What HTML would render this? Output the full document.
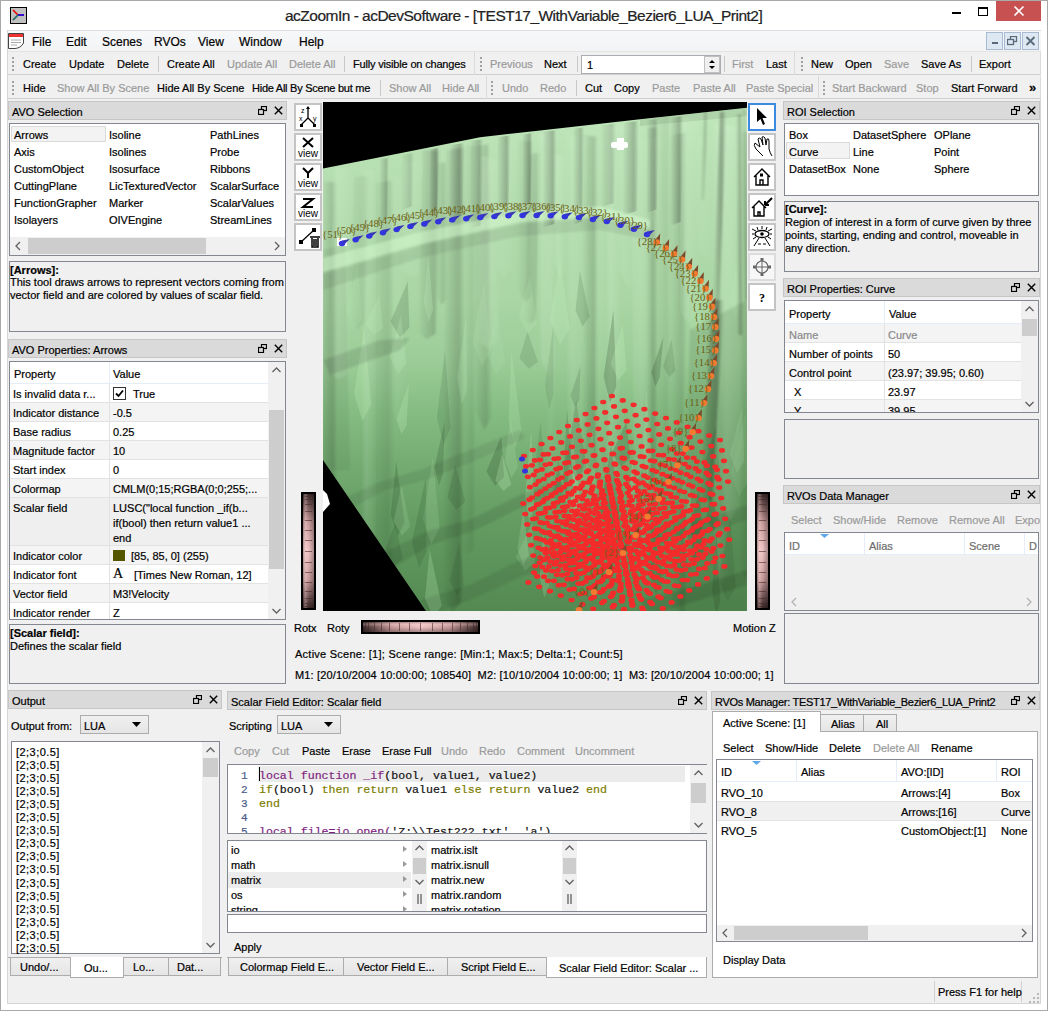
<!DOCTYPE html>
<html><head><meta charset="utf-8"><style>
html,body{margin:0;padding:0;}
body{width:1048px;height:1011px;position:relative;overflow:hidden;background:#fff;font-family:"Liberation Sans",sans-serif;font-size:11px;color:#000;}
.t{position:absolute;white-space:pre;line-height:1;-webkit-text-stroke:0.2px currentColor;}
.b{position:absolute;box-sizing:border-box;}
svg{position:absolute;}
</style></head><body>
<div class="b" style="left:0px;top:0px;width:1048px;height:1011px;background:#fff;border:1px solid #a9a9a9;"></div>
<div class="b" style="left:8px;top:31px;width:1033px;height:973px;background:#f0f0f0;"></div>
<div class="b" style="left:7px;top:30px;width:1px;height:974px;background:#d5d5d5;"></div>
<div class="b" style="left:7px;top:1003px;width:1034px;height:1px;background:#d5d5d5;"></div>
<div class="b" style="left:1040px;top:30px;width:1px;height:974px;background:#d5d5d5;"></div>
<svg style="left:10px;top:7px" width="17" height="17" viewBox="0 0 17 17"><rect x="0.5" y="0.5" width="16" height="16" fill="#c0c0c0" stroke="#000"/><path d="M8 8 L3 3 M8 8 L14 8 M8 8 L3 13" stroke-width="1.5" fill="none" stroke="#e00"/><path d="M8 8 L14 8" stroke="#00f" stroke-width="1.5"/><path d="M8 8 L3 13" stroke="#088" stroke-width="1.5"/></svg>
<div class="t" style="left:285px;top:7.88px;font-size:15.5px;color:#222;letter-spacing:-0.51px;">acZoomIn - acDevSoftware - [TEST17_WithVariable_Bezier6_LUA_Print2]</div>
<div class="b" style="left:952px;top:12px;width:9px;height:2px;background:#000;"></div>
<div class="b" style="left:978px;top:7px;width:10px;height:9px;border:1px solid #000;border-top-width:2px;"></div>
<div class="b" style="left:996px;top:1px;width:45px;height:20px;background:#c75050;"></div>
<svg style="left:1012px;top:5px" width="14" height="12" viewBox="0 0 14 12"><path d="M2.5 1.5 L11.5 10.5 M11.5 1.5 L2.5 10.5" stroke="#fff" stroke-width="1.6"/></svg>
<div class="b" style="left:8px;top:30px;width:1033px;height:22px;background:linear-gradient(#f7f8fa,#f2f3f5);"></div>
<div class="b" style="left:8px;top:30px;width:1033px;height:1px;background:#dcdde0;"></div>
<div class="b" style="left:8px;top:51px;width:1033px;height:1px;background:#e3e3e3;"></div>
<svg style="left:8px;top:33px" width="17" height="17" viewBox="0 0 17 17"><path d="M0.5 0.5 H15.5 V10 Q13 15 7 15.5 H0.5 Z" fill="#fff" stroke="#444"/><rect x="1" y="1" width="14" height="3" fill="#e33"/><path d="M3 7 H13 M3 9.5 H13 M3 12 H9" stroke="#aaa"/></svg>
<div class="t" style="left:32px;top:35.84px;font-size:12px;">File</div>
<div class="t" style="left:66px;top:35.84px;font-size:12px;">Edit</div>
<div class="t" style="left:102px;top:35.84px;font-size:12px;">Scenes</div>
<div class="t" style="left:154px;top:35.84px;font-size:12px;">RVOs</div>
<div class="t" style="left:198px;top:35.84px;font-size:12px;">View</div>
<div class="t" style="left:239px;top:35.84px;font-size:12px;">Window</div>
<div class="t" style="left:299px;top:35.84px;font-size:12px;">Help</div>
<div class="b" style="left:986px;top:32px;width:17px;height:18px;background:#dde8f3;border:1px solid #a8bbd0;"></div>
<div class="b" style="left:1004px;top:32px;width:17px;height:18px;background:#dde8f3;border:1px solid #a8bbd0;"></div>
<div class="b" style="left:1022px;top:32px;width:17px;height:18px;background:#dde8f3;border:1px solid #a8bbd0;"></div>
<div class="b" style="left:992px;top:42px;width:6px;height:2px;background:#5a6a7a;"></div>
<svg style="left:1007px;top:36px" width="11" height="10" viewBox="0 0 11 10"><rect x="3.5" y="0.5" width="6" height="5" fill="none" stroke="#5a6a7a" stroke-width="1.3"/><rect x="0.5" y="3.5" width="6" height="5" fill="#dde8f3" stroke="#5a6a7a" stroke-width="1.3"/></svg>
<svg style="left:1025px;top:36px" width="11" height="10" viewBox="0 0 11 10"><path d="M1.5 1 L9.5 9 M9.5 1 L1.5 9" stroke="#5a6a7a" stroke-width="1.8"/></svg>
<div class="b" style="left:8px;top:52px;width:1033px;height:47px;background:#f0f0f0;"></div>
<div class="b" style="left:8px;top:52px;width:467px;height:23px;background:#f0f0f0;"></div>
<div class="b" style="left:8px;top:74px;width:467px;height:1px;background:#cfcfcf;"></div>
<div class="b" style="left:474px;top:52px;width:1px;height:23px;background:#dadada;"></div>
<div class="b" style="left:475px;top:52px;width:320px;height:23px;background:#f0f0f0;"></div>
<div class="b" style="left:475px;top:74px;width:320px;height:1px;background:#cfcfcf;"></div>
<div class="b" style="left:794px;top:52px;width:1px;height:23px;background:#dadada;"></div>
<div class="b" style="left:795px;top:52px;width:246px;height:23px;background:#f0f0f0;"></div>
<div class="b" style="left:795px;top:74px;width:246px;height:1px;background:#cfcfcf;"></div>
<div class="b" style="left:1040px;top:52px;width:1px;height:23px;background:#dadada;"></div>
<div class="b" style="left:8px;top:76px;width:479px;height:23px;background:#f0f0f0;"></div>
<div class="b" style="left:8px;top:98px;width:479px;height:1px;background:#cfcfcf;"></div>
<div class="b" style="left:486px;top:76px;width:1px;height:23px;background:#dadada;"></div>
<div class="b" style="left:487px;top:76px;width:332px;height:23px;background:#f0f0f0;"></div>
<div class="b" style="left:487px;top:98px;width:332px;height:1px;background:#cfcfcf;"></div>
<div class="b" style="left:818px;top:76px;width:1px;height:23px;background:#dadada;"></div>
<div class="b" style="left:819px;top:76px;width:222px;height:23px;background:#f0f0f0;"></div>
<div class="b" style="left:819px;top:98px;width:222px;height:1px;background:#cfcfcf;"></div>
<div class="b" style="left:1040px;top:76px;width:1px;height:23px;background:#dadada;"></div>
<div class="b" style="left:12px;top:57px;width:2px;height:2px;background:#a0a0a0;"></div>
<div class="b" style="left:12px;top:61px;width:2px;height:2px;background:#a0a0a0;"></div>
<div class="b" style="left:12px;top:65px;width:2px;height:2px;background:#a0a0a0;"></div>
<div class="b" style="left:12px;top:69px;width:2px;height:2px;background:#a0a0a0;"></div>
<div class="b" style="left:480px;top:57px;width:2px;height:2px;background:#a0a0a0;"></div>
<div class="b" style="left:480px;top:61px;width:2px;height:2px;background:#a0a0a0;"></div>
<div class="b" style="left:480px;top:65px;width:2px;height:2px;background:#a0a0a0;"></div>
<div class="b" style="left:480px;top:69px;width:2px;height:2px;background:#a0a0a0;"></div>
<div class="b" style="left:801px;top:57px;width:2px;height:2px;background:#a0a0a0;"></div>
<div class="b" style="left:801px;top:61px;width:2px;height:2px;background:#a0a0a0;"></div>
<div class="b" style="left:801px;top:65px;width:2px;height:2px;background:#a0a0a0;"></div>
<div class="b" style="left:801px;top:69px;width:2px;height:2px;background:#a0a0a0;"></div>
<div class="b" style="left:12px;top:81px;width:2px;height:2px;background:#a0a0a0;"></div>
<div class="b" style="left:12px;top:85px;width:2px;height:2px;background:#a0a0a0;"></div>
<div class="b" style="left:12px;top:89px;width:2px;height:2px;background:#a0a0a0;"></div>
<div class="b" style="left:12px;top:93px;width:2px;height:2px;background:#a0a0a0;"></div>
<div class="b" style="left:491px;top:81px;width:2px;height:2px;background:#a0a0a0;"></div>
<div class="b" style="left:491px;top:85px;width:2px;height:2px;background:#a0a0a0;"></div>
<div class="b" style="left:491px;top:89px;width:2px;height:2px;background:#a0a0a0;"></div>
<div class="b" style="left:491px;top:93px;width:2px;height:2px;background:#a0a0a0;"></div>
<div class="b" style="left:823px;top:81px;width:2px;height:2px;background:#a0a0a0;"></div>
<div class="b" style="left:823px;top:85px;width:2px;height:2px;background:#a0a0a0;"></div>
<div class="b" style="left:823px;top:89px;width:2px;height:2px;background:#a0a0a0;"></div>
<div class="b" style="left:823px;top:93px;width:2px;height:2px;background:#a0a0a0;"></div>
<div class="t" style="left:23px;top:58.69px;">Create</div>
<div class="t" style="left:69px;top:58.69px;">Update</div>
<div class="t" style="left:117px;top:58.69px;">Delete</div>
<div class="t" style="left:167px;top:58.69px;">Create All</div>
<div class="t" style="left:227px;top:58.69px;color:#9a9a9a;">Update All</div>
<div class="t" style="left:289px;top:58.69px;color:#9a9a9a;">Delete All</div>
<div class="t" style="left:353px;top:58.69px;letter-spacing:-0.18px;">Fully visible on changes</div>
<div class="t" style="left:490px;top:58.69px;color:#9a9a9a;">Previous</div>
<div class="t" style="left:544px;top:58.69px;">Next</div>
<div class="t" style="left:732px;top:58.69px;color:#9a9a9a;">First</div>
<div class="t" style="left:766px;top:58.69px;">Last</div>
<div class="t" style="left:811px;top:58.69px;">New</div>
<div class="t" style="left:845px;top:58.69px;">Open</div>
<div class="t" style="left:884px;top:58.69px;color:#9a9a9a;">Save</div>
<div class="t" style="left:921px;top:58.69px;">Save As</div>
<div class="t" style="left:979px;top:58.69px;">Export</div>
<div class="b" style="left:158px;top:56px;width:1px;height:16px;background:#c9c9c9;"></div>
<div class="b" style="left:344px;top:56px;width:1px;height:16px;background:#c9c9c9;"></div>
<div class="b" style="left:577px;top:56px;width:1px;height:16px;background:#c9c9c9;"></div>
<div class="b" style="left:724px;top:56px;width:1px;height:16px;background:#c9c9c9;"></div>
<div class="b" style="left:971px;top:56px;width:1px;height:16px;background:#c9c9c9;"></div>
<div class="b" style="left:581px;top:55px;width:140px;height:19px;background:#fff;border:1px solid #abadb3;"></div>
<div class="t" style="left:587px;top:59.69px;">1</div>
<div class="b" style="left:704px;top:56px;width:16px;height:17px;background:#f0f0f0;border:1px solid #c0c0c0;"></div>
<svg style="left:707px;top:57px" width="10" height="15" viewBox="0 0 10 15"><path d="M2 6 L5 3 L8 6 Z M2 9 L5 12 L8 9 Z" fill="#000"/></svg>
<div class="t" style="left:23px;top:82.69px;">Hide</div>
<div class="t" style="left:57px;top:82.69px;color:#9a9a9a;">Show All By Scene</div>
<div class="t" style="left:157px;top:82.69px;">Hide All By Scene</div>
<div class="t" style="left:252px;top:82.69px;letter-spacing:-0.25px;">Hide All By Scene but me</div>
<div class="t" style="left:389px;top:82.69px;color:#9a9a9a;">Show All</div>
<div class="t" style="left:442px;top:82.69px;color:#9a9a9a;">Hide All</div>
<div class="t" style="left:502px;top:82.69px;color:#9a9a9a;">Undo</div>
<div class="t" style="left:540px;top:82.69px;color:#9a9a9a;">Redo</div>
<div class="t" style="left:585px;top:82.69px;">Cut</div>
<div class="t" style="left:614px;top:82.69px;">Copy</div>
<div class="t" style="left:652px;top:82.69px;color:#9a9a9a;">Paste</div>
<div class="t" style="left:693px;top:82.69px;color:#9a9a9a;">Paste All</div>
<div class="t" style="left:746px;top:82.69px;color:#9a9a9a;">Paste Special</div>
<div class="t" style="left:832px;top:82.69px;color:#9a9a9a;">Start Backward</div>
<div class="t" style="left:916px;top:82.69px;color:#9a9a9a;">Stop</div>
<div class="t" style="left:951px;top:82.69px;">Start Forward</div>
<div class="b" style="left:380px;top:80px;width:1px;height:16px;background:#c9c9c9;"></div>
<div class="b" style="left:576px;top:80px;width:1px;height:16px;background:#c9c9c9;"></div>
<div class="t" style="left:1029px;top:81.00px;font-size:13px;font-weight:bold;">»</div>
<div class="b" style="left:8px;top:101px;width:279px;height:19px;background:#dadada;border:1px solid #c6c6c6;"></div>
<div class="t" style="left:12px;top:106.69px;">AVO Selection</div>
<svg style="left:258px;top:106px" width="9" height="9" viewBox="0 0 9 9"><rect x="3.5" y="0.5" width="5" height="4" fill="none" stroke="#000" stroke-width="1.2"/><rect x="0.5" y="3.5" width="5" height="5" fill="#dadada" stroke="#000" stroke-width="1.2"/></svg>
<svg style="left:274px;top:106px" width="9" height="9" viewBox="0 0 9 9"><path d="M0.8 0.8 L8.2 8.2 M8.2 0.8 L0.8 8.2" stroke="#000" stroke-width="1.4"/></svg>
<div class="b" style="left:9px;top:123px;width:277px;height:133px;background:#fff;border:1px solid #828790;"></div>
<div class="b" style="left:11px;top:126px;width:95px;height:16px;background:#f3f3f3;border:1px solid #dadada;"></div>
<div class="t" style="left:14px;top:129.69px;">Arrows</div>
<div class="t" style="left:14px;top:146.69px;">Axis</div>
<div class="t" style="left:14px;top:163.69px;">CustomObject</div>
<div class="t" style="left:14px;top:180.69px;">CuttingPlane</div>
<div class="t" style="left:14px;top:197.69px;">FunctionGrapher</div>
<div class="t" style="left:14px;top:214.69px;">Isolayers</div>
<div class="t" style="left:109px;top:129.69px;">Isoline</div>
<div class="t" style="left:109px;top:146.69px;">Isolines</div>
<div class="t" style="left:109px;top:163.69px;">Isosurface</div>
<div class="t" style="left:109px;top:180.69px;">LicTexturedVector</div>
<div class="t" style="left:109px;top:197.69px;">Marker</div>
<div class="t" style="left:109px;top:214.69px;">OIVEngine</div>
<div class="t" style="left:210px;top:129.69px;">PathLines</div>
<div class="t" style="left:210px;top:146.69px;">Probe</div>
<div class="t" style="left:210px;top:163.69px;">Ribbons</div>
<div class="t" style="left:210px;top:180.69px;">ScalarSurface</div>
<div class="t" style="left:210px;top:197.69px;">ScalarValues</div>
<div class="t" style="left:210px;top:214.69px;">StreamLines</div>
<div class="b" style="left:10px;top:237px;width:275px;height:18px;background:#f0f0f0;"></div>
<div class="b" style="left:28px;top:238px;width:178px;height:16px;background:#cdcdcd;"></div>
<svg style="left:12px;top:239px" width="12" height="14" viewBox="0 0 12 14"><path d="M8 3 L4 7 L8 11" fill="none" stroke="#606060" stroke-width="1.3"/></svg>
<svg style="left:271px;top:239px" width="12" height="14" viewBox="0 0 12 14"><path d="M4 3 L8 7 L4 11" fill="none" stroke="#606060" stroke-width="1.3"/></svg>
<div class="b" style="left:9px;top:261px;width:277px;height:71px;background:#f0f0f0;border:1px solid #828790;"></div>
<div class="t" style="left:10px;top:264.69px;font-weight:bold;">[Arrows]:</div>
<div class="t" style="left:10px;top:276.69px;">This tool draws arrows to represent vectors coming from</div>
<div class="t" style="left:10px;top:289.69px;">vector field and are colored by values of scalar field.</div>
<div class="b" style="left:8px;top:339px;width:279px;height:19px;background:#dadada;border:1px solid #c6c6c6;"></div>
<div class="t" style="left:12px;top:344.69px;">AVO Properties: Arrows</div>
<svg style="left:258px;top:344px" width="9" height="9" viewBox="0 0 9 9"><rect x="3.5" y="0.5" width="5" height="4" fill="none" stroke="#000" stroke-width="1.2"/><rect x="0.5" y="3.5" width="5" height="5" fill="#dadada" stroke="#000" stroke-width="1.2"/></svg>
<svg style="left:274px;top:344px" width="9" height="9" viewBox="0 0 9 9"><path d="M0.8 0.8 L8.2 8.2 M8.2 0.8 L0.8 8.2" stroke="#000" stroke-width="1.4"/></svg>
<div class="b" style="left:9px;top:361px;width:277px;height:259px;background:#fff;border:1px solid #828790;"></div>
<div class="b" style="left:10px;top:362px;width:258px;height:22px;background:#fff;"></div>
<div class="b" style="left:10px;top:383px;width:258px;height:1px;background:#e5eef8;"></div>
<div class="b" style="left:109px;top:362px;width:1px;height:22px;background:#e5eef8;"></div>
<div class="t" style="left:14px;top:368.69px;">Property</div>
<div class="t" style="left:113px;top:368.69px;">Value</div>
<div class="b" style="left:10px;top:384px;width:258px;height:19px;background:#fff;"></div>
<div class="b" style="left:10px;top:402px;width:258px;height:1px;background:#e2e2e2;"></div>
<div class="b" style="left:109px;top:384px;width:1px;height:19px;background:#e2e2e2;"></div>
<div class="t" style="left:13px;top:388.69px;">Is invalid data r...</div>
<div class="b" style="left:113px;top:387px;width:13px;height:13px;background:#fff;border:1px solid #333;"></div>
<svg style="left:114px;top:388px" width="11" height="11" viewBox="0 0 11 11"><path d="M2 5.5 L4.5 8 L9 2.5" fill="none" stroke="#000" stroke-width="1.8"/></svg>
<div class="t" style="left:133px;top:388.69px;">True</div>
<div class="b" style="left:10px;top:403px;width:258px;height:19px;background:#f4f4f4;"></div>
<div class="b" style="left:10px;top:421px;width:258px;height:1px;background:#e2e2e2;"></div>
<div class="b" style="left:109px;top:403px;width:1px;height:19px;background:#e2e2e2;"></div>
<div class="t" style="left:13px;top:407.69px;">Indicator distance</div>
<div class="t" style="left:113px;top:407.69px;">-0.5</div>
<div class="b" style="left:10px;top:422px;width:258px;height:19px;background:#fff;"></div>
<div class="b" style="left:10px;top:440px;width:258px;height:1px;background:#e2e2e2;"></div>
<div class="b" style="left:109px;top:422px;width:1px;height:19px;background:#e2e2e2;"></div>
<div class="t" style="left:13px;top:426.69px;">Base radius</div>
<div class="t" style="left:113px;top:426.69px;">0.25</div>
<div class="b" style="left:10px;top:441px;width:258px;height:19px;background:#f4f4f4;"></div>
<div class="b" style="left:10px;top:459px;width:258px;height:1px;background:#e2e2e2;"></div>
<div class="b" style="left:109px;top:441px;width:1px;height:19px;background:#e2e2e2;"></div>
<div class="t" style="left:13px;top:445.69px;">Magnitude factor</div>
<div class="t" style="left:113px;top:445.69px;">10</div>
<div class="b" style="left:10px;top:460px;width:258px;height:19px;background:#fff;"></div>
<div class="b" style="left:10px;top:478px;width:258px;height:1px;background:#e2e2e2;"></div>
<div class="b" style="left:109px;top:460px;width:1px;height:19px;background:#e2e2e2;"></div>
<div class="t" style="left:13px;top:464.69px;">Start index</div>
<div class="t" style="left:113px;top:464.69px;">0</div>
<div class="b" style="left:10px;top:479px;width:258px;height:19px;background:#f4f4f4;"></div>
<div class="b" style="left:10px;top:497px;width:258px;height:1px;background:#e2e2e2;"></div>
<div class="b" style="left:109px;top:479px;width:1px;height:19px;background:#e2e2e2;"></div>
<div class="t" style="left:13px;top:483.69px;">Colormap</div>
<div class="t" style="left:113px;top:483.69px;">CMLM(0;15;RGBA(0;0;255;...</div>
<div class="b" style="left:10px;top:498px;width:258px;height:48px;background:#efefef;"></div>
<div class="b" style="left:10px;top:545px;width:258px;height:1px;background:#e2e2e2;"></div>
<div class="b" style="left:109px;top:498px;width:1px;height:48px;background:#e2e2e2;"></div>
<div class="t" style="left:13px;top:502.69px;">Scalar field</div>
<div class="t" style="left:113px;top:502.69px;">LUSC("local function _if(b...</div>
<div class="t" style="left:113px;top:517.69px;">if(bool) then return value1 ...</div>
<div class="t" style="left:113px;top:532.69px;">end</div>
<div class="b" style="left:10px;top:546px;width:258px;height:19px;background:#f4f4f4;"></div>
<div class="b" style="left:10px;top:564px;width:258px;height:1px;background:#e2e2e2;"></div>
<div class="b" style="left:109px;top:546px;width:1px;height:19px;background:#e2e2e2;"></div>
<div class="t" style="left:13px;top:550.69px;">Indicator color</div>
<div class="b" style="left:113px;top:550px;width:12px;height:11px;background:#555500;"></div>
<div class="t" style="left:131px;top:550.69px;">[85, 85, 0] (255)</div>
<div class="b" style="left:10px;top:565px;width:258px;height:19px;background:#fff;"></div>
<div class="b" style="left:10px;top:583px;width:258px;height:1px;background:#e2e2e2;"></div>
<div class="b" style="left:109px;top:565px;width:1px;height:19px;background:#e2e2e2;"></div>
<div class="t" style="left:13px;top:569.69px;">Indicator font</div>
<div class="t" style="left:113px;top:567.15px;font-size:14px;font-family:'Liberation Serif',serif;">A</div>
<div class="t" style="left:134px;top:569.69px;">[Times New Roman, 12]</div>
<div class="b" style="left:10px;top:584px;width:258px;height:19px;background:#f4f4f4;"></div>
<div class="b" style="left:10px;top:602px;width:258px;height:1px;background:#e2e2e2;"></div>
<div class="b" style="left:109px;top:584px;width:1px;height:19px;background:#e2e2e2;"></div>
<div class="t" style="left:13px;top:588.69px;">Vector field</div>
<div class="t" style="left:113px;top:588.69px;">M3!Velocity</div>
<div class="b" style="left:10px;top:603px;width:258px;height:16px;background:#fff;"></div>
<div class="b" style="left:109px;top:603px;width:1px;height:16px;background:#e2e2e2;"></div>
<div class="t" style="left:13px;top:607.69px;">Indicator render</div>
<div class="t" style="left:113px;top:607.69px;">Z</div>
<div class="b" style="left:268px;top:362px;width:17px;height:257px;background:#f0f0f0;"></div>
<div class="b" style="left:269px;top:410px;width:15px;height:159px;background:#cdcdcd;"></div>
<svg style="left:268px;top:362px" width="17" height="17" viewBox="0 0 17 17"><path d="M4.5 10 L8.5 6 L12.5 10" fill="none" stroke="#606060" stroke-width="1.3"/></svg>
<svg style="left:268px;top:602px" width="17" height="17" viewBox="0 0 17 17"><path d="M4.5 7 L8.5 11 L12.5 7" fill="none" stroke="#606060" stroke-width="1.3"/></svg>
<div class="b" style="left:9px;top:624px;width:277px;height:60px;background:#f0f0f0;border:1px solid #828790;"></div>
<div class="t" style="left:10px;top:627.69px;font-weight:bold;">[Scalar field]:</div>
<div class="t" style="left:10px;top:640.69px;">Defines the scalar field</div>
<div class="b" style="left:294px;top:103px;width:28px;height:28px;background:#fff;border:1px solid #c4c4c4;border-width:2px;"></div>
<svg style="left:294px;top:103px" width="28" height="28" viewBox="0 0 28 28"><path d="M14 4 V15 L7 22 M14 15 L21 22" stroke="#000" fill="none" stroke-width="1.3"/><path d="M12 6 L14 3 L16 6 Z" fill="#000"/><rect x="6" y="21" width="3" height="3"/><rect x="19" y="21" width="3" height="3"/><text x="7" y="10" font-size="7" font-family="Liberation Sans">z</text><text x="5" y="18" font-size="7" font-family="Liberation Sans">x</text><text x="19" y="18" font-size="7" font-family="Liberation Sans">y</text></svg>
<div class="b" style="left:294px;top:133px;width:28px;height:28px;background:#fff;border:1px solid #c4c4c4;border-width:2px;"></div>
<svg style="left:294px;top:133px" width="28" height="28" viewBox="0 0 28 28"><path d="M9 5 L19 14 M19 5 L9 14" stroke="#000" stroke-width="2"/><text x="14" y="24" font-size="10" text-anchor="middle" font-family="Liberation Sans">view</text></svg>
<div class="b" style="left:294px;top:163px;width:28px;height:28px;background:#fff;border:1px solid #c4c4c4;border-width:2px;"></div>
<svg style="left:294px;top:163px" width="28" height="28" viewBox="0 0 28 28"><path d="M9 5 L14 10 L19 5 M14 10 V15" stroke="#000" stroke-width="2" fill="none"/><text x="14" y="24" font-size="10" text-anchor="middle" font-family="Liberation Sans">view</text></svg>
<div class="b" style="left:294px;top:193px;width:28px;height:28px;background:#fff;border:1px solid #c4c4c4;border-width:2px;"></div>
<svg style="left:294px;top:193px" width="28" height="28" viewBox="0 0 28 28"><path d="M9 6 H19 L9 14 H19" stroke="#000" stroke-width="2" fill="none"/><text x="14" y="24" font-size="10" text-anchor="middle" font-family="Liberation Sans">view</text></svg>
<div class="b" style="left:294px;top:223px;width:28px;height:28px;background:#fff;border:1px solid #c4c4c4;border-width:2px;"></div>
<svg style="left:294px;top:223px" width="28" height="28" viewBox="0 0 28 28"><path d="M7 19 L20 7" stroke="#000" stroke-width="1.2"/><rect x="5" y="17" width="4" height="4"/><rect x="18" y="5" width="4" height="4"/><path d="M16 14 H26 M18 15 V24 H24 V15 M20 16 V23 M22 16 V23" stroke="#000" stroke-width="1.5" fill="none"/></svg>
<div class="b" style="left:748px;top:103px;width:28px;height:28px;background:#fff;border:1px solid #3c8be0;border-width:2px;"></div>
<svg style="left:748px;top:103px" width="28" height="28" viewBox="0 0 28 28"><path d="M9 5 V19 L12.5 16 L15 22 L17 21 L14.5 15 L19 15 Z" fill="#000"/></svg>
<div class="b" style="left:748px;top:133px;width:28px;height:28px;background:#fff;border:1px solid #c4c4c4;border-width:2px;"></div>
<svg style="left:748px;top:133px" width="28" height="28" viewBox="0 0 28 28"><path d="M8 16 Q5 12 7 10 L12 14 L10 6 Q11 4 13 6 L15 12 L14 4 Q16 3 17 5 L18 12 L19 6 Q21 5 21 8 L21 16 Q22 20 24 23 M8 16 L15 23" fill="none" stroke="#000" stroke-width="1"/></svg>
<div class="b" style="left:748px;top:163px;width:28px;height:28px;background:#fff;border:1px solid #c4c4c4;border-width:2px;"></div>
<svg style="left:748px;top:163px" width="28" height="28" viewBox="0 0 28 28"><path d="M6 14 L14 6 L22 14 M8 12 V22 H20 V12 M12 22 V17 H15 V22" fill="none" stroke="#000" stroke-width="1.4"/><rect x="12.5" y="11" width="2" height="2" fill="none" stroke="#000"/></svg>
<div class="b" style="left:748px;top:193px;width:28px;height:28px;background:#fff;border:1px solid #c4c4c4;border-width:2px;"></div>
<svg style="left:748px;top:193px" width="28" height="28" viewBox="0 0 28 28"><path d="M4 15 L11 8 L18 15 M6 13 V23 H16 V13 M10 23 V19 H12 V23" fill="none" stroke="#000" stroke-width="1.4"/><path d="M24 5 L17 12 M17 12 V8 M17 12 H21" stroke="#000" stroke-width="2" fill="none"/></svg>
<div class="b" style="left:748px;top:223px;width:28px;height:28px;background:#fff;border:1px solid #c4c4c4;border-width:2px;"></div>
<svg style="left:748px;top:223px" width="28" height="28" viewBox="0 0 28 28"><ellipse cx="14" cy="11" rx="7" ry="3.5" fill="none" stroke="#000" stroke-width="1.3"/><circle cx="14" cy="11" r="1.8"/><path d="M4 6 L8 8 M24 6 L20 8 M14 3 V6 M9 4 L10 7 M19 4 L18 7 M4 11 H6 M22 11 H24 M5 16 L8 14 M23 16 L20 14 M11 15 L6 23 M17 15 L22 23 M10 21 L13 21 M18 21 L15 21" stroke="#000" stroke-width="1" fill="none"/></svg>
<div class="b" style="left:748px;top:253px;width:28px;height:28px;background:#f7f7f7;border:1px solid #dcdcdc;border-width:2px;"></div>
<svg style="left:748px;top:253px" width="28" height="28" viewBox="0 0 28 28"><circle cx="14" cy="14" r="6" fill="none" stroke="#666" stroke-width="1.2"/><path d="M14 5 V23 M5 14 H23" stroke="#666" stroke-width="1"/><rect x="12.5" y="5" width="3" height="3" fill="#666"/><rect x="12.5" y="20" width="3" height="3" fill="#666"/><rect x="5" y="12.5" width="3" height="3" fill="#666"/><rect x="20" y="12.5" width="3" height="3" fill="#666"/></svg>
<div class="b" style="left:748px;top:283px;width:28px;height:28px;background:#fff;border:1px solid #c4c4c4;border-width:2px;"></div>
<svg style="left:748px;top:283px" width="28" height="28" viewBox="0 0 28 28"><rect x="6" y="6" width="16" height="16" fill="#fff"/><text x="14" y="19" font-size="12" font-weight="bold" text-anchor="middle" font-family="Liberation Serif">?</text></svg>
<div class="b" style="left:301px;top:492px;width:15px;height:118px;background:#000;"></div>
<div class="b" style="left:303px;top:494px;width:11px;height:114px;background:linear-gradient(#3a2828,#c89a9a 25%,#f0c4c4 50%,#c89a9a 75%,#3a2828);"></div>
<div class="b" style="left:303px;top:494px;width:11px;height:114px;background:linear-gradient(90deg,rgba(0,0,0,0.25),rgba(255,220,220,0.35) 20%,rgba(0,0,0,0) 50%,rgba(0,0,0,0.3));"></div>
<div class="b" style="left:305px;top:496px;width:7px;height:1px;background:rgba(70,40,40,0.6);"></div>
<div class="b" style="left:305px;top:499px;width:7px;height:1px;background:rgba(70,40,40,0.6);"></div>
<div class="b" style="left:305px;top:504px;width:7px;height:1px;background:rgba(70,40,40,0.6);"></div>
<div class="b" style="left:305px;top:511px;width:7px;height:1px;background:rgba(70,40,40,0.6);"></div>
<div class="b" style="left:305px;top:520px;width:7px;height:1px;background:rgba(70,40,40,0.6);"></div>
<div class="b" style="left:305px;top:530px;width:7px;height:1px;background:rgba(70,40,40,0.6);"></div>
<div class="b" style="left:305px;top:540px;width:7px;height:1px;background:rgba(70,40,40,0.6);"></div>
<div class="b" style="left:305px;top:551px;width:7px;height:1px;background:rgba(70,40,40,0.6);"></div>
<div class="b" style="left:305px;top:562px;width:7px;height:1px;background:rgba(70,40,40,0.6);"></div>
<div class="b" style="left:305px;top:572px;width:7px;height:1px;background:rgba(70,40,40,0.6);"></div>
<div class="b" style="left:305px;top:582px;width:7px;height:1px;background:rgba(70,40,40,0.6);"></div>
<div class="b" style="left:305px;top:591px;width:7px;height:1px;background:rgba(70,40,40,0.6);"></div>
<div class="b" style="left:305px;top:598px;width:7px;height:1px;background:rgba(70,40,40,0.6);"></div>
<div class="b" style="left:305px;top:603px;width:7px;height:1px;background:rgba(70,40,40,0.6);"></div>
<div class="b" style="left:305px;top:606px;width:7px;height:1px;background:rgba(70,40,40,0.6);"></div>
<div class="b" style="left:755px;top:492px;width:15px;height:118px;background:#000;"></div>
<div class="b" style="left:757px;top:494px;width:11px;height:114px;background:linear-gradient(#3a2828,#c89a9a 25%,#f0c4c4 50%,#c89a9a 75%,#3a2828);"></div>
<div class="b" style="left:757px;top:494px;width:11px;height:114px;background:linear-gradient(90deg,rgba(0,0,0,0.25),rgba(255,220,220,0.35) 20%,rgba(0,0,0,0) 50%,rgba(0,0,0,0.3));"></div>
<div class="b" style="left:759px;top:496px;width:7px;height:1px;background:rgba(70,40,40,0.6);"></div>
<div class="b" style="left:759px;top:499px;width:7px;height:1px;background:rgba(70,40,40,0.6);"></div>
<div class="b" style="left:759px;top:504px;width:7px;height:1px;background:rgba(70,40,40,0.6);"></div>
<div class="b" style="left:759px;top:511px;width:7px;height:1px;background:rgba(70,40,40,0.6);"></div>
<div class="b" style="left:759px;top:520px;width:7px;height:1px;background:rgba(70,40,40,0.6);"></div>
<div class="b" style="left:759px;top:530px;width:7px;height:1px;background:rgba(70,40,40,0.6);"></div>
<div class="b" style="left:759px;top:540px;width:7px;height:1px;background:rgba(70,40,40,0.6);"></div>
<div class="b" style="left:759px;top:551px;width:7px;height:1px;background:rgba(70,40,40,0.6);"></div>
<div class="b" style="left:759px;top:562px;width:7px;height:1px;background:rgba(70,40,40,0.6);"></div>
<div class="b" style="left:759px;top:572px;width:7px;height:1px;background:rgba(70,40,40,0.6);"></div>
<div class="b" style="left:759px;top:582px;width:7px;height:1px;background:rgba(70,40,40,0.6);"></div>
<div class="b" style="left:759px;top:591px;width:7px;height:1px;background:rgba(70,40,40,0.6);"></div>
<div class="b" style="left:759px;top:598px;width:7px;height:1px;background:rgba(70,40,40,0.6);"></div>
<div class="b" style="left:759px;top:603px;width:7px;height:1px;background:rgba(70,40,40,0.6);"></div>
<div class="b" style="left:759px;top:606px;width:7px;height:1px;background:rgba(70,40,40,0.6);"></div>
<div class="b" style="left:361px;top:620px;width:119px;height:14px;background:#000;"></div>
<div class="b" style="left:363px;top:622px;width:115px;height:10px;background:linear-gradient(90deg,#3a2828,#c89a9a 25%,#f0c4c4 50%,#c89a9a 75%,#3a2828);"></div>
<div class="b" style="left:363px;top:622px;width:115px;height:10px;background:linear-gradient(rgba(0,0,0,0.25),rgba(255,220,220,0.35) 20%,rgba(0,0,0,0) 50%,rgba(0,0,0,0.3));"></div>
<div class="b" style="left:365px;top:623px;width:1px;height:8px;background:rgba(70,40,40,0.6);"></div>
<div class="b" style="left:368px;top:623px;width:1px;height:8px;background:rgba(70,40,40,0.6);"></div>
<div class="b" style="left:374px;top:623px;width:1px;height:8px;background:rgba(70,40,40,0.6);"></div>
<div class="b" style="left:381px;top:623px;width:1px;height:8px;background:rgba(70,40,40,0.6);"></div>
<div class="b" style="left:389px;top:623px;width:1px;height:8px;background:rgba(70,40,40,0.6);"></div>
<div class="b" style="left:399px;top:623px;width:1px;height:8px;background:rgba(70,40,40,0.6);"></div>
<div class="b" style="left:409px;top:623px;width:1px;height:8px;background:rgba(70,40,40,0.6);"></div>
<div class="b" style="left:420px;top:623px;width:1px;height:8px;background:rgba(70,40,40,0.6);"></div>
<div class="b" style="left:432px;top:623px;width:1px;height:8px;background:rgba(70,40,40,0.6);"></div>
<div class="b" style="left:442px;top:623px;width:1px;height:8px;background:rgba(70,40,40,0.6);"></div>
<div class="b" style="left:452px;top:623px;width:1px;height:8px;background:rgba(70,40,40,0.6);"></div>
<div class="b" style="left:460px;top:623px;width:1px;height:8px;background:rgba(70,40,40,0.6);"></div>
<div class="b" style="left:467px;top:623px;width:1px;height:8px;background:rgba(70,40,40,0.6);"></div>
<div class="b" style="left:473px;top:623px;width:1px;height:8px;background:rgba(70,40,40,0.6);"></div>
<div class="b" style="left:476px;top:623px;width:1px;height:8px;background:rgba(70,40,40,0.6);"></div>
<div class="t" style="left:294px;top:622.69px;">Rotx</div>
<div class="t" style="left:327px;top:622.69px;">Roty</div>
<div class="t" style="left:733px;top:622.69px;">Motion Z</div>
<div class="t" style="left:295px;top:648.69px;letter-spacing:0.25px;">Active Scene: [1]; Scene range: [Min:1; Max:5; Delta:1; Count:5]</div>
<div class="t" style="left:295px;top:669.69px;letter-spacing:0.15px;">M1: [20/10/2004 10:00:00; 108540]  M2: [10/10/2004 10:00:00; 1]  M3: [20/10/2004 10:00:00; 1]</div>
<div class="b" style="left:783px;top:101px;width:257px;height:19px;background:#dadada;border:1px solid #c6c6c6;"></div>
<div class="t" style="left:787px;top:106.69px;">ROI Selection</div>
<svg style="left:1011px;top:106px" width="9" height="9" viewBox="0 0 9 9"><rect x="3.5" y="0.5" width="5" height="4" fill="none" stroke="#000" stroke-width="1.2"/><rect x="0.5" y="3.5" width="5" height="5" fill="#dadada" stroke="#000" stroke-width="1.2"/></svg>
<svg style="left:1027px;top:106px" width="9" height="9" viewBox="0 0 9 9"><path d="M0.8 0.8 L8.2 8.2 M8.2 0.8 L0.8 8.2" stroke="#000" stroke-width="1.4"/></svg>
<div class="b" style="left:784px;top:123px;width:255px;height:73px;background:#fff;border:1px solid #828790;"></div>
<div class="b" style="left:786px;top:142px;width:64px;height:17px;background:#f3f3f3;border:1px solid #dadada;"></div>
<div class="t" style="left:789px;top:129.69px;">Box</div>
<div class="t" style="left:789px;top:146.69px;">Curve</div>
<div class="t" style="left:789px;top:163.69px;">DatasetBox</div>
<div class="t" style="left:853px;top:129.69px;">DatasetSphere</div>
<div class="t" style="left:853px;top:146.69px;">Line</div>
<div class="t" style="left:853px;top:163.69px;">None</div>
<div class="t" style="left:934px;top:129.69px;">OPlane</div>
<div class="t" style="left:934px;top:146.69px;">Point</div>
<div class="t" style="left:934px;top:163.69px;">Sphere</div>
<div class="b" style="left:784px;top:201px;width:255px;height:71px;background:#f0f0f0;border:1px solid #828790;"></div>
<div class="t" style="left:785px;top:203.69px;font-weight:bold;">[Curve]:</div>
<div class="t" style="left:785px;top:216.69px;">Region of interest in a form of curve given by three</div>
<div class="t" style="left:785px;top:229.69px;">points, starting, ending and control, moveable in</div>
<div class="t" style="left:785px;top:242.69px;">any direction.</div>
<div class="b" style="left:783px;top:278px;width:257px;height:19px;background:#dadada;border:1px solid #c6c6c6;"></div>
<div class="t" style="left:787px;top:283.69px;">ROI Properties: Curve</div>
<svg style="left:1011px;top:283px" width="9" height="9" viewBox="0 0 9 9"><rect x="3.5" y="0.5" width="5" height="4" fill="none" stroke="#000" stroke-width="1.2"/><rect x="0.5" y="3.5" width="5" height="5" fill="#dadada" stroke="#000" stroke-width="1.2"/></svg>
<svg style="left:1027px;top:283px" width="9" height="9" viewBox="0 0 9 9"><path d="M0.8 0.8 L8.2 8.2 M8.2 0.8 L0.8 8.2" stroke="#000" stroke-width="1.4"/></svg>
<div class="b" style="left:784px;top:300px;width:255px;height:113px;background:#fff;border:1px solid #828790;"></div>
<div class="b" style="left:785px;top:301px;width:236px;height:23px;background:#fff;"></div>
<div class="b" style="left:785px;top:323px;width:236px;height:1px;background:#e5eef8;"></div>
<div class="b" style="left:884px;top:301px;width:1px;height:23px;background:#e5eef8;"></div>
<div class="t" style="left:789px;top:308.69px;">Property</div>
<div class="t" style="left:889px;top:308.69px;">Value</div>
<div class="b" style="left:785px;top:324px;width:236px;height:19px;background:#f4f4f4;"></div>
<div class="b" style="left:785px;top:342px;width:236px;height:1px;background:#e2e2e2;"></div>
<div class="b" style="left:884px;top:324px;width:1px;height:19px;background:#e2e2e2;"></div>
<div class="t" style="left:789px;top:329.69px;color:#8a8a8a;">Name</div>
<div class="t" style="left:888px;top:329.69px;color:#8a8a8a;">Curve</div>
<div class="b" style="left:785px;top:343px;width:236px;height:19px;background:#fff;"></div>
<div class="b" style="left:785px;top:361px;width:236px;height:1px;background:#e2e2e2;"></div>
<div class="b" style="left:884px;top:343px;width:1px;height:19px;background:#e2e2e2;"></div>
<div class="t" style="left:789px;top:348.69px;">Number of points</div>
<div class="t" style="left:888px;top:348.69px;">50</div>
<div class="b" style="left:785px;top:362px;width:236px;height:19px;background:#f4f4f4;"></div>
<div class="b" style="left:785px;top:380px;width:236px;height:1px;background:#e2e2e2;"></div>
<div class="b" style="left:884px;top:362px;width:1px;height:19px;background:#e2e2e2;"></div>
<div class="t" style="left:789px;top:367.69px;">Control point</div>
<div class="t" style="left:888px;top:367.69px;">(23.97; 39.95; 0.60)</div>
<div class="b" style="left:785px;top:381px;width:236px;height:19px;background:#fff;"></div>
<div class="b" style="left:785px;top:399px;width:236px;height:1px;background:#e2e2e2;"></div>
<div class="b" style="left:884px;top:381px;width:1px;height:19px;background:#e2e2e2;"></div>
<div class="t" style="left:794px;top:386.69px;">X</div>
<div class="t" style="left:888px;top:386.69px;">23.97</div>
<div class="b" style="left:785px;top:400px;width:236px;height:12px;background:#f4f4f4;"></div>
<div class="b" style="left:884px;top:400px;width:1px;height:12px;background:#e2e2e2;"></div>
<div class="t" style="left:794px;top:405.69px;">Y</div>
<div class="t" style="left:888px;top:405.69px;">39.95</div>
<div class="b" style="left:1021px;top:301px;width:17px;height:111px;background:#f0f0f0;"></div>
<div class="b" style="left:1022px;top:319px;width:15px;height:17px;background:#cdcdcd;"></div>
<svg style="left:1021px;top:301px" width="17" height="17" viewBox="0 0 17 17"><path d="M4.5 10 L8.5 6 L12.5 10" fill="none" stroke="#606060" stroke-width="1.3"/></svg>
<svg style="left:1021px;top:395px" width="17" height="17" viewBox="0 0 17 17"><path d="M4.5 7 L8.5 11 L12.5 7" fill="none" stroke="#606060" stroke-width="1.3"/></svg>
<div class="b" style="left:784px;top:412px;width:255px;height:6px;background:#f0f0f0;"></div>
<div class="b" style="left:784px;top:412px;width:255px;height:1px;background:#828790;"></div>
<div class="b" style="left:784px;top:419px;width:255px;height:60px;background:#f0f0f0;border:1px solid #828790;"></div>
<div class="b" style="left:783px;top:485px;width:257px;height:19px;background:#dadada;border:1px solid #c6c6c6;"></div>
<div class="t" style="left:787px;top:490.69px;">RVOs Data Manager</div>
<svg style="left:1011px;top:490px" width="9" height="9" viewBox="0 0 9 9"><rect x="3.5" y="0.5" width="5" height="4" fill="none" stroke="#000" stroke-width="1.2"/><rect x="0.5" y="3.5" width="5" height="5" fill="#dadada" stroke="#000" stroke-width="1.2"/></svg>
<svg style="left:1027px;top:490px" width="9" height="9" viewBox="0 0 9 9"><path d="M0.8 0.8 L8.2 8.2 M8.2 0.8 L0.8 8.2" stroke="#000" stroke-width="1.4"/></svg>
<div class="t" style="left:791px;top:514.69px;color:#9a9a9a;">Select</div>
<div class="t" style="left:833px;top:514.69px;color:#9a9a9a;">Show/Hide</div>
<div class="t" style="left:897px;top:514.69px;color:#9a9a9a;">Remove</div>
<div class="t" style="left:949px;top:514.69px;color:#9a9a9a;">Remove All</div>
<div class="t" style="left:1015px;top:514.69px;color:#9a9a9a;">Expo</div>
<div class="b" style="left:784px;top:532px;width:255px;height:79px;background:#f0f0f0;border:1px solid #828790;"></div>
<div class="b" style="left:785px;top:533px;width:253px;height:22px;background:#fff;"></div>
<div class="b" style="left:785px;top:554px;width:253px;height:1px;background:#e5eef8;"></div>
<div class="b" style="left:864px;top:533px;width:1px;height:22px;background:#e5eef8;"></div>
<div class="b" style="left:964px;top:533px;width:1px;height:22px;background:#e5eef8;"></div>
<div class="b" style="left:1024px;top:533px;width:1px;height:22px;background:#e5eef8;"></div>
<div class="t" style="left:789px;top:540.69px;color:#6d6d6d;">ID</div>
<div class="t" style="left:869px;top:540.69px;color:#6d6d6d;">Alias</div>
<div class="t" style="left:969px;top:540.69px;color:#6d6d6d;">Scene</div>
<div class="t" style="left:1029px;top:540.69px;color:#6d6d6d;">D</div>
<svg style="left:820px;top:534px" width="9" height="5" viewBox="0 0 9 5"><path d="M0 0 H9 L4.5 4 Z" fill="#5ea8e8"/></svg>
<div class="b" style="left:785px;top:593px;width:253px;height:17px;background:#f0f0f0;"></div>
<svg style="left:788px;top:595px" width="12" height="14" viewBox="0 0 12 14"><path d="M8 3 L4 7 L8 11" fill="none" stroke="#b0b0b0" stroke-width="1.2"/></svg>
<svg style="left:1023px;top:595px" width="12" height="14" viewBox="0 0 12 14"><path d="M4 3 L8 7 L4 11" fill="none" stroke="#b0b0b0" stroke-width="1.2"/></svg>
<div class="b" style="left:784px;top:613px;width:255px;height:71px;background:#f0f0f0;border:1px solid #828790;"></div>
<div class="b" style="left:8px;top:690px;width:214px;height:19px;background:#dadada;border:1px solid #c6c6c6;"></div>
<div class="t" style="left:12px;top:695.69px;">Output</div>
<svg style="left:193px;top:695px" width="9" height="9" viewBox="0 0 9 9"><rect x="3.5" y="0.5" width="5" height="4" fill="none" stroke="#000" stroke-width="1.2"/><rect x="0.5" y="3.5" width="5" height="5" fill="#dadada" stroke="#000" stroke-width="1.2"/></svg>
<svg style="left:209px;top:695px" width="9" height="9" viewBox="0 0 9 9"><path d="M0.8 0.8 L8.2 8.2 M8.2 0.8 L0.8 8.2" stroke="#000" stroke-width="1.4"/></svg>
<div class="t" style="left:11px;top:720.69px;">Output from:</div>
<div class="b" style="left:80px;top:715px;width:69px;height:19px;background:#e5e5e5;border:1px solid #acacac;background:linear-gradient(#f0f0f0,#e5e5e5);"></div>
<div class="t" style="left:84px;top:720.69px;">LUA</div>
<svg style="left:132px;top:722px" width="9" height="5" viewBox="0 0 9 5"><path d="M0 0 H9 L4.5 5 Z" fill="#000"/></svg>
<div class="b" style="left:11px;top:741px;width:209px;height:213px;background:#fff;border:1px solid #828790;"></div>
<div class="t" style="left:16px;top:746.69px;letter-spacing:0.45px;">[2;3;0.5]</div>
<div class="t" style="left:16px;top:759.69px;letter-spacing:0.45px;">[2;3;0.5]</div>
<div class="t" style="left:16px;top:772.69px;letter-spacing:0.45px;">[2;3;0.5]</div>
<div class="t" style="left:16px;top:785.69px;letter-spacing:0.45px;">[2;3;0.5]</div>
<div class="t" style="left:16px;top:798.69px;letter-spacing:0.45px;">[2;3;0.5]</div>
<div class="t" style="left:16px;top:811.69px;letter-spacing:0.45px;">[2;3;0.5]</div>
<div class="t" style="left:16px;top:824.69px;letter-spacing:0.45px;">[2;3;0.5]</div>
<div class="t" style="left:16px;top:837.69px;letter-spacing:0.45px;">[2;3;0.5]</div>
<div class="t" style="left:16px;top:850.69px;letter-spacing:0.45px;">[2;3;0.5]</div>
<div class="t" style="left:16px;top:863.69px;letter-spacing:0.45px;">[2;3;0.5]</div>
<div class="t" style="left:16px;top:877.69px;letter-spacing:0.45px;">[2;3;0.5]</div>
<div class="t" style="left:16px;top:890.69px;letter-spacing:0.45px;">[2;3;0.5]</div>
<div class="t" style="left:16px;top:903.69px;letter-spacing:0.45px;">[2;3;0.5]</div>
<div class="t" style="left:16px;top:916.69px;letter-spacing:0.45px;">[2;3;0.5]</div>
<div class="t" style="left:16px;top:929.69px;letter-spacing:0.45px;">[2;3;0.5]</div>
<div class="t" style="left:16px;top:942.69px;letter-spacing:0.45px;">[2;3;0.5]</div>
<div class="b" style="left:202px;top:742px;width:17px;height:211px;background:#f0f0f0;"></div>
<div class="b" style="left:203px;top:758px;width:15px;height:19px;background:#cdcdcd;"></div>
<svg style="left:202px;top:742px" width="17" height="17" viewBox="0 0 17 17"><path d="M4.5 10 L8.5 6 L12.5 10" fill="none" stroke="#606060" stroke-width="1.3"/></svg>
<svg style="left:202px;top:936px" width="17" height="17" viewBox="0 0 17 17"><path d="M4.5 7 L8.5 11 L12.5 7" fill="none" stroke="#606060" stroke-width="1.3"/></svg>
<div class="b" style="left:8px;top:957px;width:214px;height:1px;background:#acacac;"></div>
<div class="b" style="left:10px;top:957px;width:61px;height:19px;background:linear-gradient(#f0f0f0,#e5e5e5);border:1px solid #acacac;"></div>
<div class="t" style="left:20px;top:961.69px;">Undo/...</div>
<div class="b" style="left:70px;top:957px;width:54px;height:21px;background:#fff;border:1px solid #acacac;border-top:none;"></div>
<div class="t" style="left:84px;top:962.69px;">Ou...</div>
<div class="b" style="left:123px;top:957px;width:46px;height:19px;background:linear-gradient(#f0f0f0,#e5e5e5);border:1px solid #acacac;"></div>
<div class="t" style="left:133px;top:961.69px;">Lo...</div>
<div class="b" style="left:168px;top:957px;width:53px;height:19px;background:linear-gradient(#f0f0f0,#e5e5e5);border:1px solid #acacac;"></div>
<div class="t" style="left:177px;top:961.69px;">Dat...</div>
<div class="b" style="left:227px;top:691px;width:480px;height:19px;background:#dadada;border:1px solid #c6c6c6;"></div>
<div class="t" style="left:231px;top:696.69px;">Scalar Field Editor: Scalar field</div>
<svg style="left:678px;top:696px" width="9" height="9" viewBox="0 0 9 9"><rect x="3.5" y="0.5" width="5" height="4" fill="none" stroke="#000" stroke-width="1.2"/><rect x="0.5" y="3.5" width="5" height="5" fill="#dadada" stroke="#000" stroke-width="1.2"/></svg>
<svg style="left:694px;top:696px" width="9" height="9" viewBox="0 0 9 9"><path d="M0.8 0.8 L8.2 8.2 M8.2 0.8 L0.8 8.2" stroke="#000" stroke-width="1.4"/></svg>
<div class="t" style="left:229px;top:720.69px;">Scripting</div>
<div class="b" style="left:277px;top:715px;width:64px;height:19px;background:#e5e5e5;border:1px solid #acacac;background:linear-gradient(#f0f0f0,#e5e5e5);"></div>
<div class="t" style="left:281px;top:720.69px;">LUA</div>
<svg style="left:324px;top:722px" width="9" height="5" viewBox="0 0 9 5"><path d="M0 0 H9 L4.5 5 Z" fill="#000"/></svg>
<div class="t" style="left:234px;top:745.69px;color:#9a9a9a;">Copy</div>
<div class="t" style="left:272px;top:745.69px;color:#9a9a9a;">Cut</div>
<div class="t" style="left:302px;top:745.69px;">Paste</div>
<div class="t" style="left:342px;top:745.69px;">Erase</div>
<div class="t" style="left:382px;top:745.69px;">Erase Full</div>
<div class="t" style="left:441px;top:745.69px;color:#9a9a9a;">Undo</div>
<div class="t" style="left:479px;top:745.69px;color:#9a9a9a;">Redo</div>
<div class="t" style="left:517px;top:745.69px;color:#9a9a9a;">Comment</div>
<div class="t" style="left:575px;top:745.69px;color:#9a9a9a;">Uncomment</div>
<div class="b" style="left:227px;top:764px;width:480px;height:70px;background:#fff;border:1px solid #828790;"></div>
<div class="b" style="left:228px;top:765px;width:478px;height:68px;background:#fff;overflow:hidden;"></div>
<div class="b" style="left:258px;top:766px;width:427px;height:16px;background:#ebebeb;"></div>
<div class="b" style="left:259px;top:767px;width:1px;height:14px;background:#000;"></div>
<div class="t" style="left:241px;top:770.69px;color:#4a5a8a;font-family:'Liberation Mono',monospace;">1</div>
<div class="t" style="left:241px;top:784.69px;color:#4a5a8a;font-family:'Liberation Mono',monospace;">2</div>
<div class="t" style="left:241px;top:798.69px;color:#4a5a8a;font-family:'Liberation Mono',monospace;">3</div>
<div class="t" style="left:241px;top:812.69px;color:#4a5a8a;font-family:'Liberation Mono',monospace;">4</div>
<div class="t" style="left:259px;top:770.18px;font-size:11.6px;color:#7f1f7f;font-family:'Liberation Mono',monospace;">local function _if</div>
<div class="t" style="left:384.28px;top:770.18px;font-size:11.6px;color:#111;font-family:'Liberation Mono',monospace;">(bool, value1, value2)</div>
<div class="t" style="left:259px;top:784.18px;font-size:11.6px;color:#7d7d00;font-family:'Liberation Mono',monospace;">if</div>
<div class="t" style="left:272.92px;top:784.18px;font-size:11.6px;color:#111;font-family:'Liberation Mono',monospace;">(bool) </div>
<div class="t" style="left:321.64px;top:784.18px;font-size:11.6px;color:#7d7d00;font-family:'Liberation Mono',monospace;">then return </div>
<div class="t" style="left:405.15999999999997px;top:784.18px;font-size:11.6px;color:#111;font-family:'Liberation Mono',monospace;">value1 </div>
<div class="t" style="left:453.88px;top:784.18px;font-size:11.6px;color:#7d7d00;font-family:'Liberation Mono',monospace;">else return </div>
<div class="t" style="left:537.4px;top:784.18px;font-size:11.6px;color:#111;font-family:'Liberation Mono',monospace;">value2 </div>
<div class="t" style="left:586.12px;top:784.18px;font-size:11.6px;color:#7d7d00;font-family:'Liberation Mono',monospace;">end</div>
<div class="t" style="left:259px;top:798.18px;font-size:11.6px;color:#7d7d00;font-family:'Liberation Mono',monospace;">end</div>
<div class="b" style="left:228px;top:765px;width:462px;height:68px;overflow:hidden;">
<div class="t" style="left:31.00px;top:61.18px;font-size:11.6px;color:#7f1f7f;font-family:'Liberation Mono',monospace;">local file=io.open(</div>
<div class="t" style="left:163.24px;top:61.18px;font-size:11.6px;color:#111;font-family:'Liberation Mono',monospace;">'Z:\\Test222.txt'</div>
<div class="t" style="left:281.56px;top:61.18px;font-size:11.6px;color:#111;font-family:'Liberation Mono',monospace;">, </div>
<div class="t" style="left:295.48px;top:61.18px;font-size:11.6px;color:#111;font-family:'Liberation Mono',monospace;">'a'</div>
<div class="t" style="left:316.36px;top:61.18px;font-size:11.6px;color:#111;font-family:'Liberation Mono',monospace;">)</div>
<div class="t" style="left:13px;top:61.69px;font-size:11px;color:#4a5a8a;font-family:'Liberation Mono',monospace;">5</div>
</div>
<div class="b" style="left:690px;top:765px;width:17px;height:68px;background:#f0f0f0;"></div>
<div class="b" style="left:691px;top:783px;width:15px;height:20px;background:#cdcdcd;"></div>
<svg style="left:690px;top:765px" width="17" height="17" viewBox="0 0 17 17"><path d="M4.5 10 L8.5 6 L12.5 10" fill="none" stroke="#606060" stroke-width="1.3"/></svg>
<svg style="left:690px;top:816px" width="17" height="17" viewBox="0 0 17 17"><path d="M4.5 7 L8.5 11 L12.5 7" fill="none" stroke="#606060" stroke-width="1.3"/></svg>
<div class="b" style="left:227px;top:840px;width:480px;height:72px;background:#fff;border:1px solid #828790;"></div>
<div class="b" style="left:228px;top:872px;width:183px;height:16px;background:#ececec;"></div>
<div class="t" style="left:231px;top:844.69px;">io</div>
<svg style="left:402px;top:845px" width="6" height="8" viewBox="0 0 6 8"><path d="M1 1 L5 4 L1 7 Z" fill="#9a9a9a"/></svg>
<div class="t" style="left:231px;top:859.69px;">math</div>
<svg style="left:402px;top:860px" width="6" height="8" viewBox="0 0 6 8"><path d="M1 1 L5 4 L1 7 Z" fill="#9a9a9a"/></svg>
<div class="t" style="left:231px;top:874.69px;">matrix</div>
<svg style="left:402px;top:875px" width="6" height="8" viewBox="0 0 6 8"><path d="M1 1 L5 4 L1 7 Z" fill="#9a9a9a"/></svg>
<div class="t" style="left:231px;top:889.69px;">os</div>
<svg style="left:402px;top:890px" width="6" height="8" viewBox="0 0 6 8"><path d="M1 1 L5 4 L1 7 Z" fill="#9a9a9a"/></svg>
<div class="t" style="left:231px;top:904.69px;">string</div>
<svg style="left:402px;top:905px" width="6" height="8" viewBox="0 0 6 8"><path d="M1 1 L5 4 L1 7 Z" fill="#9a9a9a"/></svg>
<div class="b" style="left:412px;top:841px;width:15px;height:70px;background:#f0f0f0;"></div>
<div class="b" style="left:413px;top:858px;width:13px;height:16px;background:#cdcdcd;"></div>
<div class="t" style="left:431px;top:844.69px;">matrix.islt</div>
<div class="t" style="left:431px;top:859.69px;">matrix.isnull</div>
<div class="t" style="left:431px;top:874.69px;">matrix.new</div>
<div class="t" style="left:431px;top:889.69px;">matrix.random</div>
<div class="t" style="left:431px;top:904.69px;">matrix.rotation</div>
<div class="b" style="left:562px;top:841px;width:15px;height:70px;background:#f0f0f0;"></div>
<div class="b" style="left:563px;top:858px;width:13px;height:16px;background:#cdcdcd;"></div>
<svg style="left:412px;top:841px" width="15" height="70" viewBox="0 0 15 70"><path d="M3.5 9 L7.5 5 L11.5 9 M3.5 39 L7.5 43 L11.5 39 M6 53 V63 M9 53 V63" fill="none" stroke="#606060" stroke-width="1.3"/></svg>
<svg style="left:562px;top:841px" width="15" height="70" viewBox="0 0 15 70"><path d="M3.5 9 L7.5 5 L11.5 9 M3.5 39 L7.5 43 L11.5 39 M6 53 V63 M9 53 V63" fill="none" stroke="#606060" stroke-width="1.3"/></svg>
<div class="b" style="left:227px;top:911px;width:480px;height:3px;background:#f0f0f0;"></div>
<div class="b" style="left:227px;top:911px;width:480px;height:1px;background:#828790;"></div>
<div class="b" style="left:227px;top:914px;width:480px;height:19px;background:#fff;border:1px solid #828790;"></div>
<div class="t" style="left:234px;top:941.69px;">Apply</div>
<div class="b" style="left:227px;top:957px;width:480px;height:1px;background:#acacac;"></div>
<div class="b" style="left:228px;top:957px;width:116px;height:19px;background:linear-gradient(#f0f0f0,#e5e5e5);border:1px solid #acacac;"></div>
<div class="t" style="left:240px;top:961.69px;">Colormap Field E...</div>
<div class="b" style="left:343px;top:957px;width:105px;height:19px;background:linear-gradient(#f0f0f0,#e5e5e5);border:1px solid #acacac;"></div>
<div class="t" style="left:357px;top:961.69px;">Vector Field E...</div>
<div class="b" style="left:447px;top:957px;width:100px;height:19px;background:linear-gradient(#f0f0f0,#e5e5e5);border:1px solid #acacac;"></div>
<div class="t" style="left:461px;top:961.69px;">Script Field E...</div>
<div class="b" style="left:546px;top:957px;width:161px;height:21px;background:#fff;border:1px solid #acacac;border-top:none;"></div>
<div class="t" style="left:559px;top:962.69px;">Scalar Field Editor: Scalar ...</div>
<div class="b" style="left:711px;top:691px;width:329px;height:19px;background:#dadada;border:1px solid #c6c6c6;"></div>
<div class="t" style="left:715px;top:696.69px;letter-spacing:-0.29px;">RVOs Manager: TEST17_WithVariable_Bezier6_LUA_Print2</div>
<svg style="left:1011px;top:696px" width="9" height="9" viewBox="0 0 9 9"><rect x="3.5" y="0.5" width="5" height="4" fill="none" stroke="#000" stroke-width="1.2"/><rect x="0.5" y="3.5" width="5" height="5" fill="#dadada" stroke="#000" stroke-width="1.2"/></svg>
<svg style="left:1027px;top:696px" width="9" height="9" viewBox="0 0 9 9"><path d="M0.8 0.8 L8.2 8.2 M8.2 0.8 L0.8 8.2" stroke="#000" stroke-width="1.4"/></svg>
<div class="b" style="left:712px;top:731px;width:326px;height:247px;background:#fff;border:1px solid #acacac;"></div>
<div class="b" style="left:820px;top:714px;width:44px;height:18px;background:linear-gradient(#f0f0f0,#e5e5e5);border:1px solid #acacac;"></div>
<div class="t" style="left:831px;top:718.69px;">Alias</div>
<div class="b" style="left:863px;top:714px;width:34px;height:18px;background:linear-gradient(#f0f0f0,#e5e5e5);border:1px solid #acacac;"></div>
<div class="t" style="left:876px;top:718.69px;">All</div>
<div class="b" style="left:712px;top:711px;width:109px;height:21px;background:#fff;border:1px solid #acacac;border-bottom:none;"></div>
<div class="t" style="left:723px;top:717.69px;">Active Scene: [1]</div>
<div class="t" style="left:723px;top:742.69px;">Select</div>
<div class="t" style="left:765px;top:742.69px;">Show/Hide</div>
<div class="t" style="left:829px;top:742.69px;">Delete</div>
<div class="t" style="left:873px;top:742.69px;color:#9a9a9a;">Delete All</div>
<div class="t" style="left:931px;top:742.69px;">Rename</div>
<div class="b" style="left:716px;top:759px;width:317px;height:183px;background:#fff;border:1px solid #828790;"></div>
<div class="b" style="left:717px;top:781px;width:315px;height:1px;background:#e5eef8;"></div>
<div class="b" style="left:796px;top:760px;width:1px;height:22px;background:#e5eef8;"></div>
<div class="b" style="left:896px;top:760px;width:1px;height:22px;background:#e5eef8;"></div>
<div class="b" style="left:996px;top:760px;width:1px;height:22px;background:#e5eef8;"></div>
<div class="t" style="left:721px;top:766.69px;">ID</div>
<div class="t" style="left:801px;top:766.69px;">Alias</div>
<div class="t" style="left:901px;top:766.69px;">AVO:[ID]</div>
<div class="t" style="left:1001px;top:766.69px;">ROI</div>
<svg style="left:752px;top:761px" width="9" height="5" viewBox="0 0 9 5"><path d="M0 0 H9 L4.5 4 Z" fill="#5ea8e8"/></svg>
<div class="b" style="left:717px;top:802px;width:315px;height:19px;background:#f0f0f0;"></div>
<div class="b" style="left:717px;top:801px;width:315px;height:1px;background:#e2e2e2;"></div>
<div class="b" style="left:717px;top:820px;width:315px;height:1px;background:#e2e2e2;"></div>
<div class="t" style="left:721px;top:787.69px;">RVO_10</div>
<div class="t" style="left:901px;top:787.69px;">Arrows:[4]</div>
<div class="t" style="left:1001px;top:787.69px;">Box</div>
<div class="t" style="left:721px;top:806.69px;">RVO_8</div>
<div class="t" style="left:901px;top:806.69px;">Arrows:[16]</div>
<div class="t" style="left:1001px;top:806.69px;">Curve</div>
<div class="t" style="left:721px;top:825.69px;">RVO_5</div>
<div class="t" style="left:901px;top:825.69px;">CustomObject:[1]</div>
<div class="t" style="left:1001px;top:825.69px;">None</div>
<div class="b" style="left:717px;top:925px;width:315px;height:16px;background:#f0f0f0;"></div>
<div class="b" style="left:734px;top:926px;width:134px;height:14px;background:#cdcdcd;"></div>
<svg style="left:719px;top:926px" width="12" height="14" viewBox="0 0 12 14"><path d="M8 3 L4 7 L8 11" fill="none" stroke="#606060" stroke-width="1.3"/></svg>
<svg style="left:1018px;top:926px" width="12" height="14" viewBox="0 0 12 14"><path d="M4 3 L8 7 L4 11" fill="none" stroke="#606060" stroke-width="1.3"/></svg>
<div class="t" style="left:723px;top:954.69px;">Display Data</div>
<div class="b" style="left:934px;top:981px;width:1px;height:21px;background:#d0d0d0;"></div>
<div class="b" style="left:1021px;top:981px;width:1px;height:21px;background:#d0d0d0;"></div>
<div class="t" style="left:938px;top:986.69px;">Press F1 for help</div>
<div class="b" style="left:1037px;top:993px;width:2px;height:2px;background:#b8b8b8;"></div>
<div class="b" style="left:1033px;top:997px;width:2px;height:2px;background:#b8b8b8;"></div>
<div class="b" style="left:1037px;top:997px;width:2px;height:2px;background:#b8b8b8;"></div>
<div class="b" style="left:1029px;top:1001px;width:2px;height:2px;background:#b8b8b8;"></div>
<div class="b" style="left:1033px;top:1001px;width:2px;height:2px;background:#b8b8b8;"></div>
<div class="b" style="left:1037px;top:1001px;width:2px;height:2px;background:#b8b8b8;"></div>
<svg style="left:323px;top:102px" width="424" height="509" viewBox="0 0 424 509"><rect x="0" y="0" width="424" height="509" fill="#000"/><defs><linearGradient id="tg" gradientUnits="userSpaceOnUse" x1="0" y1="0" x2="0" y2="509"><stop offset="0.010" stop-color="#c2e8bd"/><stop offset="0.094" stop-color="#b9e1b4"/><stop offset="0.212" stop-color="#b2dbad"/><stop offset="0.389" stop-color="#a9d6a4"/><stop offset="0.507" stop-color="#9ccd98"/><stop offset="0.605" stop-color="#86bd83"/><stop offset="0.703" stop-color="#76ad73"/><stop offset="0.821" stop-color="#649c62"/><stop offset="1.000" stop-color="#548a52"/></linearGradient><linearGradient id="sd" x1="0" y1="0" x2="1" y2="0"><stop offset="0" stop-color="#000" stop-opacity="0"/><stop offset="0.7" stop-color="#000" stop-opacity="0.4"/><stop offset="1" stop-color="#000" stop-opacity="0"/></linearGradient><linearGradient id="sl" x1="0" y1="0" x2="1" y2="0"><stop offset="0" stop-color="#fff" stop-opacity="0"/><stop offset="0.3" stop-color="#eaffea" stop-opacity="0.45"/><stop offset="1" stop-color="#fff" stop-opacity="0"/></linearGradient><filter id="bl" x="-10%" y="-10%" width="120%" height="120%"><feGaussianBlur stdDeviation="1.2"/></filter><clipPath id="tc"><polygon points="0.0,66.6 97.0,47.2 157.0,35.2 217.0,28.5 317.0,17.3 424.0,5.7 424.0,509.0 103.0,509.0 0.0,358.0"/></clipPath></defs><polygon points="0.0,66.6 97.0,47.2 157.0,35.2 217.0,28.5 317.0,17.3 424.0,5.7 424.0,509.0 103.0,509.0 0.0,358.0" fill="url(#tg)"/><g clip-path="url(#tc)"><polygon points="317.0,17.3 424.0,5.7 424.0,14.0 317.0,24.0" fill="#7a9a76" opacity="0.25"/><polygon points="0.0,148.0 22.0,143.0 27.0,368.0 0.0,368.0" fill="#000" opacity="0.05" filter="url(#bl)"/><g filter="url(#bl)"><polygon points="0.0,79.7 14.3,79.8 13.0,547.9 5.8,553.7 -1.3,545.0" fill="url(#sd)" opacity="0.33"/><polygon points="11.7,64.8 30.8,68.7 25.7,272.2 16.1,276.7 6.6,270.0" fill="url(#sl)" opacity="0.32"/><polygon points="30.4,75.1 47.6,73.1 41.8,221.3 33.2,227.2 24.6,218.3" fill="url(#sd)" opacity="0.17"/><polygon points="39.3,68.6 53.8,68.3 53.0,502.5 45.7,513.1 38.5,497.1" fill="url(#sl)" opacity="0.27"/><polygon points="48.5,81.8 70.5,78.3 71.6,514.7 60.6,521.6 49.6,511.2" fill="url(#sd)" opacity="0.22"/><polygon points="67.9,73.9 81.6,77.2 85.1,316.2 78.3,322.3 71.5,313.2" fill="url(#sl)" opacity="0.14"/><polygon points="77.9,59.7 99.7,58.4 100.0,170.4 89.1,175.3 78.2,168.0" fill="url(#sl)" opacity="0.21"/><polygon points="99.3,47.9 117.9,48.4 112.9,231.4 103.6,237.2 94.3,228.5" fill="url(#sd)" opacity="0.39"/><polygon points="112.8,61.8 123.4,60.0 123.9,196.8 118.5,202.9 113.2,193.8" fill="url(#sd)" opacity="0.28"/><polygon points="123.3,48.2 142.5,45.0 138.6,499.8 129.0,510.2 119.4,494.6" fill="url(#sd)" opacity="0.41"/><polygon points="142.4,43.1 153.4,43.8 150.7,447.6 145.2,452.5 139.7,445.2" fill="url(#sd)" opacity="0.17"/><polygon points="149.2,44.8 165.7,42.3 169.2,315.1 161.0,327.8 152.8,308.8" fill="url(#sd)" opacity="0.32"/><polygon points="158.7,55.1 179.4,58.7 175.3,239.9 165.0,245.8 154.6,236.9" fill="url(#sl)" opacity="0.39"/><polygon points="178.2,42.2 194.7,40.3 189.0,165.8 180.8,176.9 172.6,160.3" fill="url(#sl)" opacity="0.20"/><polygon points="193.2,37.1 209.6,39.9 210.8,190.8 202.6,200.4 194.4,186.0" fill="url(#sd)" opacity="0.22"/><polygon points="206.4,52.5 218.3,49.9 212.5,218.1 206.5,222.7 200.6,215.8" fill="url(#sd)" opacity="0.28"/><polygon points="214.6,30.3 230.6,31.0 233.5,262.4 225.5,273.3 217.5,257.0" fill="url(#sl)" opacity="0.31"/><polygon points="223.7,26.2 232.2,26.1 233.2,488.5 228.9,498.9 224.7,483.3" fill="url(#sl)" opacity="0.14"/><polygon points="231.0,51.9 243.5,53.5 243.0,163.5 236.7,174.9 230.5,157.8" fill="url(#sl)" opacity="0.38"/><polygon points="242.2,33.2 263.0,36.1 266.0,400.9 255.6,412.8 245.2,395.0" fill="url(#sl)" opacity="0.25"/><polygon points="258.6,32.2 275.3,35.2 275.4,356.9 267.0,370.8 258.7,349.9" fill="url(#sd)" opacity="0.34"/><polygon points="273.1,40.1 286.5,36.3 284.9,364.1 278.2,375.6 271.5,358.3" fill="url(#sl)" opacity="0.16"/><polygon points="283.8,25.2 298.5,21.3 297.5,398.5 290.2,405.1 282.8,395.3" fill="url(#sl)" opacity="0.38"/><polygon points="293.4,23.4 310.9,22.0 314.0,174.6 305.2,187.6 296.5,168.2" fill="url(#sl)" opacity="0.25"/><polygon points="308.0,27.9 318.8,26.5 321.9,446.5 316.5,456.3 311.1,441.5" fill="url(#sl)" opacity="0.24"/><polygon points="314.1,38.2 329.0,37.8 330.2,474.7 322.7,480.4 315.2,471.8" fill="url(#sl)" opacity="0.21"/><polygon points="323.6,25.8 334.6,25.4 333.6,368.6 328.1,382.4 322.6,361.7" fill="url(#sd)" opacity="0.40"/><polygon points="329.5,37.5 338.0,33.7 339.1,134.9 334.8,146.8 330.6,129.0" fill="url(#sl)" opacity="0.22"/><polygon points="334.3,14.1 348.7,13.7 345.1,442.5 337.9,452.8 330.7,437.4" fill="url(#sd)" opacity="0.16"/><polygon points="346.0,34.0 363.2,30.0 364.1,516.5 355.5,522.3 346.9,513.6" fill="url(#sd)" opacity="0.29"/><polygon points="358.7,15.6 376.7,17.7 374.1,210.0 365.1,220.2 356.1,204.9" fill="url(#sl)" opacity="0.28"/><polygon points="371.2,33.9 390.3,34.9 393.6,150.5 384.1,159.1 374.5,146.3" fill="url(#sl)" opacity="0.17"/><polygon points="389.4,22.8 402.7,20.4 404.7,472.1 398.1,482.6 391.4,466.9" fill="url(#sl)" opacity="0.26"/><polygon points="400.9,23.5 420.3,23.8 416.5,404.9 406.7,418.7 397.0,398.1" fill="url(#sl)" opacity="0.40"/><polygon points="418.3,28.9 430.8,31.0 428.3,468.3 422.0,477.8 415.8,463.6" fill="url(#sd)" opacity="0.28"/></g><polygon points="57.0,57.2 66.1,55.8 64.1,116.6 56.0,120.6" fill="url(#sd)" opacity="0.41"/><polygon points="78.6,52.9 91.2,51.0 89.2,104.2 77.6,108.2" fill="url(#sd)" opacity="0.30"/><polygon points="107.0,47.2 116.3,45.8 114.3,107.9 106.0,111.9" fill="url(#sd)" opacity="0.60"/><polygon points="126.9,43.2 141.4,41.0 139.4,113.5 125.9,117.5" fill="url(#sd)" opacity="0.49"/><polygon points="147.5,39.1 160.2,37.2 158.2,122.9 146.5,126.9" fill="url(#sd)" opacity="0.46"/><polygon points="174.6,35.2 187.6,33.3 185.6,102.2 173.6,106.2" fill="url(#sd)" opacity="0.53"/><polygon points="199.9,32.4 209.6,31.0 207.6,100.9 198.9,104.9" fill="url(#sd)" opacity="0.56"/><polygon points="220.2,30.1 233.7,28.1 231.7,121.7 219.2,125.7" fill="url(#sd)" opacity="0.51"/><polygon points="250.6,26.7 261.2,25.2 259.2,119.2 249.6,123.2" fill="url(#sd)" opacity="0.43"/><polygon points="278.3,23.6 293.2,21.4 291.2,101.0 277.3,105.0" fill="url(#sd)" opacity="0.34"/><polygon points="300.2,21.2 315.9,18.8 313.9,109.0 299.2,113.0" fill="url(#sd)" opacity="0.49"/><polygon points="324.1,18.5 335.7,16.8 333.7,107.3 323.1,111.3" fill="url(#sd)" opacity="0.41"/><polygon points="347.9,16.0 360.1,14.1 358.1,119.8 346.9,123.8" fill="url(#sd)" opacity="0.50"/><polygon points="67.8,412.5 73.2,358.9 81.5,420.6 74.6,433.9" fill="#1e3a1c" opacity="0.20"/><polygon points="213.1,355.1 217.6,319.5 221.1,360.4 217.1,369.3" fill="#1e3a1c" opacity="0.11"/><polygon points="328.2,270.2 340.4,234.8 336.7,275.6 332.4,284.4" fill="#1e3a1c" opacity="0.21"/><polygon points="252.5,208.6 256.9,168.8 266.5,214.6 259.5,224.5" fill="#1e3a1c" opacity="0.14"/><polygon points="60.9,452.2 71.9,421.6 80.0,456.8 70.5,464.5" fill="#1e3a1c" opacity="0.14"/><polygon points="196.5,256.1 204.5,229.5 214.9,260.1 205.7,266.8" fill="#1e3a1c" opacity="0.13"/><polygon points="395.6,476.0 407.2,417.1 412.8,484.9 404.2,499.6" fill="#1e3a1c" opacity="0.11"/><polygon points="192.8,455.2 208.9,421.2 211.8,460.3 202.3,468.8" fill="#c8f5c2" opacity="0.15"/><polygon points="185.7,318.0 188.4,248.2 198.4,328.4 192.0,345.9" fill="#c8f5c2" opacity="0.21"/><polygon points="406.8,352.3 419.0,305.1 421.4,359.3 414.1,371.1" fill="#c8f5c2" opacity="0.19"/><polygon points="230.1,391.6 235.3,358.5 240.2,396.6 235.2,404.9" fill="#1e3a1c" opacity="0.14"/><polygon points="247.5,293.4 257.6,263.7 256.3,297.8 251.9,305.2" fill="#1e3a1c" opacity="0.14"/><polygon points="277.4,408.2 288.1,342.8 296.9,418.0 287.2,434.4" fill="#1e3a1c" opacity="0.22"/><polygon points="242.9,472.7 248.1,425.6 255.4,479.7 249.1,491.5" fill="#1e3a1c" opacity="0.12"/><polygon points="320.0,348.3 323.4,285.6 328.6,357.7 324.3,373.3" fill="#c8f5c2" opacity="0.16"/><polygon points="67.6,219.6 84.8,179.4 86.4,225.6 77.0,235.7" fill="#1e3a1c" opacity="0.16"/><polygon points="102.0,496.2 106.7,447.6 118.8,503.5 110.4,515.7" fill="#c8f5c2" opacity="0.23"/><polygon points="326.5,472.1 336.0,420.1 339.6,479.9 333.0,493.0" fill="#1e3a1c" opacity="0.14"/><polygon points="222.0,283.8 230.3,224.3 230.1,292.8 226.1,307.7" fill="#1e3a1c" opacity="0.10"/><polygon points="242.9,398.2 249.5,334.9 257.9,407.7 250.4,423.6" fill="#c8f5c2" opacity="0.24"/><polygon points="373.7,239.5 374.6,210.3 382.9,243.9 378.3,251.2" fill="#c8f5c2" opacity="0.12"/><polygon points="355.4,401.8 362.5,371.1 369.8,406.4 362.6,414.1" fill="#c8f5c2" opacity="0.13"/><polygon points="66.8,255.2 77.7,213.2 83.4,261.5 75.1,272.0" fill="#c8f5c2" opacity="0.21"/><polygon points="361.2,438.8 366.9,378.2 369.3,447.9 365.3,463.0" fill="#c8f5c2" opacity="0.21"/><polygon points="70.7,419.3 78.6,382.9 87.1,424.7 78.9,433.8" fill="#c8f5c2" opacity="0.16"/><polygon points="126.8,478.1 136.5,439.9 140.9,483.9 133.9,493.4" fill="#1e3a1c" opacity="0.11"/><polygon points="243.7,356.1 253.2,298.0 263.3,364.8 253.5,379.3" fill="#1e3a1c" opacity="0.16"/><polygon points="227.0,217.8 237.1,156.2 246.7,227.1 236.9,242.5" fill="#c8f5c2" opacity="0.25"/><polygon points="42.2,221.7 56.2,193.4 60.0,225.9 51.1,233.0" fill="#c8f5c2" opacity="0.19"/><polygon points="182.1,358.9 187.2,316.4 194.9,365.3 188.5,375.9" fill="#c8f5c2" opacity="0.17"/><polygon points="100.0,417.0 109.8,355.2 116.6,426.3 108.3,441.7" fill="#c8f5c2" opacity="0.16"/><polygon points="202.1,394.5 208.3,326.2 211.1,404.7 206.6,421.8" fill="#c8f5c2" opacity="0.21"/><polygon points="363.5,440.4 376.1,387.2 380.7,448.4 372.1,461.7" fill="#1e3a1c" opacity="0.18"/><polygon points="280.7,274.3 290.4,208.0 293.3,284.2 287.0,300.8" fill="#1e3a1c" opacity="0.22"/><polygon points="406.7,200.0 413.3,160.9 418.4,205.8 412.6,215.6" fill="#c8f5c2" opacity="0.18"/><polygon points="31.1,292.1 41.2,224.7 48.1,302.2 39.6,319.1" fill="#c8f5c2" opacity="0.24"/><polygon points="287.8,262.0 299.8,221.9 303.5,268.0 295.6,278.0" fill="#c8f5c2" opacity="0.24"/><polygon points="134.1,277.1 143.2,214.0 144.0,286.5 139.1,302.3" fill="#c8f5c2" opacity="0.19"/><polygon points="113.9,315.9 122.0,248.5 127.5,326.0 120.7,342.8" fill="#1e3a1c" opacity="0.13"/><polygon points="73.4,317.6 86.0,280.4 83.6,323.2 78.5,332.5" fill="#c8f5c2" opacity="0.22"/><polygon points="383.2,417.1 386.7,391.3 397.3,421.0 390.2,427.5" fill="#1e3a1c" opacity="0.18"/><polygon points="100.9,200.4 105.2,150.9 110.1,207.8 105.5,220.2" fill="#c8f5c2" opacity="0.23"/><polygon points="149.8,240.0 161.1,179.3 167.7,249.1 158.7,264.2" fill="#c8f5c2" opacity="0.13"/><polygon points="163.4,369.6 178.3,334.5 181.0,374.9 172.2,383.7" fill="#1e3a1c" opacity="0.21"/><polygon points="308.9,434.1 319.0,400.7 317.6,439.2 313.2,447.5" fill="#1e3a1c" opacity="0.17"/><polygon points="194.5,446.8 200.4,406.6 205.8,452.9 200.2,462.9" fill="#c8f5c2" opacity="0.19"/><polygon points="364.9,220.1 376.1,192.0 379.0,224.3 372.0,231.3" fill="#c8f5c2" opacity="0.14"/><polygon points="23.0,209.6 34.9,162.3 39.2,216.6 31.1,228.5" fill="#c8f5c2" opacity="0.12"/><polygon points="380.5,365.5 393.4,322.1 396.8,372.0 388.7,382.8" fill="#1e3a1c" opacity="0.11"/><polygon points="340.1,264.5 348.6,237.6 352.3,268.5 346.2,275.2" fill="#1e3a1c" opacity="0.12"/><polygon points="288.8,351.6 303.6,319.3 307.1,356.4 297.9,364.5" fill="#1e3a1c" opacity="0.18"/><polygon points="88.9,439.9 103.0,374.2 103.3,449.7 96.1,466.1" fill="#1e3a1c" opacity="0.15"/><polygon points="389.1,489.3 393.4,428.6 397.2,498.4 393.2,513.6" fill="#1e3a1c" opacity="0.17"/><polygon points="307.2,399.2 319.3,366.9 326.4,404.0 316.8,412.1" fill="#1e3a1c" opacity="0.12"/><polygon points="407.8,370.6 422.8,310.7 424.6,379.5 416.2,394.5" fill="#c8f5c2" opacity="0.11"/><polygon points="164.4,253.4 173.6,204.1 182.2,260.8 173.3,273.2" fill="#c8f5c2" opacity="0.10"/><polygon points="172.4,378.5 178.9,352.3 188.4,382.4 180.4,389.0" fill="#c8f5c2" opacity="0.24"/><polygon points="216.7,476.4 220.3,428.2 226.2,483.6 221.4,495.6" fill="#c8f5c2" opacity="0.20"/><polygon points="317.5,431.7 324.2,377.4 328.6,439.8 323.1,453.4" fill="#c8f5c2" opacity="0.17"/><polygon points="111.6,365.3 121.7,319.6 120.1,372.1 115.8,383.5" fill="#1e3a1c" opacity="0.20"/><polygon points="302.7,425.3 309.7,355.6 315.2,435.7 309.0,453.2" fill="#c8f5c2" opacity="0.20"/><polygon points="240.2,377.3 244.1,307.4 250.6,387.8 245.4,405.2" fill="#1e3a1c" opacity="0.20"/><polygon points="196.0,215.1 207.0,173.4 213.9,221.3 205.0,231.8" fill="#c8f5c2" opacity="0.16"/><polygon points="255.5,384.1 269.7,327.9 273.9,392.6 264.7,406.6" fill="#c8f5c2" opacity="0.14"/><polygon points="322.4,444.6 333.7,377.8 332.8,454.6 327.6,471.3" fill="#1e3a1c" opacity="0.11"/><polygon points="124.3,395.1 132.4,363.5 142.3,399.8 133.3,407.7" fill="#1e3a1c" opacity="0.14"/><polygon points="397.0,10.0 403.0,10.0 395.0,238.0 389.0,238.0" fill="url(#sd)" opacity="0.7" filter="url(#bl)"/><polygon points="413.0,12.0 418.0,12.0 420.0,233.0 415.0,233.0" fill="url(#sd)" opacity="0.6" filter="url(#bl)"/><polygon points="381.0,8.0 385.0,8.0 381.0,98.0 377.0,98.0" fill="url(#sd)" opacity="0.4" filter="url(#bl)"/><polygon points="389.0,198.0 401.0,198.0 389.0,398.0 377.0,398.0" fill="url(#sd)" opacity="0.8" filter="url(#bl)"/><polygon points="419.0,8.0 422.0,8.0 425.0,198.0 422.0,198.0" fill="url(#sd)" opacity="0.5" filter="url(#bl)"/><polygon points="367.0,228.0 424.0,198.0 424.0,509.0 357.0,509.0" fill="#1a3a18" opacity="0.12" filter="url(#bl)"/><polygon points="0.0,156.0 97.0,130.0 197.0,110.0 277.0,104.0 327.0,118.0 327.0,126.0 277.0,114.0 197.0,120.0 97.0,142.0 0.0,170.0" fill="#dcffd6" opacity="0.45" filter="url(#bl)"/><polygon points="0.0,172.0 97.0,144.0 197.0,122.0 277.0,116.0 327.0,128.0 327.0,138.0 277.0,128.0 197.0,134.0 97.0,156.0 0.0,188.0" fill="#000" opacity="0.07" filter="url(#bl)"/><polygon points="0.0,258.0 57.0,238.0 87.0,236.0 77.0,248.0 7.0,273.0" fill="#000" opacity="0.10" filter="url(#bl)"/><polygon points="17.0,398.0 57.0,380.0 97.0,368.0 147.0,348.0 197.0,328.0 202.0,336.0 149.0,360.0 102.0,378.0 62.0,388.0 22.0,410.0" fill="#000" opacity="0.07" filter="url(#bl)"/><polygon points="57.0,453.0 107.0,428.0 147.0,418.0 197.0,393.0 237.0,378.0 242.0,388.0 197.0,406.0 152.0,428.0 107.0,443.0 67.0,468.0" fill="#000" opacity="0.09" filter="url(#bl)"/><polygon points="97.0,498.0 147.0,483.0 197.0,458.0 257.0,446.0 317.0,428.0 377.0,418.0 424.0,403.0 424.0,418.0 377.0,433.0 317.0,446.0 257.0,460.0 202.0,473.0 147.0,498.0 107.0,513.0" fill="#000" opacity="0.08" filter="url(#bl)"/><polygon points="317.0,498.0 377.0,483.0 424.0,468.0 424.0,483.0 377.0,498.0 327.0,513.0" fill="#000" opacity="0.1" filter="url(#bl)"/></g><polygon points="0.0,388.0 4.0,392.0 7.0,402.0 0.0,410.0" fill="#fff"/><rect x="288" y="40" width="17" height="6" rx="2" fill="#fff"/><rect x="294" y="36" width="7" height="12" fill="#fff"/><rect x="14" y="136" width="10" height="8" fill="#fff"/><ellipse cx="296.2" cy="433.0" rx="3.1" ry="2.35" fill="#f32b2b"/><ellipse cx="294.5" cy="456.2" rx="3.1" ry="2.35" fill="#f32b2b"/><ellipse cx="293.2" cy="449.8" rx="3.1" ry="2.35" fill="#f32b2b"/><ellipse cx="292.0" cy="443.2" rx="3.1" ry="2.35" fill="#f32b2b"/><ellipse cx="290.8" cy="436.8" rx="3.1" ry="2.35" fill="#f32b2b"/><ellipse cx="289.5" cy="430.2" rx="3.1" ry="2.35" fill="#f32b2b"/><ellipse cx="288.2" cy="423.8" rx="3.1" ry="2.35" fill="#f32b2b"/><ellipse cx="287.8" cy="453.5" rx="3.1" ry="2.35" fill="#f32b2b"/><ellipse cx="286.5" cy="447.0" rx="3.1" ry="2.35" fill="#f32b2b"/><ellipse cx="285.2" cy="440.5" rx="3.1" ry="2.35" fill="#f32b2b"/><ellipse cx="284.0" cy="434.0" rx="3.1" ry="2.35" fill="#f32b2b"/><ellipse cx="282.8" cy="427.5" rx="3.1" ry="2.35" fill="#f32b2b"/><ellipse cx="281.0" cy="450.8" rx="3.1" ry="2.35" fill="#f32b2b"/><ellipse cx="279.8" cy="444.2" rx="3.1" ry="2.35" fill="#f32b2b"/><ellipse cx="278.5" cy="437.8" rx="3.1" ry="2.35" fill="#f32b2b"/><ellipse cx="277.2" cy="431.2" rx="3.1" ry="2.35" fill="#f32b2b"/><ellipse cx="274.2" cy="448.0" rx="3.1" ry="2.35" fill="#f32b2b"/><ellipse cx="273.0" cy="441.5" rx="3.1" ry="2.35" fill="#f32b2b"/><ellipse cx="326.9" cy="448.0" rx="3.1" ry="2.35" fill="#f32b2b"/><ellipse cx="325.5" cy="440.7" rx="3.1" ry="2.35" fill="#f32b2b"/><ellipse cx="322.2" cy="459.5" rx="3.1" ry="2.35" fill="#f32b2b"/><ellipse cx="320.8" cy="452.2" rx="3.1" ry="2.35" fill="#f32b2b"/><ellipse cx="319.4" cy="444.9" rx="3.1" ry="2.35" fill="#f32b2b"/><ellipse cx="318.0" cy="437.6" rx="3.1" ry="2.35" fill="#f32b2b"/><ellipse cx="316.6" cy="430.4" rx="3.1" ry="2.35" fill="#f32b2b"/><ellipse cx="316.0" cy="463.7" rx="3.1" ry="2.35" fill="#f32b2b"/><ellipse cx="314.6" cy="456.4" rx="3.1" ry="2.35" fill="#f32b2b"/><ellipse cx="313.2" cy="449.1" rx="3.1" ry="2.35" fill="#f32b2b"/><ellipse cx="311.8" cy="441.8" rx="3.1" ry="2.35" fill="#f32b2b"/><ellipse cx="310.4" cy="434.6" rx="3.1" ry="2.35" fill="#f32b2b"/><ellipse cx="309.8" cy="467.9" rx="3.1" ry="2.35" fill="#f32b2b"/><ellipse cx="309.0" cy="427.3" rx="3.1" ry="2.35" fill="#f32b2b"/><ellipse cx="308.4" cy="460.6" rx="3.1" ry="2.35" fill="#f32b2b"/><ellipse cx="307.0" cy="453.3" rx="3.1" ry="2.35" fill="#f32b2b"/><ellipse cx="305.6" cy="446.0" rx="3.1" ry="2.35" fill="#f32b2b"/><ellipse cx="304.2" cy="438.8" rx="3.1" ry="2.35" fill="#f32b2b"/><ellipse cx="303.7" cy="472.1" rx="3.1" ry="2.35" fill="#f32b2b"/><ellipse cx="302.8" cy="431.5" rx="3.1" ry="2.35" fill="#f32b2b"/><ellipse cx="302.3" cy="464.8" rx="3.1" ry="2.35" fill="#f32b2b"/><ellipse cx="301.4" cy="424.2" rx="3.1" ry="2.35" fill="#f32b2b"/><ellipse cx="300.9" cy="457.5" rx="3.1" ry="2.35" fill="#f32b2b"/><ellipse cx="300.0" cy="416.9" rx="3.1" ry="2.35" fill="#f32b2b"/><ellipse cx="299.5" cy="450.2" rx="3.1" ry="2.35" fill="#f32b2b"/><ellipse cx="298.1" cy="443.0" rx="3.1" ry="2.35" fill="#f32b2b"/><ellipse cx="296.7" cy="435.7" rx="3.1" ry="2.35" fill="#f32b2b"/><ellipse cx="296.1" cy="469.0" rx="3.1" ry="2.35" fill="#f32b2b"/><ellipse cx="295.3" cy="428.4" rx="3.1" ry="2.35" fill="#f32b2b"/><ellipse cx="294.7" cy="461.7" rx="3.1" ry="2.35" fill="#f32b2b"/><ellipse cx="293.9" cy="421.1" rx="3.1" ry="2.35" fill="#f32b2b"/><ellipse cx="293.3" cy="454.4" rx="3.1" ry="2.35" fill="#f32b2b"/><ellipse cx="292.5" cy="413.8" rx="3.1" ry="2.35" fill="#f32b2b"/><ellipse cx="291.9" cy="447.2" rx="3.1" ry="2.35" fill="#f32b2b"/><ellipse cx="290.5" cy="439.9" rx="3.1" ry="2.35" fill="#f32b2b"/><ellipse cx="289.1" cy="432.6" rx="3.1" ry="2.35" fill="#f32b2b"/><ellipse cx="288.6" cy="465.9" rx="3.1" ry="2.35" fill="#f32b2b"/><ellipse cx="287.7" cy="425.3" rx="3.1" ry="2.35" fill="#f32b2b"/><ellipse cx="287.2" cy="458.6" rx="3.1" ry="2.35" fill="#f32b2b"/><ellipse cx="286.3" cy="418.0" rx="3.1" ry="2.35" fill="#f32b2b"/><ellipse cx="285.8" cy="451.4" rx="3.1" ry="2.35" fill="#f32b2b"/><ellipse cx="284.9" cy="410.8" rx="3.1" ry="2.35" fill="#f32b2b"/><ellipse cx="284.4" cy="444.1" rx="3.1" ry="2.35" fill="#f32b2b"/><ellipse cx="283.0" cy="436.8" rx="3.1" ry="2.35" fill="#f32b2b"/><ellipse cx="281.6" cy="429.5" rx="3.1" ry="2.35" fill="#f32b2b"/><ellipse cx="281.0" cy="462.8" rx="3.1" ry="2.35" fill="#f32b2b"/><ellipse cx="280.2" cy="422.2" rx="3.1" ry="2.35" fill="#f32b2b"/><ellipse cx="279.6" cy="455.6" rx="3.1" ry="2.35" fill="#f32b2b"/><ellipse cx="278.8" cy="415.0" rx="3.1" ry="2.35" fill="#f32b2b"/><ellipse cx="278.2" cy="448.3" rx="3.1" ry="2.35" fill="#f32b2b"/><ellipse cx="276.8" cy="441.0" rx="3.1" ry="2.35" fill="#f32b2b"/><ellipse cx="275.4" cy="433.7" rx="3.1" ry="2.35" fill="#f32b2b"/><ellipse cx="274.0" cy="426.4" rx="3.1" ry="2.35" fill="#f32b2b"/><ellipse cx="273.4" cy="459.8" rx="3.1" ry="2.35" fill="#f32b2b"/><ellipse cx="272.6" cy="419.2" rx="3.1" ry="2.35" fill="#f32b2b"/><ellipse cx="272.0" cy="452.5" rx="3.1" ry="2.35" fill="#f32b2b"/><ellipse cx="270.6" cy="445.2" rx="3.1" ry="2.35" fill="#f32b2b"/><ellipse cx="269.2" cy="437.9" rx="3.1" ry="2.35" fill="#f32b2b"/><ellipse cx="267.8" cy="430.6" rx="3.1" ry="2.35" fill="#f32b2b"/><ellipse cx="266.4" cy="423.4" rx="3.1" ry="2.35" fill="#f32b2b"/><ellipse cx="265.9" cy="456.7" rx="3.1" ry="2.35" fill="#f32b2b"/><ellipse cx="264.5" cy="449.4" rx="3.1" ry="2.35" fill="#f32b2b"/><ellipse cx="263.1" cy="442.1" rx="3.1" ry="2.35" fill="#f32b2b"/><ellipse cx="261.7" cy="434.8" rx="3.1" ry="2.35" fill="#f32b2b"/><ellipse cx="260.3" cy="427.6" rx="3.1" ry="2.35" fill="#f32b2b"/><ellipse cx="258.3" cy="453.6" rx="3.1" ry="2.35" fill="#f32b2b"/><ellipse cx="256.9" cy="446.3" rx="3.1" ry="2.35" fill="#f32b2b"/><ellipse cx="255.5" cy="439.0" rx="3.1" ry="2.35" fill="#f32b2b"/><ellipse cx="254.1" cy="431.8" rx="3.1" ry="2.35" fill="#f32b2b"/><ellipse cx="250.8" cy="450.5" rx="3.1" ry="2.35" fill="#f32b2b"/><ellipse cx="249.4" cy="443.2" rx="3.1" ry="2.35" fill="#f32b2b"/><ellipse cx="248.0" cy="436.0" rx="3.1" ry="2.35" fill="#f32b2b"/><ellipse cx="243.2" cy="447.4" rx="3.1" ry="2.35" fill="#f32b2b"/><ellipse cx="360.7" cy="448.0" rx="3.1" ry="2.35" fill="#f32b2b"/><ellipse cx="353.9" cy="452.6" rx="3.1" ry="2.35" fill="#f32b2b"/><ellipse cx="352.3" cy="444.5" rx="3.1" ry="2.35" fill="#f32b2b"/><ellipse cx="350.8" cy="436.5" rx="3.1" ry="2.35" fill="#f32b2b"/><ellipse cx="347.0" cy="457.3" rx="3.1" ry="2.35" fill="#f32b2b"/><ellipse cx="345.5" cy="449.2" rx="3.1" ry="2.35" fill="#f32b2b"/><ellipse cx="343.9" cy="441.1" rx="3.1" ry="2.35" fill="#f32b2b"/><ellipse cx="342.4" cy="433.1" rx="3.1" ry="2.35" fill="#f32b2b"/><ellipse cx="340.8" cy="425.0" rx="3.1" ry="2.35" fill="#f32b2b"/><ellipse cx="340.2" cy="461.9" rx="3.1" ry="2.35" fill="#f32b2b"/><ellipse cx="338.7" cy="453.9" rx="3.1" ry="2.35" fill="#f32b2b"/><ellipse cx="337.1" cy="445.8" rx="3.1" ry="2.35" fill="#f32b2b"/><ellipse cx="335.6" cy="437.7" rx="3.1" ry="2.35" fill="#f32b2b"/><ellipse cx="334.0" cy="429.7" rx="3.1" ry="2.35" fill="#f32b2b"/><ellipse cx="333.4" cy="466.6" rx="3.1" ry="2.35" fill="#f32b2b"/><ellipse cx="332.5" cy="421.6" rx="3.1" ry="2.35" fill="#f32b2b"/><ellipse cx="331.8" cy="458.5" rx="3.1" ry="2.35" fill="#f32b2b"/><ellipse cx="330.3" cy="450.4" rx="3.1" ry="2.35" fill="#f32b2b"/><ellipse cx="328.7" cy="442.4" rx="3.1" ry="2.35" fill="#f32b2b"/><ellipse cx="327.2" cy="434.3" rx="3.1" ry="2.35" fill="#f32b2b"/><ellipse cx="326.6" cy="471.2" rx="3.1" ry="2.35" fill="#f32b2b"/><ellipse cx="325.6" cy="426.3" rx="3.1" ry="2.35" fill="#f32b2b"/><ellipse cx="325.0" cy="463.1" rx="3.1" ry="2.35" fill="#f32b2b"/><ellipse cx="324.1" cy="418.2" rx="3.1" ry="2.35" fill="#f32b2b"/><ellipse cx="323.5" cy="455.1" rx="3.1" ry="2.35" fill="#f32b2b"/><ellipse cx="322.5" cy="410.1" rx="3.1" ry="2.35" fill="#f32b2b"/><ellipse cx="321.9" cy="447.0" rx="3.1" ry="2.35" fill="#f32b2b"/><ellipse cx="320.4" cy="439.0" rx="3.1" ry="2.35" fill="#f32b2b"/><ellipse cx="319.8" cy="475.9" rx="3.1" ry="2.35" fill="#f32b2b"/><ellipse cx="318.8" cy="430.9" rx="3.1" ry="2.35" fill="#f32b2b"/><ellipse cx="318.2" cy="467.8" rx="3.1" ry="2.35" fill="#f32b2b"/><ellipse cx="317.3" cy="422.9" rx="3.1" ry="2.35" fill="#f32b2b"/><ellipse cx="316.6" cy="459.7" rx="3.1" ry="2.35" fill="#f32b2b"/><ellipse cx="315.7" cy="414.8" rx="3.1" ry="2.35" fill="#f32b2b"/><ellipse cx="315.1" cy="451.7" rx="3.1" ry="2.35" fill="#f32b2b"/><ellipse cx="314.2" cy="406.7" rx="3.1" ry="2.35" fill="#f32b2b"/><ellipse cx="313.5" cy="443.6" rx="3.1" ry="2.35" fill="#f32b2b"/><ellipse cx="312.9" cy="480.5" rx="3.1" ry="2.35" fill="#f32b2b"/><ellipse cx="312.0" cy="435.6" rx="3.1" ry="2.35" fill="#f32b2b"/><ellipse cx="311.4" cy="472.5" rx="3.1" ry="2.35" fill="#f32b2b"/><ellipse cx="310.5" cy="427.5" rx="3.1" ry="2.35" fill="#f32b2b"/><ellipse cx="309.8" cy="464.4" rx="3.1" ry="2.35" fill="#f32b2b"/><ellipse cx="308.9" cy="419.4" rx="3.1" ry="2.35" fill="#f32b2b"/><ellipse cx="308.3" cy="456.3" rx="3.1" ry="2.35" fill="#f32b2b"/><ellipse cx="307.4" cy="411.4" rx="3.1" ry="2.35" fill="#f32b2b"/><ellipse cx="306.7" cy="448.3" rx="3.1" ry="2.35" fill="#f32b2b"/><ellipse cx="306.1" cy="485.2" rx="3.1" ry="2.35" fill="#f32b2b"/><ellipse cx="305.8" cy="403.3" rx="3.1" ry="2.35" fill="#f32b2b"/><ellipse cx="305.2" cy="440.2" rx="3.1" ry="2.35" fill="#f32b2b"/><ellipse cx="304.6" cy="477.1" rx="3.1" ry="2.35" fill="#f32b2b"/><ellipse cx="303.6" cy="432.1" rx="3.1" ry="2.35" fill="#f32b2b"/><ellipse cx="303.0" cy="469.0" rx="3.1" ry="2.35" fill="#f32b2b"/><ellipse cx="302.1" cy="424.1" rx="3.1" ry="2.35" fill="#f32b2b"/><ellipse cx="301.5" cy="461.0" rx="3.1" ry="2.35" fill="#f32b2b"/><ellipse cx="300.5" cy="416.0" rx="3.1" ry="2.35" fill="#f32b2b"/><ellipse cx="299.9" cy="452.9" rx="3.1" ry="2.35" fill="#f32b2b"/><ellipse cx="299.0" cy="408.0" rx="3.1" ry="2.35" fill="#f32b2b"/><ellipse cx="298.4" cy="444.9" rx="3.1" ry="2.35" fill="#f32b2b"/><ellipse cx="297.7" cy="481.8" rx="3.1" ry="2.35" fill="#f32b2b"/><ellipse cx="297.4" cy="399.9" rx="3.1" ry="2.35" fill="#f32b2b"/><ellipse cx="296.8" cy="436.8" rx="3.1" ry="2.35" fill="#f32b2b"/><ellipse cx="296.2" cy="473.7" rx="3.1" ry="2.35" fill="#f32b2b"/><ellipse cx="295.3" cy="428.7" rx="3.1" ry="2.35" fill="#f32b2b"/><ellipse cx="294.6" cy="465.6" rx="3.1" ry="2.35" fill="#f32b2b"/><ellipse cx="293.7" cy="420.7" rx="3.1" ry="2.35" fill="#f32b2b"/><ellipse cx="293.1" cy="457.6" rx="3.1" ry="2.35" fill="#f32b2b"/><ellipse cx="292.2" cy="412.6" rx="3.1" ry="2.35" fill="#f32b2b"/><ellipse cx="291.5" cy="449.5" rx="3.1" ry="2.35" fill="#f32b2b"/><ellipse cx="290.6" cy="404.6" rx="3.1" ry="2.35" fill="#f32b2b"/><ellipse cx="290.0" cy="441.5" rx="3.1" ry="2.35" fill="#f32b2b"/><ellipse cx="289.4" cy="478.3" rx="3.1" ry="2.35" fill="#f32b2b"/><ellipse cx="289.1" cy="396.5" rx="3.1" ry="2.35" fill="#f32b2b"/><ellipse cx="288.4" cy="433.4" rx="3.1" ry="2.35" fill="#f32b2b"/><ellipse cx="287.8" cy="470.3" rx="3.1" ry="2.35" fill="#f32b2b"/><ellipse cx="286.9" cy="425.3" rx="3.1" ry="2.35" fill="#f32b2b"/><ellipse cx="286.3" cy="462.2" rx="3.1" ry="2.35" fill="#f32b2b"/><ellipse cx="285.3" cy="417.3" rx="3.1" ry="2.35" fill="#f32b2b"/><ellipse cx="284.7" cy="454.2" rx="3.1" ry="2.35" fill="#f32b2b"/><ellipse cx="283.8" cy="409.2" rx="3.1" ry="2.35" fill="#f32b2b"/><ellipse cx="283.2" cy="446.1" rx="3.1" ry="2.35" fill="#f32b2b"/><ellipse cx="282.2" cy="401.1" rx="3.1" ry="2.35" fill="#f32b2b"/><ellipse cx="281.6" cy="438.0" rx="3.1" ry="2.35" fill="#f32b2b"/><ellipse cx="281.0" cy="474.9" rx="3.1" ry="2.35" fill="#f32b2b"/><ellipse cx="280.7" cy="393.1" rx="3.1" ry="2.35" fill="#f32b2b"/><ellipse cx="280.1" cy="430.0" rx="3.1" ry="2.35" fill="#f32b2b"/><ellipse cx="279.5" cy="466.9" rx="3.1" ry="2.35" fill="#f32b2b"/><ellipse cx="278.5" cy="421.9" rx="3.1" ry="2.35" fill="#f32b2b"/><ellipse cx="277.9" cy="458.8" rx="3.1" ry="2.35" fill="#f32b2b"/><ellipse cx="277.0" cy="413.9" rx="3.1" ry="2.35" fill="#f32b2b"/><ellipse cx="276.4" cy="450.8" rx="3.1" ry="2.35" fill="#f32b2b"/><ellipse cx="275.4" cy="405.8" rx="3.1" ry="2.35" fill="#f32b2b"/><ellipse cx="274.8" cy="442.7" rx="3.1" ry="2.35" fill="#f32b2b"/><ellipse cx="273.9" cy="397.7" rx="3.1" ry="2.35" fill="#f32b2b"/><ellipse cx="273.2" cy="434.6" rx="3.1" ry="2.35" fill="#f32b2b"/><ellipse cx="272.6" cy="471.5" rx="3.1" ry="2.35" fill="#f32b2b"/><ellipse cx="271.7" cy="426.6" rx="3.1" ry="2.35" fill="#f32b2b"/><ellipse cx="271.1" cy="463.5" rx="3.1" ry="2.35" fill="#f32b2b"/><ellipse cx="270.1" cy="418.5" rx="3.1" ry="2.35" fill="#f32b2b"/><ellipse cx="269.5" cy="455.4" rx="3.1" ry="2.35" fill="#f32b2b"/><ellipse cx="268.6" cy="410.5" rx="3.1" ry="2.35" fill="#f32b2b"/><ellipse cx="268.0" cy="447.3" rx="3.1" ry="2.35" fill="#f32b2b"/><ellipse cx="267.0" cy="402.4" rx="3.1" ry="2.35" fill="#f32b2b"/><ellipse cx="266.4" cy="439.3" rx="3.1" ry="2.35" fill="#f32b2b"/><ellipse cx="264.9" cy="431.2" rx="3.1" ry="2.35" fill="#f32b2b"/><ellipse cx="264.3" cy="468.1" rx="3.1" ry="2.35" fill="#f32b2b"/><ellipse cx="263.3" cy="423.2" rx="3.1" ry="2.35" fill="#f32b2b"/><ellipse cx="262.7" cy="460.0" rx="3.1" ry="2.35" fill="#f32b2b"/><ellipse cx="261.8" cy="415.1" rx="3.1" ry="2.35" fill="#f32b2b"/><ellipse cx="261.2" cy="452.0" rx="3.1" ry="2.35" fill="#f32b2b"/><ellipse cx="260.2" cy="407.0" rx="3.1" ry="2.35" fill="#f32b2b"/><ellipse cx="259.6" cy="443.9" rx="3.1" ry="2.35" fill="#f32b2b"/><ellipse cx="258.1" cy="435.9" rx="3.1" ry="2.35" fill="#f32b2b"/><ellipse cx="256.5" cy="427.8" rx="3.1" ry="2.35" fill="#f32b2b"/><ellipse cx="255.9" cy="464.7" rx="3.1" ry="2.35" fill="#f32b2b"/><ellipse cx="255.0" cy="419.8" rx="3.1" ry="2.35" fill="#f32b2b"/><ellipse cx="254.3" cy="456.6" rx="3.1" ry="2.35" fill="#f32b2b"/><ellipse cx="253.4" cy="411.7" rx="3.1" ry="2.35" fill="#f32b2b"/><ellipse cx="252.8" cy="448.6" rx="3.1" ry="2.35" fill="#f32b2b"/><ellipse cx="251.2" cy="440.5" rx="3.1" ry="2.35" fill="#f32b2b"/><ellipse cx="249.7" cy="432.5" rx="3.1" ry="2.35" fill="#f32b2b"/><ellipse cx="248.1" cy="424.4" rx="3.1" ry="2.35" fill="#f32b2b"/><ellipse cx="247.5" cy="461.3" rx="3.1" ry="2.35" fill="#f32b2b"/><ellipse cx="246.6" cy="416.3" rx="3.1" ry="2.35" fill="#f32b2b"/><ellipse cx="246.0" cy="453.2" rx="3.1" ry="2.35" fill="#f32b2b"/><ellipse cx="244.4" cy="445.2" rx="3.1" ry="2.35" fill="#f32b2b"/><ellipse cx="242.9" cy="437.1" rx="3.1" ry="2.35" fill="#f32b2b"/><ellipse cx="241.3" cy="429.0" rx="3.1" ry="2.35" fill="#f32b2b"/><ellipse cx="239.8" cy="421.0" rx="3.1" ry="2.35" fill="#f32b2b"/><ellipse cx="239.1" cy="457.9" rx="3.1" ry="2.35" fill="#f32b2b"/><ellipse cx="237.6" cy="449.8" rx="3.1" ry="2.35" fill="#f32b2b"/><ellipse cx="236.0" cy="441.8" rx="3.1" ry="2.35" fill="#f32b2b"/><ellipse cx="234.5" cy="433.7" rx="3.1" ry="2.35" fill="#f32b2b"/><ellipse cx="233.0" cy="425.6" rx="3.1" ry="2.35" fill="#f32b2b"/><ellipse cx="230.8" cy="454.5" rx="3.1" ry="2.35" fill="#f32b2b"/><ellipse cx="229.2" cy="446.4" rx="3.1" ry="2.35" fill="#f32b2b"/><ellipse cx="227.7" cy="438.4" rx="3.1" ry="2.35" fill="#f32b2b"/><ellipse cx="226.1" cy="430.3" rx="3.1" ry="2.35" fill="#f32b2b"/><ellipse cx="222.4" cy="451.1" rx="3.1" ry="2.35" fill="#f32b2b"/><ellipse cx="383.3" cy="447.2" rx="3.1" ry="2.35" fill="#f32b2b"/><ellipse cx="381.6" cy="438.4" rx="3.1" ry="2.35" fill="#f32b2b"/><ellipse cx="379.9" cy="429.6" rx="3.1" ry="2.35" fill="#f32b2b"/><ellipse cx="378.2" cy="420.7" rx="3.1" ry="2.35" fill="#f32b2b"/><ellipse cx="375.9" cy="452.3" rx="3.1" ry="2.35" fill="#f32b2b"/><ellipse cx="374.2" cy="443.5" rx="3.1" ry="2.35" fill="#f32b2b"/><ellipse cx="372.5" cy="434.7" rx="3.1" ry="2.35" fill="#f32b2b"/><ellipse cx="370.8" cy="425.8" rx="3.1" ry="2.35" fill="#f32b2b"/><ellipse cx="369.1" cy="417.0" rx="3.1" ry="2.35" fill="#f32b2b"/><ellipse cx="368.4" cy="457.4" rx="3.1" ry="2.35" fill="#f32b2b"/><ellipse cx="367.4" cy="408.1" rx="3.1" ry="2.35" fill="#f32b2b"/><ellipse cx="366.7" cy="448.6" rx="3.1" ry="2.35" fill="#f32b2b"/><ellipse cx="365.0" cy="439.8" rx="3.1" ry="2.35" fill="#f32b2b"/><ellipse cx="363.3" cy="430.9" rx="3.1" ry="2.35" fill="#f32b2b"/><ellipse cx="361.6" cy="422.1" rx="3.1" ry="2.35" fill="#f32b2b"/><ellipse cx="360.9" cy="462.5" rx="3.1" ry="2.35" fill="#f32b2b"/><ellipse cx="359.9" cy="413.2" rx="3.1" ry="2.35" fill="#f32b2b"/><ellipse cx="359.2" cy="453.7" rx="3.1" ry="2.35" fill="#f32b2b"/><ellipse cx="358.2" cy="404.4" rx="3.1" ry="2.35" fill="#f32b2b"/><ellipse cx="357.5" cy="444.9" rx="3.1" ry="2.35" fill="#f32b2b"/><ellipse cx="355.8" cy="436.0" rx="3.1" ry="2.35" fill="#f32b2b"/><ellipse cx="354.1" cy="427.2" rx="3.1" ry="2.35" fill="#f32b2b"/><ellipse cx="353.4" cy="467.6" rx="3.1" ry="2.35" fill="#f32b2b"/><ellipse cx="352.4" cy="418.3" rx="3.1" ry="2.35" fill="#f32b2b"/><ellipse cx="351.7" cy="458.8" rx="3.1" ry="2.35" fill="#f32b2b"/><ellipse cx="350.7" cy="409.5" rx="3.1" ry="2.35" fill="#f32b2b"/><ellipse cx="350.0" cy="450.0" rx="3.1" ry="2.35" fill="#f32b2b"/><ellipse cx="349.0" cy="400.7" rx="3.1" ry="2.35" fill="#f32b2b"/><ellipse cx="348.3" cy="441.1" rx="3.1" ry="2.35" fill="#f32b2b"/><ellipse cx="347.3" cy="391.8" rx="3.1" ry="2.35" fill="#f32b2b"/><ellipse cx="346.6" cy="432.3" rx="3.1" ry="2.35" fill="#f32b2b"/><ellipse cx="345.9" cy="472.7" rx="3.1" ry="2.35" fill="#f32b2b"/><ellipse cx="344.9" cy="423.4" rx="3.1" ry="2.35" fill="#f32b2b"/><ellipse cx="344.2" cy="463.9" rx="3.1" ry="2.35" fill="#f32b2b"/><ellipse cx="343.2" cy="414.6" rx="3.1" ry="2.35" fill="#f32b2b"/><ellipse cx="342.5" cy="455.1" rx="3.1" ry="2.35" fill="#f32b2b"/><ellipse cx="341.5" cy="405.8" rx="3.1" ry="2.35" fill="#f32b2b"/><ellipse cx="340.8" cy="446.2" rx="3.1" ry="2.35" fill="#f32b2b"/><ellipse cx="339.8" cy="396.9" rx="3.1" ry="2.35" fill="#f32b2b"/><ellipse cx="339.1" cy="437.4" rx="3.1" ry="2.35" fill="#f32b2b"/><ellipse cx="338.5" cy="477.8" rx="3.1" ry="2.35" fill="#f32b2b"/><ellipse cx="338.1" cy="388.1" rx="3.1" ry="2.35" fill="#f32b2b"/><ellipse cx="337.4" cy="428.5" rx="3.1" ry="2.35" fill="#f32b2b"/><ellipse cx="336.8" cy="469.0" rx="3.1" ry="2.35" fill="#f32b2b"/><ellipse cx="335.7" cy="419.7" rx="3.1" ry="2.35" fill="#f32b2b"/><ellipse cx="335.1" cy="460.2" rx="3.1" ry="2.35" fill="#f32b2b"/><ellipse cx="334.0" cy="410.9" rx="3.1" ry="2.35" fill="#f32b2b"/><ellipse cx="333.4" cy="451.3" rx="3.1" ry="2.35" fill="#f32b2b"/><ellipse cx="332.3" cy="402.0" rx="3.1" ry="2.35" fill="#f32b2b"/><ellipse cx="331.7" cy="442.5" rx="3.1" ry="2.35" fill="#f32b2b"/><ellipse cx="331.0" cy="482.9" rx="3.1" ry="2.35" fill="#f32b2b"/><ellipse cx="330.6" cy="393.2" rx="3.1" ry="2.35" fill="#f32b2b"/><ellipse cx="330.0" cy="433.6" rx="3.1" ry="2.35" fill="#f32b2b"/><ellipse cx="329.3" cy="474.1" rx="3.1" ry="2.35" fill="#f32b2b"/><ellipse cx="328.9" cy="384.3" rx="3.1" ry="2.35" fill="#f32b2b"/><ellipse cx="328.3" cy="424.8" rx="3.1" ry="2.35" fill="#f32b2b"/><ellipse cx="327.6" cy="465.3" rx="3.1" ry="2.35" fill="#f32b2b"/><ellipse cx="326.6" cy="416.0" rx="3.1" ry="2.35" fill="#f32b2b"/><ellipse cx="325.9" cy="456.4" rx="3.1" ry="2.35" fill="#f32b2b"/><ellipse cx="324.9" cy="407.1" rx="3.1" ry="2.35" fill="#f32b2b"/><ellipse cx="324.2" cy="447.6" rx="3.1" ry="2.35" fill="#f32b2b"/><ellipse cx="323.5" cy="488.0" rx="3.1" ry="2.35" fill="#f32b2b"/><ellipse cx="323.2" cy="398.3" rx="3.1" ry="2.35" fill="#f32b2b"/><ellipse cx="322.5" cy="438.7" rx="3.1" ry="2.35" fill="#f32b2b"/><ellipse cx="321.8" cy="479.2" rx="3.1" ry="2.35" fill="#f32b2b"/><ellipse cx="321.5" cy="389.4" rx="3.1" ry="2.35" fill="#f32b2b"/><ellipse cx="320.8" cy="429.9" rx="3.1" ry="2.35" fill="#f32b2b"/><ellipse cx="320.1" cy="470.4" rx="3.1" ry="2.35" fill="#f32b2b"/><ellipse cx="319.8" cy="380.6" rx="3.1" ry="2.35" fill="#f32b2b"/><ellipse cx="319.1" cy="421.1" rx="3.1" ry="2.35" fill="#f32b2b"/><ellipse cx="318.4" cy="461.5" rx="3.1" ry="2.35" fill="#f32b2b"/><ellipse cx="317.4" cy="412.2" rx="3.1" ry="2.35" fill="#f32b2b"/><ellipse cx="316.7" cy="452.7" rx="3.1" ry="2.35" fill="#f32b2b"/><ellipse cx="316.0" cy="493.1" rx="3.1" ry="2.35" fill="#f32b2b"/><ellipse cx="315.7" cy="403.4" rx="3.1" ry="2.35" fill="#f32b2b"/><ellipse cx="315.0" cy="443.8" rx="3.1" ry="2.35" fill="#f32b2b"/><ellipse cx="314.3" cy="484.3" rx="3.1" ry="2.35" fill="#f32b2b"/><ellipse cx="314.0" cy="394.5" rx="3.1" ry="2.35" fill="#f32b2b"/><ellipse cx="313.3" cy="435.0" rx="3.1" ry="2.35" fill="#f32b2b"/><ellipse cx="312.6" cy="475.5" rx="3.1" ry="2.35" fill="#f32b2b"/><ellipse cx="312.3" cy="385.7" rx="3.1" ry="2.35" fill="#f32b2b"/><ellipse cx="311.6" cy="426.2" rx="3.1" ry="2.35" fill="#f32b2b"/><ellipse cx="310.9" cy="466.6" rx="3.1" ry="2.35" fill="#f32b2b"/><ellipse cx="310.6" cy="376.9" rx="3.1" ry="2.35" fill="#f32b2b"/><ellipse cx="309.9" cy="417.3" rx="3.1" ry="2.35" fill="#f32b2b"/><ellipse cx="309.2" cy="457.8" rx="3.1" ry="2.35" fill="#f32b2b"/><ellipse cx="308.5" cy="498.2" rx="3.1" ry="2.35" fill="#f32b2b"/><ellipse cx="308.2" cy="408.5" rx="3.1" ry="2.35" fill="#f32b2b"/><ellipse cx="307.5" cy="448.9" rx="3.1" ry="2.35" fill="#f32b2b"/><ellipse cx="306.8" cy="489.4" rx="3.1" ry="2.35" fill="#f32b2b"/><ellipse cx="306.5" cy="399.6" rx="3.1" ry="2.35" fill="#f32b2b"/><ellipse cx="305.8" cy="440.1" rx="3.1" ry="2.35" fill="#f32b2b"/><ellipse cx="305.1" cy="480.6" rx="3.1" ry="2.35" fill="#f32b2b"/><ellipse cx="304.8" cy="390.8" rx="3.1" ry="2.35" fill="#f32b2b"/><ellipse cx="304.1" cy="431.3" rx="3.1" ry="2.35" fill="#f32b2b"/><ellipse cx="303.4" cy="471.7" rx="3.1" ry="2.35" fill="#f32b2b"/><ellipse cx="303.1" cy="382.0" rx="3.1" ry="2.35" fill="#f32b2b"/><ellipse cx="302.4" cy="422.4" rx="3.1" ry="2.35" fill="#f32b2b"/><ellipse cx="301.7" cy="462.9" rx="3.1" ry="2.35" fill="#f32b2b"/><ellipse cx="300.7" cy="413.6" rx="3.1" ry="2.35" fill="#f32b2b"/><ellipse cx="300.0" cy="454.0" rx="3.1" ry="2.35" fill="#f32b2b"/><ellipse cx="299.4" cy="494.5" rx="3.1" ry="2.35" fill="#f32b2b"/><ellipse cx="299.0" cy="404.7" rx="3.1" ry="2.35" fill="#f32b2b"/><ellipse cx="298.3" cy="445.2" rx="3.1" ry="2.35" fill="#f32b2b"/><ellipse cx="297.7" cy="485.7" rx="3.1" ry="2.35" fill="#f32b2b"/><ellipse cx="297.3" cy="395.9" rx="3.1" ry="2.35" fill="#f32b2b"/><ellipse cx="296.6" cy="436.4" rx="3.1" ry="2.35" fill="#f32b2b"/><ellipse cx="296.0" cy="476.8" rx="3.1" ry="2.35" fill="#f32b2b"/><ellipse cx="295.6" cy="387.1" rx="3.1" ry="2.35" fill="#f32b2b"/><ellipse cx="294.9" cy="427.5" rx="3.1" ry="2.35" fill="#f32b2b"/><ellipse cx="294.3" cy="468.0" rx="3.1" ry="2.35" fill="#f32b2b"/><ellipse cx="293.9" cy="378.2" rx="3.1" ry="2.35" fill="#f32b2b"/><ellipse cx="293.2" cy="418.7" rx="3.1" ry="2.35" fill="#f32b2b"/><ellipse cx="292.6" cy="459.1" rx="3.1" ry="2.35" fill="#f32b2b"/><ellipse cx="291.5" cy="409.8" rx="3.1" ry="2.35" fill="#f32b2b"/><ellipse cx="290.9" cy="450.3" rx="3.1" ry="2.35" fill="#f32b2b"/><ellipse cx="290.2" cy="490.8" rx="3.1" ry="2.35" fill="#f32b2b"/><ellipse cx="289.8" cy="401.0" rx="3.1" ry="2.35" fill="#f32b2b"/><ellipse cx="289.2" cy="441.5" rx="3.1" ry="2.35" fill="#f32b2b"/><ellipse cx="288.5" cy="481.9" rx="3.1" ry="2.35" fill="#f32b2b"/><ellipse cx="288.1" cy="392.2" rx="3.1" ry="2.35" fill="#f32b2b"/><ellipse cx="287.5" cy="432.6" rx="3.1" ry="2.35" fill="#f32b2b"/><ellipse cx="286.8" cy="473.1" rx="3.1" ry="2.35" fill="#f32b2b"/><ellipse cx="286.4" cy="383.3" rx="3.1" ry="2.35" fill="#f32b2b"/><ellipse cx="285.8" cy="423.8" rx="3.1" ry="2.35" fill="#f32b2b"/><ellipse cx="285.1" cy="464.2" rx="3.1" ry="2.35" fill="#f32b2b"/><ellipse cx="284.7" cy="374.5" rx="3.1" ry="2.35" fill="#f32b2b"/><ellipse cx="284.1" cy="414.9" rx="3.1" ry="2.35" fill="#f32b2b"/><ellipse cx="283.4" cy="455.4" rx="3.1" ry="2.35" fill="#f32b2b"/><ellipse cx="282.4" cy="406.1" rx="3.1" ry="2.35" fill="#f32b2b"/><ellipse cx="281.7" cy="446.6" rx="3.1" ry="2.35" fill="#f32b2b"/><ellipse cx="281.0" cy="487.0" rx="3.1" ry="2.35" fill="#f32b2b"/><ellipse cx="280.7" cy="397.3" rx="3.1" ry="2.35" fill="#f32b2b"/><ellipse cx="280.0" cy="437.7" rx="3.1" ry="2.35" fill="#f32b2b"/><ellipse cx="279.3" cy="478.2" rx="3.1" ry="2.35" fill="#f32b2b"/><ellipse cx="279.0" cy="388.4" rx="3.1" ry="2.35" fill="#f32b2b"/><ellipse cx="278.3" cy="428.9" rx="3.1" ry="2.35" fill="#f32b2b"/><ellipse cx="277.6" cy="469.3" rx="3.1" ry="2.35" fill="#f32b2b"/><ellipse cx="277.3" cy="379.6" rx="3.1" ry="2.35" fill="#f32b2b"/><ellipse cx="276.6" cy="420.0" rx="3.1" ry="2.35" fill="#f32b2b"/><ellipse cx="275.9" cy="460.5" rx="3.1" ry="2.35" fill="#f32b2b"/><ellipse cx="274.9" cy="411.2" rx="3.1" ry="2.35" fill="#f32b2b"/><ellipse cx="274.2" cy="451.7" rx="3.1" ry="2.35" fill="#f32b2b"/><ellipse cx="273.2" cy="402.4" rx="3.1" ry="2.35" fill="#f32b2b"/><ellipse cx="272.5" cy="442.8" rx="3.1" ry="2.35" fill="#f32b2b"/><ellipse cx="271.8" cy="483.3" rx="3.1" ry="2.35" fill="#f32b2b"/><ellipse cx="271.5" cy="393.5" rx="3.1" ry="2.35" fill="#f32b2b"/><ellipse cx="270.8" cy="434.0" rx="3.1" ry="2.35" fill="#f32b2b"/><ellipse cx="270.1" cy="474.4" rx="3.1" ry="2.35" fill="#f32b2b"/><ellipse cx="269.8" cy="384.7" rx="3.1" ry="2.35" fill="#f32b2b"/><ellipse cx="269.1" cy="425.1" rx="3.1" ry="2.35" fill="#f32b2b"/><ellipse cx="268.4" cy="465.6" rx="3.1" ry="2.35" fill="#f32b2b"/><ellipse cx="268.1" cy="375.8" rx="3.1" ry="2.35" fill="#f32b2b"/><ellipse cx="267.4" cy="416.3" rx="3.1" ry="2.35" fill="#f32b2b"/><ellipse cx="266.7" cy="456.8" rx="3.1" ry="2.35" fill="#f32b2b"/><ellipse cx="265.7" cy="407.5" rx="3.1" ry="2.35" fill="#f32b2b"/><ellipse cx="265.0" cy="447.9" rx="3.1" ry="2.35" fill="#f32b2b"/><ellipse cx="264.0" cy="398.6" rx="3.1" ry="2.35" fill="#f32b2b"/><ellipse cx="263.3" cy="439.1" rx="3.1" ry="2.35" fill="#f32b2b"/><ellipse cx="262.6" cy="479.5" rx="3.1" ry="2.35" fill="#f32b2b"/><ellipse cx="262.3" cy="389.8" rx="3.1" ry="2.35" fill="#f32b2b"/><ellipse cx="261.6" cy="430.2" rx="3.1" ry="2.35" fill="#f32b2b"/><ellipse cx="260.9" cy="470.7" rx="3.1" ry="2.35" fill="#f32b2b"/><ellipse cx="260.6" cy="380.9" rx="3.1" ry="2.35" fill="#f32b2b"/><ellipse cx="259.9" cy="421.4" rx="3.1" ry="2.35" fill="#f32b2b"/><ellipse cx="259.2" cy="461.9" rx="3.1" ry="2.35" fill="#f32b2b"/><ellipse cx="258.2" cy="412.6" rx="3.1" ry="2.35" fill="#f32b2b"/><ellipse cx="257.5" cy="453.0" rx="3.1" ry="2.35" fill="#f32b2b"/><ellipse cx="256.5" cy="403.7" rx="3.1" ry="2.35" fill="#f32b2b"/><ellipse cx="255.8" cy="444.2" rx="3.1" ry="2.35" fill="#f32b2b"/><ellipse cx="254.8" cy="394.9" rx="3.1" ry="2.35" fill="#f32b2b"/><ellipse cx="254.1" cy="435.3" rx="3.1" ry="2.35" fill="#f32b2b"/><ellipse cx="253.5" cy="475.8" rx="3.1" ry="2.35" fill="#f32b2b"/><ellipse cx="253.1" cy="386.0" rx="3.1" ry="2.35" fill="#f32b2b"/><ellipse cx="252.4" cy="426.5" rx="3.1" ry="2.35" fill="#f32b2b"/><ellipse cx="251.8" cy="467.0" rx="3.1" ry="2.35" fill="#f32b2b"/><ellipse cx="250.7" cy="417.7" rx="3.1" ry="2.35" fill="#f32b2b"/><ellipse cx="250.1" cy="458.1" rx="3.1" ry="2.35" fill="#f32b2b"/><ellipse cx="249.0" cy="408.8" rx="3.1" ry="2.35" fill="#f32b2b"/><ellipse cx="248.4" cy="449.3" rx="3.1" ry="2.35" fill="#f32b2b"/><ellipse cx="247.3" cy="400.0" rx="3.1" ry="2.35" fill="#f32b2b"/><ellipse cx="246.7" cy="440.4" rx="3.1" ry="2.35" fill="#f32b2b"/><ellipse cx="245.6" cy="391.1" rx="3.1" ry="2.35" fill="#f32b2b"/><ellipse cx="245.0" cy="431.6" rx="3.1" ry="2.35" fill="#f32b2b"/><ellipse cx="244.3" cy="472.1" rx="3.1" ry="2.35" fill="#f32b2b"/><ellipse cx="243.9" cy="382.3" rx="3.1" ry="2.35" fill="#f32b2b"/><ellipse cx="243.3" cy="422.8" rx="3.1" ry="2.35" fill="#f32b2b"/><ellipse cx="242.6" cy="463.2" rx="3.1" ry="2.35" fill="#f32b2b"/><ellipse cx="241.6" cy="413.9" rx="3.1" ry="2.35" fill="#f32b2b"/><ellipse cx="240.9" cy="454.4" rx="3.1" ry="2.35" fill="#f32b2b"/><ellipse cx="239.9" cy="405.1" rx="3.1" ry="2.35" fill="#f32b2b"/><ellipse cx="239.2" cy="445.5" rx="3.1" ry="2.35" fill="#f32b2b"/><ellipse cx="238.2" cy="396.2" rx="3.1" ry="2.35" fill="#f32b2b"/><ellipse cx="237.5" cy="436.7" rx="3.1" ry="2.35" fill="#f32b2b"/><ellipse cx="236.5" cy="387.4" rx="3.1" ry="2.35" fill="#f32b2b"/><ellipse cx="235.8" cy="427.9" rx="3.1" ry="2.35" fill="#f32b2b"/><ellipse cx="235.1" cy="468.3" rx="3.1" ry="2.35" fill="#f32b2b"/><ellipse cx="234.1" cy="419.0" rx="3.1" ry="2.35" fill="#f32b2b"/><ellipse cx="233.4" cy="459.5" rx="3.1" ry="2.35" fill="#f32b2b"/><ellipse cx="232.4" cy="410.2" rx="3.1" ry="2.35" fill="#f32b2b"/><ellipse cx="231.7" cy="450.6" rx="3.1" ry="2.35" fill="#f32b2b"/><ellipse cx="230.7" cy="401.3" rx="3.1" ry="2.35" fill="#f32b2b"/><ellipse cx="230.0" cy="441.8" rx="3.1" ry="2.35" fill="#f32b2b"/><ellipse cx="229.0" cy="392.5" rx="3.1" ry="2.35" fill="#f32b2b"/><ellipse cx="228.3" cy="433.0" rx="3.1" ry="2.35" fill="#f32b2b"/><ellipse cx="226.6" cy="424.1" rx="3.1" ry="2.35" fill="#f32b2b"/><ellipse cx="225.9" cy="464.6" rx="3.1" ry="2.35" fill="#f32b2b"/><ellipse cx="224.9" cy="415.3" rx="3.1" ry="2.35" fill="#f32b2b"/><ellipse cx="224.2" cy="455.7" rx="3.1" ry="2.35" fill="#f32b2b"/><ellipse cx="223.2" cy="406.4" rx="3.1" ry="2.35" fill="#f32b2b"/><ellipse cx="222.5" cy="446.9" rx="3.1" ry="2.35" fill="#f32b2b"/><ellipse cx="221.5" cy="397.6" rx="3.1" ry="2.35" fill="#f32b2b"/><ellipse cx="220.8" cy="438.1" rx="3.1" ry="2.35" fill="#f32b2b"/><ellipse cx="219.1" cy="429.2" rx="3.1" ry="2.35" fill="#f32b2b"/><ellipse cx="217.4" cy="420.4" rx="3.1" ry="2.35" fill="#f32b2b"/><ellipse cx="216.7" cy="460.8" rx="3.1" ry="2.35" fill="#f32b2b"/><ellipse cx="215.7" cy="411.5" rx="3.1" ry="2.35" fill="#f32b2b"/><ellipse cx="214.0" cy="402.7" rx="3.1" ry="2.35" fill="#f32b2b"/><ellipse cx="396.8" cy="431.0" rx="3.1" ry="2.35" fill="#f32b2b"/><ellipse cx="395.7" cy="377.4" rx="3.1" ry="2.35" fill="#f32b2b"/><ellipse cx="395.0" cy="421.4" rx="3.1" ry="2.35" fill="#f32b2b"/><ellipse cx="393.9" cy="367.8" rx="3.1" ry="2.35" fill="#f32b2b"/><ellipse cx="393.1" cy="411.8" rx="3.1" ry="2.35" fill="#f32b2b"/><ellipse cx="392.4" cy="455.8" rx="3.1" ry="2.35" fill="#f32b2b"/><ellipse cx="391.3" cy="402.2" rx="3.1" ry="2.35" fill="#f32b2b"/><ellipse cx="390.5" cy="446.2" rx="3.1" ry="2.35" fill="#f32b2b"/><ellipse cx="389.4" cy="392.6" rx="3.1" ry="2.35" fill="#f32b2b"/><ellipse cx="388.7" cy="436.6" rx="3.1" ry="2.35" fill="#f32b2b"/><ellipse cx="387.6" cy="382.9" rx="3.1" ry="2.35" fill="#f32b2b"/><ellipse cx="386.8" cy="427.0" rx="3.1" ry="2.35" fill="#f32b2b"/><ellipse cx="385.7" cy="373.3" rx="3.1" ry="2.35" fill="#f32b2b"/><ellipse cx="385.0" cy="417.3" rx="3.1" ry="2.35" fill="#f32b2b"/><ellipse cx="384.2" cy="461.4" rx="3.1" ry="2.35" fill="#f32b2b"/><ellipse cx="383.9" cy="363.7" rx="3.1" ry="2.35" fill="#f32b2b"/><ellipse cx="383.1" cy="407.7" rx="3.1" ry="2.35" fill="#f32b2b"/><ellipse cx="382.4" cy="451.8" rx="3.1" ry="2.35" fill="#f32b2b"/><ellipse cx="381.3" cy="398.1" rx="3.1" ry="2.35" fill="#f32b2b"/><ellipse cx="380.5" cy="442.1" rx="3.1" ry="2.35" fill="#f32b2b"/><ellipse cx="379.4" cy="388.5" rx="3.1" ry="2.35" fill="#f32b2b"/><ellipse cx="378.7" cy="432.5" rx="3.1" ry="2.35" fill="#f32b2b"/><ellipse cx="377.6" cy="378.9" rx="3.1" ry="2.35" fill="#f32b2b"/><ellipse cx="376.8" cy="422.9" rx="3.1" ry="2.35" fill="#f32b2b"/><ellipse cx="376.1" cy="466.9" rx="3.1" ry="2.35" fill="#f32b2b"/><ellipse cx="375.7" cy="369.2" rx="3.1" ry="2.35" fill="#f32b2b"/><ellipse cx="375.0" cy="413.3" rx="3.1" ry="2.35" fill="#f32b2b"/><ellipse cx="374.2" cy="457.3" rx="3.1" ry="2.35" fill="#f32b2b"/><ellipse cx="373.9" cy="359.6" rx="3.1" ry="2.35" fill="#f32b2b"/><ellipse cx="373.1" cy="403.6" rx="3.1" ry="2.35" fill="#f32b2b"/><ellipse cx="372.4" cy="447.7" rx="3.1" ry="2.35" fill="#f32b2b"/><ellipse cx="371.3" cy="394.0" rx="3.1" ry="2.35" fill="#f32b2b"/><ellipse cx="370.5" cy="438.1" rx="3.1" ry="2.35" fill="#f32b2b"/><ellipse cx="369.4" cy="384.4" rx="3.1" ry="2.35" fill="#f32b2b"/><ellipse cx="368.7" cy="428.4" rx="3.1" ry="2.35" fill="#f32b2b"/><ellipse cx="368.0" cy="472.5" rx="3.1" ry="2.35" fill="#f32b2b"/><ellipse cx="367.6" cy="374.8" rx="3.1" ry="2.35" fill="#f32b2b"/><ellipse cx="366.8" cy="418.8" rx="3.1" ry="2.35" fill="#f32b2b"/><ellipse cx="366.1" cy="462.9" rx="3.1" ry="2.35" fill="#f32b2b"/><ellipse cx="365.7" cy="365.2" rx="3.1" ry="2.35" fill="#f32b2b"/><ellipse cx="365.0" cy="409.2" rx="3.1" ry="2.35" fill="#f32b2b"/><ellipse cx="364.2" cy="453.2" rx="3.1" ry="2.35" fill="#f32b2b"/><ellipse cx="363.9" cy="355.6" rx="3.1" ry="2.35" fill="#f32b2b"/><ellipse cx="363.1" cy="399.6" rx="3.1" ry="2.35" fill="#f32b2b"/><ellipse cx="362.4" cy="443.6" rx="3.1" ry="2.35" fill="#f32b2b"/><ellipse cx="361.3" cy="390.0" rx="3.1" ry="2.35" fill="#f32b2b"/><ellipse cx="360.5" cy="434.0" rx="3.1" ry="2.35" fill="#f32b2b"/><ellipse cx="359.8" cy="478.0" rx="3.1" ry="2.35" fill="#f32b2b"/><ellipse cx="359.4" cy="380.3" rx="3.1" ry="2.35" fill="#f32b2b"/><ellipse cx="358.7" cy="424.4" rx="3.1" ry="2.35" fill="#f32b2b"/><ellipse cx="358.0" cy="468.4" rx="3.1" ry="2.35" fill="#f32b2b"/><ellipse cx="357.6" cy="370.7" rx="3.1" ry="2.35" fill="#f32b2b"/><ellipse cx="356.9" cy="414.8" rx="3.1" ry="2.35" fill="#f32b2b"/><ellipse cx="356.1" cy="458.8" rx="3.1" ry="2.35" fill="#f32b2b"/><ellipse cx="355.7" cy="361.1" rx="3.1" ry="2.35" fill="#f32b2b"/><ellipse cx="355.0" cy="405.1" rx="3.1" ry="2.35" fill="#f32b2b"/><ellipse cx="354.3" cy="449.2" rx="3.1" ry="2.35" fill="#f32b2b"/><ellipse cx="353.9" cy="351.5" rx="3.1" ry="2.35" fill="#f32b2b"/><ellipse cx="353.1" cy="395.5" rx="3.1" ry="2.35" fill="#f32b2b"/><ellipse cx="352.4" cy="439.5" rx="3.1" ry="2.35" fill="#f32b2b"/><ellipse cx="351.7" cy="483.6" rx="3.1" ry="2.35" fill="#f32b2b"/><ellipse cx="351.3" cy="385.9" rx="3.1" ry="2.35" fill="#f32b2b"/><ellipse cx="350.6" cy="429.9" rx="3.1" ry="2.35" fill="#f32b2b"/><ellipse cx="349.8" cy="474.0" rx="3.1" ry="2.35" fill="#f32b2b"/><ellipse cx="349.5" cy="376.3" rx="3.1" ry="2.35" fill="#f32b2b"/><ellipse cx="348.7" cy="420.3" rx="3.1" ry="2.35" fill="#f32b2b"/><ellipse cx="348.0" cy="464.3" rx="3.1" ry="2.35" fill="#f32b2b"/><ellipse cx="347.6" cy="366.6" rx="3.1" ry="2.35" fill="#f32b2b"/><ellipse cx="346.9" cy="410.7" rx="3.1" ry="2.35" fill="#f32b2b"/><ellipse cx="346.1" cy="454.7" rx="3.1" ry="2.35" fill="#f32b2b"/><ellipse cx="345.8" cy="357.0" rx="3.1" ry="2.35" fill="#f32b2b"/><ellipse cx="345.0" cy="401.1" rx="3.1" ry="2.35" fill="#f32b2b"/><ellipse cx="344.3" cy="445.1" rx="3.1" ry="2.35" fill="#f32b2b"/><ellipse cx="343.5" cy="489.1" rx="3.1" ry="2.35" fill="#f32b2b"/><ellipse cx="343.2" cy="391.4" rx="3.1" ry="2.35" fill="#f32b2b"/><ellipse cx="342.4" cy="435.5" rx="3.1" ry="2.35" fill="#f32b2b"/><ellipse cx="341.7" cy="479.5" rx="3.1" ry="2.35" fill="#f32b2b"/><ellipse cx="341.3" cy="381.8" rx="3.1" ry="2.35" fill="#f32b2b"/><ellipse cx="340.6" cy="425.9" rx="3.1" ry="2.35" fill="#f32b2b"/><ellipse cx="339.8" cy="469.9" rx="3.1" ry="2.35" fill="#f32b2b"/><ellipse cx="339.5" cy="372.2" rx="3.1" ry="2.35" fill="#f32b2b"/><ellipse cx="338.7" cy="416.2" rx="3.1" ry="2.35" fill="#f32b2b"/><ellipse cx="338.0" cy="460.3" rx="3.1" ry="2.35" fill="#f32b2b"/><ellipse cx="337.6" cy="362.6" rx="3.1" ry="2.35" fill="#f32b2b"/><ellipse cx="336.9" cy="406.6" rx="3.1" ry="2.35" fill="#f32b2b"/><ellipse cx="336.1" cy="450.6" rx="3.1" ry="2.35" fill="#f32b2b"/><ellipse cx="335.8" cy="353.0" rx="3.1" ry="2.35" fill="#f32b2b"/><ellipse cx="335.4" cy="494.7" rx="3.1" ry="2.35" fill="#f32b2b"/><ellipse cx="335.0" cy="397.0" rx="3.1" ry="2.35" fill="#f32b2b"/><ellipse cx="334.3" cy="441.0" rx="3.1" ry="2.35" fill="#f32b2b"/><ellipse cx="333.5" cy="485.0" rx="3.1" ry="2.35" fill="#f32b2b"/><ellipse cx="333.2" cy="387.4" rx="3.1" ry="2.35" fill="#f32b2b"/><ellipse cx="332.4" cy="431.4" rx="3.1" ry="2.35" fill="#f32b2b"/><ellipse cx="331.7" cy="475.4" rx="3.1" ry="2.35" fill="#f32b2b"/><ellipse cx="331.3" cy="377.8" rx="3.1" ry="2.35" fill="#f32b2b"/><ellipse cx="330.6" cy="421.8" rx="3.1" ry="2.35" fill="#f32b2b"/><ellipse cx="329.8" cy="465.8" rx="3.1" ry="2.35" fill="#f32b2b"/><ellipse cx="329.5" cy="368.1" rx="3.1" ry="2.35" fill="#f32b2b"/><ellipse cx="328.7" cy="412.2" rx="3.1" ry="2.35" fill="#f32b2b"/><ellipse cx="328.0" cy="456.2" rx="3.1" ry="2.35" fill="#f32b2b"/><ellipse cx="327.6" cy="358.5" rx="3.1" ry="2.35" fill="#f32b2b"/><ellipse cx="327.2" cy="500.2" rx="3.1" ry="2.35" fill="#f32b2b"/><ellipse cx="326.9" cy="402.5" rx="3.1" ry="2.35" fill="#f32b2b"/><ellipse cx="326.1" cy="446.6" rx="3.1" ry="2.35" fill="#f32b2b"/><ellipse cx="325.8" cy="348.9" rx="3.1" ry="2.35" fill="#f32b2b"/><ellipse cx="325.4" cy="490.6" rx="3.1" ry="2.35" fill="#f32b2b"/><ellipse cx="325.0" cy="392.9" rx="3.1" ry="2.35" fill="#f32b2b"/><ellipse cx="324.3" cy="437.0" rx="3.1" ry="2.35" fill="#f32b2b"/><ellipse cx="323.5" cy="481.0" rx="3.1" ry="2.35" fill="#f32b2b"/><ellipse cx="323.2" cy="383.3" rx="3.1" ry="2.35" fill="#f32b2b"/><ellipse cx="322.4" cy="427.3" rx="3.1" ry="2.35" fill="#f32b2b"/><ellipse cx="321.7" cy="471.4" rx="3.1" ry="2.35" fill="#f32b2b"/><ellipse cx="321.3" cy="373.7" rx="3.1" ry="2.35" fill="#f32b2b"/><ellipse cx="320.6" cy="417.7" rx="3.1" ry="2.35" fill="#f32b2b"/><ellipse cx="319.9" cy="461.7" rx="3.1" ry="2.35" fill="#f32b2b"/><ellipse cx="319.5" cy="364.1" rx="3.1" ry="2.35" fill="#f32b2b"/><ellipse cx="319.1" cy="505.8" rx="3.1" ry="2.35" fill="#f32b2b"/><ellipse cx="318.7" cy="408.1" rx="3.1" ry="2.35" fill="#f32b2b"/><ellipse cx="318.0" cy="452.1" rx="3.1" ry="2.35" fill="#f32b2b"/><ellipse cx="317.6" cy="354.4" rx="3.1" ry="2.35" fill="#f32b2b"/><ellipse cx="317.3" cy="496.1" rx="3.1" ry="2.35" fill="#f32b2b"/><ellipse cx="316.9" cy="398.5" rx="3.1" ry="2.35" fill="#f32b2b"/><ellipse cx="316.1" cy="442.5" rx="3.1" ry="2.35" fill="#f32b2b"/><ellipse cx="315.4" cy="486.5" rx="3.1" ry="2.35" fill="#f32b2b"/><ellipse cx="315.0" cy="388.9" rx="3.1" ry="2.35" fill="#f32b2b"/><ellipse cx="314.3" cy="432.9" rx="3.1" ry="2.35" fill="#f32b2b"/><ellipse cx="313.6" cy="476.9" rx="3.1" ry="2.35" fill="#f32b2b"/><ellipse cx="313.2" cy="379.2" rx="3.1" ry="2.35" fill="#f32b2b"/><ellipse cx="312.5" cy="423.3" rx="3.1" ry="2.35" fill="#f32b2b"/><ellipse cx="311.7" cy="467.3" rx="3.1" ry="2.35" fill="#f32b2b"/><ellipse cx="311.3" cy="369.6" rx="3.1" ry="2.35" fill="#f32b2b"/><ellipse cx="311.0" cy="511.3" rx="3.1" ry="2.35" fill="#f32b2b"/><ellipse cx="310.6" cy="413.6" rx="3.1" ry="2.35" fill="#f32b2b"/><ellipse cx="309.9" cy="457.7" rx="3.1" ry="2.35" fill="#f32b2b"/><ellipse cx="309.5" cy="360.0" rx="3.1" ry="2.35" fill="#f32b2b"/><ellipse cx="309.1" cy="501.7" rx="3.1" ry="2.35" fill="#f32b2b"/><ellipse cx="308.8" cy="404.0" rx="3.1" ry="2.35" fill="#f32b2b"/><ellipse cx="308.0" cy="448.0" rx="3.1" ry="2.35" fill="#f32b2b"/><ellipse cx="307.6" cy="350.4" rx="3.1" ry="2.35" fill="#f32b2b"/><ellipse cx="307.3" cy="492.1" rx="3.1" ry="2.35" fill="#f32b2b"/><ellipse cx="306.9" cy="394.4" rx="3.1" ry="2.35" fill="#f32b2b"/><ellipse cx="306.2" cy="438.4" rx="3.1" ry="2.35" fill="#f32b2b"/><ellipse cx="305.4" cy="482.5" rx="3.1" ry="2.35" fill="#f32b2b"/><ellipse cx="305.0" cy="384.8" rx="3.1" ry="2.35" fill="#f32b2b"/><ellipse cx="304.3" cy="428.8" rx="3.1" ry="2.35" fill="#f32b2b"/><ellipse cx="303.6" cy="472.8" rx="3.1" ry="2.35" fill="#f32b2b"/><ellipse cx="303.2" cy="375.2" rx="3.1" ry="2.35" fill="#f32b2b"/><ellipse cx="302.5" cy="419.2" rx="3.1" ry="2.35" fill="#f32b2b"/><ellipse cx="301.7" cy="463.2" rx="3.1" ry="2.35" fill="#f32b2b"/><ellipse cx="301.4" cy="365.5" rx="3.1" ry="2.35" fill="#f32b2b"/><ellipse cx="301.0" cy="507.2" rx="3.1" ry="2.35" fill="#f32b2b"/><ellipse cx="300.6" cy="409.6" rx="3.1" ry="2.35" fill="#f32b2b"/><ellipse cx="299.9" cy="453.6" rx="3.1" ry="2.35" fill="#f32b2b"/><ellipse cx="299.5" cy="355.9" rx="3.1" ry="2.35" fill="#f32b2b"/><ellipse cx="299.1" cy="497.6" rx="3.1" ry="2.35" fill="#f32b2b"/><ellipse cx="298.8" cy="399.9" rx="3.1" ry="2.35" fill="#f32b2b"/><ellipse cx="298.0" cy="444.0" rx="3.1" ry="2.35" fill="#f32b2b"/><ellipse cx="297.6" cy="346.3" rx="3.1" ry="2.35" fill="#f32b2b"/><ellipse cx="297.3" cy="488.0" rx="3.1" ry="2.35" fill="#f32b2b"/><ellipse cx="296.9" cy="390.3" rx="3.1" ry="2.35" fill="#f32b2b"/><ellipse cx="296.2" cy="434.4" rx="3.1" ry="2.35" fill="#f32b2b"/><ellipse cx="295.4" cy="478.4" rx="3.1" ry="2.35" fill="#f32b2b"/><ellipse cx="295.1" cy="380.7" rx="3.1" ry="2.35" fill="#f32b2b"/><ellipse cx="294.3" cy="424.7" rx="3.1" ry="2.35" fill="#f32b2b"/><ellipse cx="293.6" cy="468.8" rx="3.1" ry="2.35" fill="#f32b2b"/><ellipse cx="293.2" cy="371.1" rx="3.1" ry="2.35" fill="#f32b2b"/><ellipse cx="292.5" cy="415.1" rx="3.1" ry="2.35" fill="#f32b2b"/><ellipse cx="291.7" cy="459.1" rx="3.1" ry="2.35" fill="#f32b2b"/><ellipse cx="291.4" cy="361.5" rx="3.1" ry="2.35" fill="#f32b2b"/><ellipse cx="291.0" cy="503.2" rx="3.1" ry="2.35" fill="#f32b2b"/><ellipse cx="290.6" cy="405.5" rx="3.1" ry="2.35" fill="#f32b2b"/><ellipse cx="289.9" cy="449.5" rx="3.1" ry="2.35" fill="#f32b2b"/><ellipse cx="289.5" cy="351.9" rx="3.1" ry="2.35" fill="#f32b2b"/><ellipse cx="289.1" cy="493.6" rx="3.1" ry="2.35" fill="#f32b2b"/><ellipse cx="288.8" cy="395.9" rx="3.1" ry="2.35" fill="#f32b2b"/><ellipse cx="288.0" cy="439.9" rx="3.1" ry="2.35" fill="#f32b2b"/><ellipse cx="287.3" cy="483.9" rx="3.1" ry="2.35" fill="#f32b2b"/><ellipse cx="286.9" cy="386.3" rx="3.1" ry="2.35" fill="#f32b2b"/><ellipse cx="286.2" cy="430.3" rx="3.1" ry="2.35" fill="#f32b2b"/><ellipse cx="285.4" cy="474.3" rx="3.1" ry="2.35" fill="#f32b2b"/><ellipse cx="285.1" cy="376.6" rx="3.1" ry="2.35" fill="#f32b2b"/><ellipse cx="284.3" cy="420.7" rx="3.1" ry="2.35" fill="#f32b2b"/><ellipse cx="283.6" cy="464.7" rx="3.1" ry="2.35" fill="#f32b2b"/><ellipse cx="283.2" cy="367.0" rx="3.1" ry="2.35" fill="#f32b2b"/><ellipse cx="282.5" cy="411.0" rx="3.1" ry="2.35" fill="#f32b2b"/><ellipse cx="281.7" cy="455.1" rx="3.1" ry="2.35" fill="#f32b2b"/><ellipse cx="281.4" cy="357.4" rx="3.1" ry="2.35" fill="#f32b2b"/><ellipse cx="281.0" cy="499.1" rx="3.1" ry="2.35" fill="#f32b2b"/><ellipse cx="280.6" cy="401.4" rx="3.1" ry="2.35" fill="#f32b2b"/><ellipse cx="279.9" cy="445.5" rx="3.1" ry="2.35" fill="#f32b2b"/><ellipse cx="279.5" cy="347.8" rx="3.1" ry="2.35" fill="#f32b2b"/><ellipse cx="279.1" cy="489.5" rx="3.1" ry="2.35" fill="#f32b2b"/><ellipse cx="278.8" cy="391.8" rx="3.1" ry="2.35" fill="#f32b2b"/><ellipse cx="278.0" cy="435.8" rx="3.1" ry="2.35" fill="#f32b2b"/><ellipse cx="277.3" cy="479.9" rx="3.1" ry="2.35" fill="#f32b2b"/><ellipse cx="276.9" cy="382.2" rx="3.1" ry="2.35" fill="#f32b2b"/><ellipse cx="276.2" cy="426.2" rx="3.1" ry="2.35" fill="#f32b2b"/><ellipse cx="275.5" cy="470.2" rx="3.1" ry="2.35" fill="#f32b2b"/><ellipse cx="275.1" cy="372.6" rx="3.1" ry="2.35" fill="#f32b2b"/><ellipse cx="274.3" cy="416.6" rx="3.1" ry="2.35" fill="#f32b2b"/><ellipse cx="273.6" cy="460.6" rx="3.1" ry="2.35" fill="#f32b2b"/><ellipse cx="273.2" cy="362.9" rx="3.1" ry="2.35" fill="#f32b2b"/><ellipse cx="272.5" cy="407.0" rx="3.1" ry="2.35" fill="#f32b2b"/><ellipse cx="271.8" cy="451.0" rx="3.1" ry="2.35" fill="#f32b2b"/><ellipse cx="271.4" cy="353.3" rx="3.1" ry="2.35" fill="#f32b2b"/><ellipse cx="271.0" cy="495.0" rx="3.1" ry="2.35" fill="#f32b2b"/><ellipse cx="270.6" cy="397.4" rx="3.1" ry="2.35" fill="#f32b2b"/><ellipse cx="269.9" cy="441.4" rx="3.1" ry="2.35" fill="#f32b2b"/><ellipse cx="269.2" cy="485.4" rx="3.1" ry="2.35" fill="#f32b2b"/><ellipse cx="268.8" cy="387.7" rx="3.1" ry="2.35" fill="#f32b2b"/><ellipse cx="268.0" cy="431.8" rx="3.1" ry="2.35" fill="#f32b2b"/><ellipse cx="267.3" cy="475.8" rx="3.1" ry="2.35" fill="#f32b2b"/><ellipse cx="266.9" cy="378.1" rx="3.1" ry="2.35" fill="#f32b2b"/><ellipse cx="266.2" cy="422.1" rx="3.1" ry="2.35" fill="#f32b2b"/><ellipse cx="265.5" cy="466.2" rx="3.1" ry="2.35" fill="#f32b2b"/><ellipse cx="265.1" cy="368.5" rx="3.1" ry="2.35" fill="#f32b2b"/><ellipse cx="264.4" cy="412.5" rx="3.1" ry="2.35" fill="#f32b2b"/><ellipse cx="263.6" cy="456.6" rx="3.1" ry="2.35" fill="#f32b2b"/><ellipse cx="263.2" cy="358.9" rx="3.1" ry="2.35" fill="#f32b2b"/><ellipse cx="262.5" cy="402.9" rx="3.1" ry="2.35" fill="#f32b2b"/><ellipse cx="261.8" cy="446.9" rx="3.1" ry="2.35" fill="#f32b2b"/><ellipse cx="261.4" cy="349.3" rx="3.1" ry="2.35" fill="#f32b2b"/><ellipse cx="261.0" cy="491.0" rx="3.1" ry="2.35" fill="#f32b2b"/><ellipse cx="260.6" cy="393.3" rx="3.1" ry="2.35" fill="#f32b2b"/><ellipse cx="259.9" cy="437.3" rx="3.1" ry="2.35" fill="#f32b2b"/><ellipse cx="259.2" cy="481.4" rx="3.1" ry="2.35" fill="#f32b2b"/><ellipse cx="258.8" cy="383.7" rx="3.1" ry="2.35" fill="#f32b2b"/><ellipse cx="258.1" cy="427.7" rx="3.1" ry="2.35" fill="#f32b2b"/><ellipse cx="257.3" cy="471.7" rx="3.1" ry="2.35" fill="#f32b2b"/><ellipse cx="257.0" cy="374.1" rx="3.1" ry="2.35" fill="#f32b2b"/><ellipse cx="256.2" cy="418.1" rx="3.1" ry="2.35" fill="#f32b2b"/><ellipse cx="255.5" cy="462.1" rx="3.1" ry="2.35" fill="#f32b2b"/><ellipse cx="255.1" cy="364.4" rx="3.1" ry="2.35" fill="#f32b2b"/><ellipse cx="254.4" cy="408.5" rx="3.1" ry="2.35" fill="#f32b2b"/><ellipse cx="253.6" cy="452.5" rx="3.1" ry="2.35" fill="#f32b2b"/><ellipse cx="253.2" cy="354.8" rx="3.1" ry="2.35" fill="#f32b2b"/><ellipse cx="252.5" cy="398.8" rx="3.1" ry="2.35" fill="#f32b2b"/><ellipse cx="251.8" cy="442.9" rx="3.1" ry="2.35" fill="#f32b2b"/><ellipse cx="251.0" cy="486.9" rx="3.1" ry="2.35" fill="#f32b2b"/><ellipse cx="250.7" cy="389.2" rx="3.1" ry="2.35" fill="#f32b2b"/><ellipse cx="249.9" cy="433.2" rx="3.1" ry="2.35" fill="#f32b2b"/><ellipse cx="249.2" cy="477.3" rx="3.1" ry="2.35" fill="#f32b2b"/><ellipse cx="248.8" cy="379.6" rx="3.1" ry="2.35" fill="#f32b2b"/><ellipse cx="248.1" cy="423.6" rx="3.1" ry="2.35" fill="#f32b2b"/><ellipse cx="247.3" cy="467.7" rx="3.1" ry="2.35" fill="#f32b2b"/><ellipse cx="247.0" cy="370.0" rx="3.1" ry="2.35" fill="#f32b2b"/><ellipse cx="246.2" cy="414.0" rx="3.1" ry="2.35" fill="#f32b2b"/><ellipse cx="245.5" cy="458.0" rx="3.1" ry="2.35" fill="#f32b2b"/><ellipse cx="245.1" cy="360.4" rx="3.1" ry="2.35" fill="#f32b2b"/><ellipse cx="244.4" cy="404.4" rx="3.1" ry="2.35" fill="#f32b2b"/><ellipse cx="243.6" cy="448.4" rx="3.1" ry="2.35" fill="#f32b2b"/><ellipse cx="243.3" cy="350.7" rx="3.1" ry="2.35" fill="#f32b2b"/><ellipse cx="242.5" cy="394.8" rx="3.1" ry="2.35" fill="#f32b2b"/><ellipse cx="241.8" cy="438.8" rx="3.1" ry="2.35" fill="#f32b2b"/><ellipse cx="241.0" cy="482.8" rx="3.1" ry="2.35" fill="#f32b2b"/><ellipse cx="240.7" cy="385.1" rx="3.1" ry="2.35" fill="#f32b2b"/><ellipse cx="239.9" cy="429.2" rx="3.1" ry="2.35" fill="#f32b2b"/><ellipse cx="239.2" cy="473.2" rx="3.1" ry="2.35" fill="#f32b2b"/><ellipse cx="238.8" cy="375.5" rx="3.1" ry="2.35" fill="#f32b2b"/><ellipse cx="238.1" cy="419.6" rx="3.1" ry="2.35" fill="#f32b2b"/><ellipse cx="237.3" cy="463.6" rx="3.1" ry="2.35" fill="#f32b2b"/><ellipse cx="237.0" cy="365.9" rx="3.1" ry="2.35" fill="#f32b2b"/><ellipse cx="236.2" cy="409.9" rx="3.1" ry="2.35" fill="#f32b2b"/><ellipse cx="235.5" cy="454.0" rx="3.1" ry="2.35" fill="#f32b2b"/><ellipse cx="235.1" cy="356.3" rx="3.1" ry="2.35" fill="#f32b2b"/><ellipse cx="234.4" cy="400.3" rx="3.1" ry="2.35" fill="#f32b2b"/><ellipse cx="233.6" cy="444.4" rx="3.1" ry="2.35" fill="#f32b2b"/><ellipse cx="232.5" cy="390.7" rx="3.1" ry="2.35" fill="#f32b2b"/><ellipse cx="231.8" cy="434.7" rx="3.1" ry="2.35" fill="#f32b2b"/><ellipse cx="231.0" cy="478.8" rx="3.1" ry="2.35" fill="#f32b2b"/><ellipse cx="230.7" cy="381.1" rx="3.1" ry="2.35" fill="#f32b2b"/><ellipse cx="229.9" cy="425.1" rx="3.1" ry="2.35" fill="#f32b2b"/><ellipse cx="229.2" cy="469.1" rx="3.1" ry="2.35" fill="#f32b2b"/><ellipse cx="228.8" cy="371.5" rx="3.1" ry="2.35" fill="#f32b2b"/><ellipse cx="228.1" cy="415.5" rx="3.1" ry="2.35" fill="#f32b2b"/><ellipse cx="227.4" cy="459.5" rx="3.1" ry="2.35" fill="#f32b2b"/><ellipse cx="227.0" cy="361.8" rx="3.1" ry="2.35" fill="#f32b2b"/><ellipse cx="226.2" cy="405.9" rx="3.1" ry="2.35" fill="#f32b2b"/><ellipse cx="225.5" cy="449.9" rx="3.1" ry="2.35" fill="#f32b2b"/><ellipse cx="225.1" cy="352.2" rx="3.1" ry="2.35" fill="#f32b2b"/><ellipse cx="224.4" cy="396.2" rx="3.1" ry="2.35" fill="#f32b2b"/><ellipse cx="223.6" cy="440.3" rx="3.1" ry="2.35" fill="#f32b2b"/><ellipse cx="222.5" cy="386.6" rx="3.1" ry="2.35" fill="#f32b2b"/><ellipse cx="221.8" cy="430.7" rx="3.1" ry="2.35" fill="#f32b2b"/><ellipse cx="221.1" cy="474.7" rx="3.1" ry="2.35" fill="#f32b2b"/><ellipse cx="220.7" cy="377.0" rx="3.1" ry="2.35" fill="#f32b2b"/><ellipse cx="220.0" cy="421.0" rx="3.1" ry="2.35" fill="#f32b2b"/><ellipse cx="219.2" cy="465.1" rx="3.1" ry="2.35" fill="#f32b2b"/><ellipse cx="218.8" cy="367.4" rx="3.1" ry="2.35" fill="#f32b2b"/><ellipse cx="218.1" cy="411.4" rx="3.1" ry="2.35" fill="#f32b2b"/><ellipse cx="217.4" cy="455.5" rx="3.1" ry="2.35" fill="#f32b2b"/><ellipse cx="217.0" cy="357.8" rx="3.1" ry="2.35" fill="#f32b2b"/><ellipse cx="216.2" cy="401.8" rx="3.1" ry="2.35" fill="#f32b2b"/><ellipse cx="215.5" cy="445.8" rx="3.1" ry="2.35" fill="#f32b2b"/><ellipse cx="214.4" cy="392.2" rx="3.1" ry="2.35" fill="#f32b2b"/><ellipse cx="213.7" cy="436.2" rx="3.1" ry="2.35" fill="#f32b2b"/><ellipse cx="212.5" cy="382.6" rx="3.1" ry="2.35" fill="#f32b2b"/><ellipse cx="211.8" cy="426.6" rx="3.1" ry="2.35" fill="#f32b2b"/><ellipse cx="211.1" cy="470.6" rx="3.1" ry="2.35" fill="#f32b2b"/><ellipse cx="210.7" cy="372.9" rx="3.1" ry="2.35" fill="#f32b2b"/><ellipse cx="210.0" cy="417.0" rx="3.1" ry="2.35" fill="#f32b2b"/><ellipse cx="208.9" cy="363.3" rx="3.1" ry="2.35" fill="#f32b2b"/><ellipse cx="208.1" cy="407.4" rx="3.1" ry="2.35" fill="#f32b2b"/><ellipse cx="206.3" cy="397.7" rx="3.1" ry="2.35" fill="#f32b2b"/><ellipse cx="406.2" cy="437.6" rx="3.1" ry="2.35" fill="#f32b2b"/><ellipse cx="405.0" cy="379.6" rx="3.1" ry="2.35" fill="#f32b2b"/><ellipse cx="404.2" cy="427.2" rx="3.1" ry="2.35" fill="#f32b2b"/><ellipse cx="403.0" cy="369.2" rx="3.1" ry="2.35" fill="#f32b2b"/><ellipse cx="402.2" cy="416.8" rx="3.1" ry="2.35" fill="#f32b2b"/><ellipse cx="401.4" cy="464.4" rx="3.1" ry="2.35" fill="#f32b2b"/><ellipse cx="401.0" cy="358.8" rx="3.1" ry="2.35" fill="#f32b2b"/><ellipse cx="400.2" cy="406.4" rx="3.1" ry="2.35" fill="#f32b2b"/><ellipse cx="399.4" cy="454.0" rx="3.1" ry="2.35" fill="#f32b2b"/><ellipse cx="399.0" cy="348.4" rx="3.1" ry="2.35" fill="#f32b2b"/><ellipse cx="398.2" cy="396.0" rx="3.1" ry="2.35" fill="#f32b2b"/><ellipse cx="397.4" cy="443.6" rx="3.1" ry="2.35" fill="#f32b2b"/><ellipse cx="397.0" cy="338.0" rx="3.1" ry="2.35" fill="#f32b2b"/><ellipse cx="396.2" cy="385.6" rx="3.1" ry="2.35" fill="#f32b2b"/><ellipse cx="395.4" cy="433.2" rx="3.1" ry="2.35" fill="#f32b2b"/><ellipse cx="394.2" cy="375.2" rx="3.1" ry="2.35" fill="#f32b2b"/><ellipse cx="393.4" cy="422.8" rx="3.1" ry="2.35" fill="#f32b2b"/><ellipse cx="392.6" cy="470.4" rx="3.1" ry="2.35" fill="#f32b2b"/><ellipse cx="392.2" cy="364.8" rx="3.1" ry="2.35" fill="#f32b2b"/><ellipse cx="391.4" cy="412.4" rx="3.1" ry="2.35" fill="#f32b2b"/><ellipse cx="390.6" cy="460.0" rx="3.1" ry="2.35" fill="#f32b2b"/><ellipse cx="390.2" cy="354.4" rx="3.1" ry="2.35" fill="#f32b2b"/><ellipse cx="389.4" cy="402.0" rx="3.1" ry="2.35" fill="#f32b2b"/><ellipse cx="388.6" cy="449.6" rx="3.1" ry="2.35" fill="#f32b2b"/><ellipse cx="388.2" cy="344.0" rx="3.1" ry="2.35" fill="#f32b2b"/><ellipse cx="387.4" cy="391.6" rx="3.1" ry="2.35" fill="#f32b2b"/><ellipse cx="386.6" cy="439.2" rx="3.1" ry="2.35" fill="#f32b2b"/><ellipse cx="386.2" cy="333.6" rx="3.1" ry="2.35" fill="#f32b2b"/><ellipse cx="385.4" cy="381.2" rx="3.1" ry="2.35" fill="#f32b2b"/><ellipse cx="384.6" cy="428.8" rx="3.1" ry="2.35" fill="#f32b2b"/><ellipse cx="383.8" cy="476.4" rx="3.1" ry="2.35" fill="#f32b2b"/><ellipse cx="383.4" cy="370.8" rx="3.1" ry="2.35" fill="#f32b2b"/><ellipse cx="382.6" cy="418.4" rx="3.1" ry="2.35" fill="#f32b2b"/><ellipse cx="381.8" cy="466.0" rx="3.1" ry="2.35" fill="#f32b2b"/><ellipse cx="381.4" cy="360.4" rx="3.1" ry="2.35" fill="#f32b2b"/><ellipse cx="380.6" cy="408.0" rx="3.1" ry="2.35" fill="#f32b2b"/><ellipse cx="379.8" cy="455.6" rx="3.1" ry="2.35" fill="#f32b2b"/><ellipse cx="379.4" cy="350.0" rx="3.1" ry="2.35" fill="#f32b2b"/><ellipse cx="378.6" cy="397.6" rx="3.1" ry="2.35" fill="#f32b2b"/><ellipse cx="377.8" cy="445.2" rx="3.1" ry="2.35" fill="#f32b2b"/><ellipse cx="377.4" cy="339.6" rx="3.1" ry="2.35" fill="#f32b2b"/><ellipse cx="376.6" cy="387.2" rx="3.1" ry="2.35" fill="#f32b2b"/><ellipse cx="375.8" cy="434.8" rx="3.1" ry="2.35" fill="#f32b2b"/><ellipse cx="375.4" cy="329.2" rx="3.1" ry="2.35" fill="#f32b2b"/><ellipse cx="375.0" cy="482.4" rx="3.1" ry="2.35" fill="#f32b2b"/><ellipse cx="374.6" cy="376.8" rx="3.1" ry="2.35" fill="#f32b2b"/><ellipse cx="373.8" cy="424.4" rx="3.1" ry="2.35" fill="#f32b2b"/><ellipse cx="373.0" cy="472.0" rx="3.1" ry="2.35" fill="#f32b2b"/><ellipse cx="372.6" cy="366.4" rx="3.1" ry="2.35" fill="#f32b2b"/><ellipse cx="371.8" cy="414.0" rx="3.1" ry="2.35" fill="#f32b2b"/><ellipse cx="371.0" cy="461.6" rx="3.1" ry="2.35" fill="#f32b2b"/><ellipse cx="370.6" cy="356.0" rx="3.1" ry="2.35" fill="#f32b2b"/><ellipse cx="369.8" cy="403.6" rx="3.1" ry="2.35" fill="#f32b2b"/><ellipse cx="369.0" cy="451.2" rx="3.1" ry="2.35" fill="#f32b2b"/><ellipse cx="368.6" cy="345.6" rx="3.1" ry="2.35" fill="#f32b2b"/><ellipse cx="367.8" cy="393.2" rx="3.1" ry="2.35" fill="#f32b2b"/><ellipse cx="367.0" cy="440.8" rx="3.1" ry="2.35" fill="#f32b2b"/><ellipse cx="366.6" cy="335.2" rx="3.1" ry="2.35" fill="#f32b2b"/><ellipse cx="366.2" cy="488.4" rx="3.1" ry="2.35" fill="#f32b2b"/><ellipse cx="365.8" cy="382.8" rx="3.1" ry="2.35" fill="#f32b2b"/><ellipse cx="365.0" cy="430.4" rx="3.1" ry="2.35" fill="#f32b2b"/><ellipse cx="364.6" cy="324.8" rx="3.1" ry="2.35" fill="#f32b2b"/><ellipse cx="364.2" cy="478.0" rx="3.1" ry="2.35" fill="#f32b2b"/><ellipse cx="363.8" cy="372.4" rx="3.1" ry="2.35" fill="#f32b2b"/><ellipse cx="363.0" cy="420.0" rx="3.1" ry="2.35" fill="#f32b2b"/><ellipse cx="362.2" cy="467.6" rx="3.1" ry="2.35" fill="#f32b2b"/><ellipse cx="361.8" cy="362.0" rx="3.1" ry="2.35" fill="#f32b2b"/><ellipse cx="361.0" cy="409.6" rx="3.1" ry="2.35" fill="#f32b2b"/><ellipse cx="360.2" cy="457.2" rx="3.1" ry="2.35" fill="#f32b2b"/><ellipse cx="359.8" cy="351.6" rx="3.1" ry="2.35" fill="#f32b2b"/><ellipse cx="359.0" cy="399.2" rx="3.1" ry="2.35" fill="#f32b2b"/><ellipse cx="358.2" cy="446.8" rx="3.1" ry="2.35" fill="#f32b2b"/><ellipse cx="357.8" cy="341.2" rx="3.1" ry="2.35" fill="#f32b2b"/><ellipse cx="357.4" cy="494.4" rx="3.1" ry="2.35" fill="#f32b2b"/><ellipse cx="357.0" cy="388.8" rx="3.1" ry="2.35" fill="#f32b2b"/><ellipse cx="356.2" cy="436.4" rx="3.1" ry="2.35" fill="#f32b2b"/><ellipse cx="355.8" cy="330.8" rx="3.1" ry="2.35" fill="#f32b2b"/><ellipse cx="355.4" cy="484.0" rx="3.1" ry="2.35" fill="#f32b2b"/><ellipse cx="355.0" cy="378.4" rx="3.1" ry="2.35" fill="#f32b2b"/><ellipse cx="354.2" cy="426.0" rx="3.1" ry="2.35" fill="#f32b2b"/><ellipse cx="353.8" cy="320.4" rx="3.1" ry="2.35" fill="#f32b2b"/><ellipse cx="353.4" cy="473.6" rx="3.1" ry="2.35" fill="#f32b2b"/><ellipse cx="353.0" cy="368.0" rx="3.1" ry="2.35" fill="#f32b2b"/><ellipse cx="352.2" cy="415.6" rx="3.1" ry="2.35" fill="#f32b2b"/><ellipse cx="351.4" cy="463.2" rx="3.1" ry="2.35" fill="#f32b2b"/><ellipse cx="351.0" cy="357.6" rx="3.1" ry="2.35" fill="#f32b2b"/><ellipse cx="350.2" cy="405.2" rx="3.1" ry="2.35" fill="#f32b2b"/><ellipse cx="349.4" cy="452.8" rx="3.1" ry="2.35" fill="#f32b2b"/><ellipse cx="349.0" cy="347.2" rx="3.1" ry="2.35" fill="#f32b2b"/><ellipse cx="348.6" cy="500.4" rx="3.1" ry="2.35" fill="#f32b2b"/><ellipse cx="348.2" cy="394.8" rx="3.1" ry="2.35" fill="#f32b2b"/><ellipse cx="347.4" cy="442.4" rx="3.1" ry="2.35" fill="#f32b2b"/><ellipse cx="347.0" cy="336.8" rx="3.1" ry="2.35" fill="#f32b2b"/><ellipse cx="346.6" cy="490.0" rx="3.1" ry="2.35" fill="#f32b2b"/><ellipse cx="346.2" cy="384.4" rx="3.1" ry="2.35" fill="#f32b2b"/><ellipse cx="345.4" cy="432.0" rx="3.1" ry="2.35" fill="#f32b2b"/><ellipse cx="345.0" cy="326.4" rx="3.1" ry="2.35" fill="#f32b2b"/><ellipse cx="344.6" cy="479.6" rx="3.1" ry="2.35" fill="#f32b2b"/><ellipse cx="344.2" cy="374.0" rx="3.1" ry="2.35" fill="#f32b2b"/><ellipse cx="343.4" cy="421.6" rx="3.1" ry="2.35" fill="#f32b2b"/><ellipse cx="343.0" cy="316.0" rx="3.1" ry="2.35" fill="#f32b2b"/><ellipse cx="342.6" cy="469.2" rx="3.1" ry="2.35" fill="#f32b2b"/><ellipse cx="342.2" cy="363.6" rx="3.1" ry="2.35" fill="#f32b2b"/><ellipse cx="341.4" cy="411.2" rx="3.1" ry="2.35" fill="#f32b2b"/><ellipse cx="340.6" cy="458.8" rx="3.1" ry="2.35" fill="#f32b2b"/><ellipse cx="340.2" cy="353.2" rx="3.1" ry="2.35" fill="#f32b2b"/><ellipse cx="339.8" cy="506.4" rx="3.1" ry="2.35" fill="#f32b2b"/><ellipse cx="339.4" cy="400.8" rx="3.1" ry="2.35" fill="#f32b2b"/><ellipse cx="338.6" cy="448.4" rx="3.1" ry="2.35" fill="#f32b2b"/><ellipse cx="338.2" cy="342.8" rx="3.1" ry="2.35" fill="#f32b2b"/><ellipse cx="337.8" cy="496.0" rx="3.1" ry="2.35" fill="#f32b2b"/><ellipse cx="337.4" cy="390.4" rx="3.1" ry="2.35" fill="#f32b2b"/><ellipse cx="336.6" cy="438.0" rx="3.1" ry="2.35" fill="#f32b2b"/><ellipse cx="336.2" cy="332.4" rx="3.1" ry="2.35" fill="#f32b2b"/><ellipse cx="335.8" cy="485.6" rx="3.1" ry="2.35" fill="#f32b2b"/><ellipse cx="335.4" cy="380.0" rx="3.1" ry="2.35" fill="#f32b2b"/><ellipse cx="334.6" cy="427.6" rx="3.1" ry="2.35" fill="#f32b2b"/><ellipse cx="334.2" cy="322.0" rx="3.1" ry="2.35" fill="#f32b2b"/><ellipse cx="333.8" cy="475.2" rx="3.1" ry="2.35" fill="#f32b2b"/><ellipse cx="333.4" cy="369.6" rx="3.1" ry="2.35" fill="#f32b2b"/><ellipse cx="332.6" cy="417.2" rx="3.1" ry="2.35" fill="#f32b2b"/><ellipse cx="332.2" cy="311.6" rx="3.1" ry="2.35" fill="#f32b2b"/><ellipse cx="331.8" cy="464.8" rx="3.1" ry="2.35" fill="#f32b2b"/><ellipse cx="331.4" cy="359.2" rx="3.1" ry="2.35" fill="#f32b2b"/><ellipse cx="330.6" cy="406.8" rx="3.1" ry="2.35" fill="#f32b2b"/><ellipse cx="329.8" cy="454.4" rx="3.1" ry="2.35" fill="#f32b2b"/><ellipse cx="329.4" cy="348.8" rx="3.1" ry="2.35" fill="#f32b2b"/><ellipse cx="329.0" cy="502.0" rx="3.1" ry="2.35" fill="#f32b2b"/><ellipse cx="328.6" cy="396.4" rx="3.1" ry="2.35" fill="#f32b2b"/><ellipse cx="327.8" cy="444.0" rx="3.1" ry="2.35" fill="#f32b2b"/><ellipse cx="327.4" cy="338.4" rx="3.1" ry="2.35" fill="#f32b2b"/><ellipse cx="327.0" cy="491.6" rx="3.1" ry="2.35" fill="#f32b2b"/><ellipse cx="326.6" cy="386.0" rx="3.1" ry="2.35" fill="#f32b2b"/><ellipse cx="325.8" cy="433.6" rx="3.1" ry="2.35" fill="#f32b2b"/><ellipse cx="325.4" cy="328.0" rx="3.1" ry="2.35" fill="#f32b2b"/><ellipse cx="325.0" cy="481.2" rx="3.1" ry="2.35" fill="#f32b2b"/><ellipse cx="324.6" cy="375.6" rx="3.1" ry="2.35" fill="#f32b2b"/><ellipse cx="323.8" cy="423.2" rx="3.1" ry="2.35" fill="#f32b2b"/><ellipse cx="323.4" cy="317.6" rx="3.1" ry="2.35" fill="#f32b2b"/><ellipse cx="323.0" cy="470.8" rx="3.1" ry="2.35" fill="#f32b2b"/><ellipse cx="322.6" cy="365.2" rx="3.1" ry="2.35" fill="#f32b2b"/><ellipse cx="321.8" cy="412.8" rx="3.1" ry="2.35" fill="#f32b2b"/><ellipse cx="321.4" cy="307.2" rx="3.1" ry="2.35" fill="#f32b2b"/><ellipse cx="321.0" cy="460.4" rx="3.1" ry="2.35" fill="#f32b2b"/><ellipse cx="320.6" cy="354.8" rx="3.1" ry="2.35" fill="#f32b2b"/><ellipse cx="320.2" cy="508.0" rx="3.1" ry="2.35" fill="#f32b2b"/><ellipse cx="319.8" cy="402.4" rx="3.1" ry="2.35" fill="#f32b2b"/><ellipse cx="319.0" cy="450.0" rx="3.1" ry="2.35" fill="#f32b2b"/><ellipse cx="318.6" cy="344.4" rx="3.1" ry="2.35" fill="#f32b2b"/><ellipse cx="318.2" cy="497.6" rx="3.1" ry="2.35" fill="#f32b2b"/><ellipse cx="317.8" cy="392.0" rx="3.1" ry="2.35" fill="#f32b2b"/><ellipse cx="317.0" cy="439.6" rx="3.1" ry="2.35" fill="#f32b2b"/><ellipse cx="316.6" cy="334.0" rx="3.1" ry="2.35" fill="#f32b2b"/><ellipse cx="316.2" cy="487.2" rx="3.1" ry="2.35" fill="#f32b2b"/><ellipse cx="315.8" cy="381.6" rx="3.1" ry="2.35" fill="#f32b2b"/><ellipse cx="315.0" cy="429.2" rx="3.1" ry="2.35" fill="#f32b2b"/><ellipse cx="314.6" cy="323.6" rx="3.1" ry="2.35" fill="#f32b2b"/><ellipse cx="314.2" cy="476.8" rx="3.1" ry="2.35" fill="#f32b2b"/><ellipse cx="313.8" cy="371.2" rx="3.1" ry="2.35" fill="#f32b2b"/><ellipse cx="313.0" cy="418.8" rx="3.1" ry="2.35" fill="#f32b2b"/><ellipse cx="312.6" cy="313.2" rx="3.1" ry="2.35" fill="#f32b2b"/><ellipse cx="312.2" cy="466.4" rx="3.1" ry="2.35" fill="#f32b2b"/><ellipse cx="311.8" cy="360.8" rx="3.1" ry="2.35" fill="#f32b2b"/><ellipse cx="311.0" cy="408.4" rx="3.1" ry="2.35" fill="#f32b2b"/><ellipse cx="310.6" cy="302.8" rx="3.1" ry="2.35" fill="#f32b2b"/><ellipse cx="310.2" cy="456.0" rx="3.1" ry="2.35" fill="#f32b2b"/><ellipse cx="309.8" cy="350.4" rx="3.1" ry="2.35" fill="#f32b2b"/><ellipse cx="309.4" cy="503.6" rx="3.1" ry="2.35" fill="#f32b2b"/><ellipse cx="309.0" cy="398.0" rx="3.1" ry="2.35" fill="#f32b2b"/><ellipse cx="308.2" cy="445.6" rx="3.1" ry="2.35" fill="#f32b2b"/><ellipse cx="307.8" cy="340.0" rx="3.1" ry="2.35" fill="#f32b2b"/><ellipse cx="307.4" cy="493.2" rx="3.1" ry="2.35" fill="#f32b2b"/><ellipse cx="307.0" cy="387.6" rx="3.1" ry="2.35" fill="#f32b2b"/><ellipse cx="306.2" cy="435.2" rx="3.1" ry="2.35" fill="#f32b2b"/><ellipse cx="305.8" cy="329.6" rx="3.1" ry="2.35" fill="#f32b2b"/><ellipse cx="305.4" cy="482.8" rx="3.1" ry="2.35" fill="#f32b2b"/><ellipse cx="305.0" cy="377.2" rx="3.1" ry="2.35" fill="#f32b2b"/><ellipse cx="304.2" cy="424.8" rx="3.1" ry="2.35" fill="#f32b2b"/><ellipse cx="303.8" cy="319.2" rx="3.1" ry="2.35" fill="#f32b2b"/><ellipse cx="303.4" cy="472.4" rx="3.1" ry="2.35" fill="#f32b2b"/><ellipse cx="303.0" cy="366.8" rx="3.1" ry="2.35" fill="#f32b2b"/><ellipse cx="302.2" cy="414.4" rx="3.1" ry="2.35" fill="#f32b2b"/><ellipse cx="301.8" cy="308.8" rx="3.1" ry="2.35" fill="#f32b2b"/><ellipse cx="301.4" cy="462.0" rx="3.1" ry="2.35" fill="#f32b2b"/><ellipse cx="301.0" cy="356.4" rx="3.1" ry="2.35" fill="#f32b2b"/><ellipse cx="300.6" cy="509.6" rx="3.1" ry="2.35" fill="#f32b2b"/><ellipse cx="300.2" cy="404.0" rx="3.1" ry="2.35" fill="#f32b2b"/><ellipse cx="299.8" cy="298.4" rx="3.1" ry="2.35" fill="#f32b2b"/><ellipse cx="299.4" cy="451.6" rx="3.1" ry="2.35" fill="#f32b2b"/><ellipse cx="299.0" cy="346.0" rx="3.1" ry="2.35" fill="#f32b2b"/><ellipse cx="298.6" cy="499.2" rx="3.1" ry="2.35" fill="#f32b2b"/><ellipse cx="298.2" cy="393.6" rx="3.1" ry="2.35" fill="#f32b2b"/><ellipse cx="297.4" cy="441.2" rx="3.1" ry="2.35" fill="#f32b2b"/><ellipse cx="297.0" cy="335.6" rx="3.1" ry="2.35" fill="#f32b2b"/><ellipse cx="296.6" cy="488.8" rx="3.1" ry="2.35" fill="#f32b2b"/><ellipse cx="296.2" cy="383.2" rx="3.1" ry="2.35" fill="#f32b2b"/><ellipse cx="295.4" cy="430.8" rx="3.1" ry="2.35" fill="#f32b2b"/><ellipse cx="295.0" cy="325.2" rx="3.1" ry="2.35" fill="#f32b2b"/><ellipse cx="294.6" cy="478.4" rx="3.1" ry="2.35" fill="#f32b2b"/><ellipse cx="294.2" cy="372.8" rx="3.1" ry="2.35" fill="#f32b2b"/><ellipse cx="293.4" cy="420.4" rx="3.1" ry="2.35" fill="#f32b2b"/><ellipse cx="293.0" cy="314.8" rx="3.1" ry="2.35" fill="#f32b2b"/><ellipse cx="292.6" cy="468.0" rx="3.1" ry="2.35" fill="#f32b2b"/><ellipse cx="292.2" cy="362.4" rx="3.1" ry="2.35" fill="#f32b2b"/><ellipse cx="291.4" cy="410.0" rx="3.1" ry="2.35" fill="#f32b2b"/><ellipse cx="291.0" cy="304.4" rx="3.1" ry="2.35" fill="#f32b2b"/><ellipse cx="290.6" cy="457.6" rx="3.1" ry="2.35" fill="#f32b2b"/><ellipse cx="290.2" cy="352.0" rx="3.1" ry="2.35" fill="#f32b2b"/><ellipse cx="289.8" cy="505.2" rx="3.1" ry="2.35" fill="#f32b2b"/><ellipse cx="289.4" cy="399.6" rx="3.1" ry="2.35" fill="#f32b2b"/><ellipse cx="289.0" cy="294.0" rx="3.1" ry="2.35" fill="#f32b2b"/><ellipse cx="288.6" cy="447.2" rx="3.1" ry="2.35" fill="#f32b2b"/><ellipse cx="288.2" cy="341.6" rx="3.1" ry="2.35" fill="#f32b2b"/><ellipse cx="287.8" cy="494.8" rx="3.1" ry="2.35" fill="#f32b2b"/><ellipse cx="287.4" cy="389.2" rx="3.1" ry="2.35" fill="#f32b2b"/><ellipse cx="286.6" cy="436.8" rx="3.1" ry="2.35" fill="#f32b2b"/><ellipse cx="286.2" cy="331.2" rx="3.1" ry="2.35" fill="#f32b2b"/><ellipse cx="285.8" cy="484.4" rx="3.1" ry="2.35" fill="#f32b2b"/><ellipse cx="285.4" cy="378.8" rx="3.1" ry="2.35" fill="#f32b2b"/><ellipse cx="284.6" cy="426.4" rx="3.1" ry="2.35" fill="#f32b2b"/><ellipse cx="284.2" cy="320.8" rx="3.1" ry="2.35" fill="#f32b2b"/><ellipse cx="283.8" cy="474.0" rx="3.1" ry="2.35" fill="#f32b2b"/><ellipse cx="283.4" cy="368.4" rx="3.1" ry="2.35" fill="#f32b2b"/><ellipse cx="282.6" cy="416.0" rx="3.1" ry="2.35" fill="#f32b2b"/><ellipse cx="282.2" cy="310.4" rx="3.1" ry="2.35" fill="#f32b2b"/><ellipse cx="281.8" cy="463.6" rx="3.1" ry="2.35" fill="#f32b2b"/><ellipse cx="281.4" cy="358.0" rx="3.1" ry="2.35" fill="#f32b2b"/><ellipse cx="281.0" cy="511.2" rx="3.1" ry="2.35" fill="#f32b2b"/><ellipse cx="280.6" cy="405.6" rx="3.1" ry="2.35" fill="#f32b2b"/><ellipse cx="280.2" cy="300.0" rx="3.1" ry="2.35" fill="#f32b2b"/><ellipse cx="279.8" cy="453.2" rx="3.1" ry="2.35" fill="#f32b2b"/><ellipse cx="279.4" cy="347.6" rx="3.1" ry="2.35" fill="#f32b2b"/><ellipse cx="279.0" cy="500.8" rx="3.1" ry="2.35" fill="#f32b2b"/><ellipse cx="278.6" cy="395.2" rx="3.1" ry="2.35" fill="#f32b2b"/><ellipse cx="277.8" cy="442.8" rx="3.1" ry="2.35" fill="#f32b2b"/><ellipse cx="277.4" cy="337.2" rx="3.1" ry="2.35" fill="#f32b2b"/><ellipse cx="277.0" cy="490.4" rx="3.1" ry="2.35" fill="#f32b2b"/><ellipse cx="276.6" cy="384.8" rx="3.1" ry="2.35" fill="#f32b2b"/><ellipse cx="275.8" cy="432.4" rx="3.1" ry="2.35" fill="#f32b2b"/><ellipse cx="275.4" cy="326.8" rx="3.1" ry="2.35" fill="#f32b2b"/><ellipse cx="275.0" cy="480.0" rx="3.1" ry="2.35" fill="#f32b2b"/><ellipse cx="274.6" cy="374.4" rx="3.1" ry="2.35" fill="#f32b2b"/><ellipse cx="273.8" cy="422.0" rx="3.1" ry="2.35" fill="#f32b2b"/><ellipse cx="273.4" cy="316.4" rx="3.1" ry="2.35" fill="#f32b2b"/><ellipse cx="273.0" cy="469.6" rx="3.1" ry="2.35" fill="#f32b2b"/><ellipse cx="272.6" cy="364.0" rx="3.1" ry="2.35" fill="#f32b2b"/><ellipse cx="271.8" cy="411.6" rx="3.1" ry="2.35" fill="#f32b2b"/><ellipse cx="271.4" cy="306.0" rx="3.1" ry="2.35" fill="#f32b2b"/><ellipse cx="271.0" cy="459.2" rx="3.1" ry="2.35" fill="#f32b2b"/><ellipse cx="270.6" cy="353.6" rx="3.1" ry="2.35" fill="#f32b2b"/><ellipse cx="270.2" cy="506.8" rx="3.1" ry="2.35" fill="#f32b2b"/><ellipse cx="269.8" cy="401.2" rx="3.1" ry="2.35" fill="#f32b2b"/><ellipse cx="269.0" cy="448.8" rx="3.1" ry="2.35" fill="#f32b2b"/><ellipse cx="268.6" cy="343.2" rx="3.1" ry="2.35" fill="#f32b2b"/><ellipse cx="268.2" cy="496.4" rx="3.1" ry="2.35" fill="#f32b2b"/><ellipse cx="267.8" cy="390.8" rx="3.1" ry="2.35" fill="#f32b2b"/><ellipse cx="267.0" cy="438.4" rx="3.1" ry="2.35" fill="#f32b2b"/><ellipse cx="266.6" cy="332.8" rx="3.1" ry="2.35" fill="#f32b2b"/><ellipse cx="266.2" cy="486.0" rx="3.1" ry="2.35" fill="#f32b2b"/><ellipse cx="265.8" cy="380.4" rx="3.1" ry="2.35" fill="#f32b2b"/><ellipse cx="265.0" cy="428.0" rx="3.1" ry="2.35" fill="#f32b2b"/><ellipse cx="264.6" cy="322.4" rx="3.1" ry="2.35" fill="#f32b2b"/><ellipse cx="264.2" cy="475.6" rx="3.1" ry="2.35" fill="#f32b2b"/><ellipse cx="263.8" cy="370.0" rx="3.1" ry="2.35" fill="#f32b2b"/><ellipse cx="263.0" cy="417.6" rx="3.1" ry="2.35" fill="#f32b2b"/><ellipse cx="262.6" cy="312.0" rx="3.1" ry="2.35" fill="#f32b2b"/><ellipse cx="262.2" cy="465.2" rx="3.1" ry="2.35" fill="#f32b2b"/><ellipse cx="261.8" cy="359.6" rx="3.1" ry="2.35" fill="#f32b2b"/><ellipse cx="261.0" cy="407.2" rx="3.1" ry="2.35" fill="#f32b2b"/><ellipse cx="260.2" cy="454.8" rx="3.1" ry="2.35" fill="#f32b2b"/><ellipse cx="259.8" cy="349.2" rx="3.1" ry="2.35" fill="#f32b2b"/><ellipse cx="259.4" cy="502.4" rx="3.1" ry="2.35" fill="#f32b2b"/><ellipse cx="259.0" cy="396.8" rx="3.1" ry="2.35" fill="#f32b2b"/><ellipse cx="258.2" cy="444.4" rx="3.1" ry="2.35" fill="#f32b2b"/><ellipse cx="257.8" cy="338.8" rx="3.1" ry="2.35" fill="#f32b2b"/><ellipse cx="257.4" cy="492.0" rx="3.1" ry="2.35" fill="#f32b2b"/><ellipse cx="257.0" cy="386.4" rx="3.1" ry="2.35" fill="#f32b2b"/><ellipse cx="256.2" cy="434.0" rx="3.1" ry="2.35" fill="#f32b2b"/><ellipse cx="255.8" cy="328.4" rx="3.1" ry="2.35" fill="#f32b2b"/><ellipse cx="255.4" cy="481.6" rx="3.1" ry="2.35" fill="#f32b2b"/><ellipse cx="255.0" cy="376.0" rx="3.1" ry="2.35" fill="#f32b2b"/><ellipse cx="254.2" cy="423.6" rx="3.1" ry="2.35" fill="#f32b2b"/><ellipse cx="253.8" cy="318.0" rx="3.1" ry="2.35" fill="#f32b2b"/><ellipse cx="253.4" cy="471.2" rx="3.1" ry="2.35" fill="#f32b2b"/><ellipse cx="253.0" cy="365.6" rx="3.1" ry="2.35" fill="#f32b2b"/><ellipse cx="252.2" cy="413.2" rx="3.1" ry="2.35" fill="#f32b2b"/><ellipse cx="251.4" cy="460.8" rx="3.1" ry="2.35" fill="#f32b2b"/><ellipse cx="251.0" cy="355.2" rx="3.1" ry="2.35" fill="#f32b2b"/><ellipse cx="250.2" cy="402.8" rx="3.1" ry="2.35" fill="#f32b2b"/><ellipse cx="249.4" cy="450.4" rx="3.1" ry="2.35" fill="#f32b2b"/><ellipse cx="249.0" cy="344.8" rx="3.1" ry="2.35" fill="#f32b2b"/><ellipse cx="248.6" cy="498.0" rx="3.1" ry="2.35" fill="#f32b2b"/><ellipse cx="248.2" cy="392.4" rx="3.1" ry="2.35" fill="#f32b2b"/><ellipse cx="247.4" cy="440.0" rx="3.1" ry="2.35" fill="#f32b2b"/><ellipse cx="247.0" cy="334.4" rx="3.1" ry="2.35" fill="#f32b2b"/><ellipse cx="246.6" cy="487.6" rx="3.1" ry="2.35" fill="#f32b2b"/><ellipse cx="246.2" cy="382.0" rx="3.1" ry="2.35" fill="#f32b2b"/><ellipse cx="245.4" cy="429.6" rx="3.1" ry="2.35" fill="#f32b2b"/><ellipse cx="245.0" cy="324.0" rx="3.1" ry="2.35" fill="#f32b2b"/><ellipse cx="244.6" cy="477.2" rx="3.1" ry="2.35" fill="#f32b2b"/><ellipse cx="244.2" cy="371.6" rx="3.1" ry="2.35" fill="#f32b2b"/><ellipse cx="243.4" cy="419.2" rx="3.1" ry="2.35" fill="#f32b2b"/><ellipse cx="242.6" cy="466.8" rx="3.1" ry="2.35" fill="#f32b2b"/><ellipse cx="242.2" cy="361.2" rx="3.1" ry="2.35" fill="#f32b2b"/><ellipse cx="241.4" cy="408.8" rx="3.1" ry="2.35" fill="#f32b2b"/><ellipse cx="240.6" cy="456.4" rx="3.1" ry="2.35" fill="#f32b2b"/><ellipse cx="240.2" cy="350.8" rx="3.1" ry="2.35" fill="#f32b2b"/><ellipse cx="239.4" cy="398.4" rx="3.1" ry="2.35" fill="#f32b2b"/><ellipse cx="238.6" cy="446.0" rx="3.1" ry="2.35" fill="#f32b2b"/><ellipse cx="238.2" cy="340.4" rx="3.1" ry="2.35" fill="#f32b2b"/><ellipse cx="237.8" cy="493.6" rx="3.1" ry="2.35" fill="#f32b2b"/><ellipse cx="237.4" cy="388.0" rx="3.1" ry="2.35" fill="#f32b2b"/><ellipse cx="236.6" cy="435.6" rx="3.1" ry="2.35" fill="#f32b2b"/><ellipse cx="236.2" cy="330.0" rx="3.1" ry="2.35" fill="#f32b2b"/><ellipse cx="235.8" cy="483.2" rx="3.1" ry="2.35" fill="#f32b2b"/><ellipse cx="235.4" cy="377.6" rx="3.1" ry="2.35" fill="#f32b2b"/><ellipse cx="234.6" cy="425.2" rx="3.1" ry="2.35" fill="#f32b2b"/><ellipse cx="233.8" cy="472.8" rx="3.1" ry="2.35" fill="#f32b2b"/><ellipse cx="233.4" cy="367.2" rx="3.1" ry="2.35" fill="#f32b2b"/><ellipse cx="232.6" cy="414.8" rx="3.1" ry="2.35" fill="#f32b2b"/><ellipse cx="231.8" cy="462.4" rx="3.1" ry="2.35" fill="#f32b2b"/><ellipse cx="231.4" cy="356.8" rx="3.1" ry="2.35" fill="#f32b2b"/><ellipse cx="230.6" cy="404.4" rx="3.1" ry="2.35" fill="#f32b2b"/><ellipse cx="229.8" cy="452.0" rx="3.1" ry="2.35" fill="#f32b2b"/><ellipse cx="229.4" cy="346.4" rx="3.1" ry="2.35" fill="#f32b2b"/><ellipse cx="228.6" cy="394.0" rx="3.1" ry="2.35" fill="#f32b2b"/><ellipse cx="227.8" cy="441.6" rx="3.1" ry="2.35" fill="#f32b2b"/><ellipse cx="227.4" cy="336.0" rx="3.1" ry="2.35" fill="#f32b2b"/><ellipse cx="227.0" cy="489.2" rx="3.1" ry="2.35" fill="#f32b2b"/><ellipse cx="226.6" cy="383.6" rx="3.1" ry="2.35" fill="#f32b2b"/><ellipse cx="225.8" cy="431.2" rx="3.1" ry="2.35" fill="#f32b2b"/><ellipse cx="225.0" cy="478.8" rx="3.1" ry="2.35" fill="#f32b2b"/><ellipse cx="224.6" cy="373.2" rx="3.1" ry="2.35" fill="#f32b2b"/><ellipse cx="223.8" cy="420.8" rx="3.1" ry="2.35" fill="#f32b2b"/><ellipse cx="223.0" cy="468.4" rx="3.1" ry="2.35" fill="#f32b2b"/><ellipse cx="222.6" cy="362.8" rx="3.1" ry="2.35" fill="#f32b2b"/><ellipse cx="221.8" cy="410.4" rx="3.1" ry="2.35" fill="#f32b2b"/><ellipse cx="221.0" cy="458.0" rx="3.1" ry="2.35" fill="#f32b2b"/><ellipse cx="220.6" cy="352.4" rx="3.1" ry="2.35" fill="#f32b2b"/><ellipse cx="219.8" cy="400.0" rx="3.1" ry="2.35" fill="#f32b2b"/><ellipse cx="219.0" cy="447.6" rx="3.1" ry="2.35" fill="#f32b2b"/><ellipse cx="218.6" cy="342.0" rx="3.1" ry="2.35" fill="#f32b2b"/><ellipse cx="217.8" cy="389.6" rx="3.1" ry="2.35" fill="#f32b2b"/><ellipse cx="217.0" cy="437.2" rx="3.1" ry="2.35" fill="#f32b2b"/><ellipse cx="216.2" cy="484.8" rx="3.1" ry="2.35" fill="#f32b2b"/><ellipse cx="215.8" cy="379.2" rx="3.1" ry="2.35" fill="#f32b2b"/><ellipse cx="215.0" cy="426.8" rx="3.1" ry="2.35" fill="#f32b2b"/><ellipse cx="214.2" cy="474.4" rx="3.1" ry="2.35" fill="#f32b2b"/><ellipse cx="213.8" cy="368.8" rx="3.1" ry="2.35" fill="#f32b2b"/><ellipse cx="213.0" cy="416.4" rx="3.1" ry="2.35" fill="#f32b2b"/><ellipse cx="212.2" cy="464.0" rx="3.1" ry="2.35" fill="#f32b2b"/><ellipse cx="211.8" cy="358.4" rx="3.1" ry="2.35" fill="#f32b2b"/><ellipse cx="211.0" cy="406.0" rx="3.1" ry="2.35" fill="#f32b2b"/><ellipse cx="210.2" cy="453.6" rx="3.1" ry="2.35" fill="#f32b2b"/><ellipse cx="209.8" cy="348.0" rx="3.1" ry="2.35" fill="#f32b2b"/><ellipse cx="209.0" cy="395.6" rx="3.1" ry="2.35" fill="#f32b2b"/><ellipse cx="208.2" cy="443.2" rx="3.1" ry="2.35" fill="#f32b2b"/><ellipse cx="207.0" cy="385.2" rx="3.1" ry="2.35" fill="#f32b2b"/><ellipse cx="206.2" cy="432.8" rx="3.1" ry="2.35" fill="#f32b2b"/><ellipse cx="205.4" cy="480.4" rx="3.1" ry="2.35" fill="#f32b2b"/><ellipse cx="205.0" cy="374.8" rx="3.1" ry="2.35" fill="#f32b2b"/><ellipse cx="204.2" cy="422.4" rx="3.1" ry="2.35" fill="#f32b2b"/><ellipse cx="203.0" cy="364.4" rx="3.1" ry="2.35" fill="#f32b2b"/><ellipse cx="202.2" cy="412.0" rx="3.1" ry="2.35" fill="#f32b2b"/><ellipse cx="201.0" cy="354.0" rx="3.1" ry="2.35" fill="#f32b2b"/><ellipse cx="200.2" cy="401.6" rx="3.1" ry="2.35" fill="#f32b2b"/><ellipse cx="199" cy="357" rx="3" ry="2.5" fill="#3434dc"/><ellipse cx="202" cy="369" rx="3" ry="2.5" fill="#3434dc"/><polygon points="19.0,138.5 27.0,137.0 20.0,143.5" fill="#3a3ab0"/><ellipse cx="19.0" cy="141.5" rx="3.2" ry="2.7" fill="#3434dc"/><polygon points="32.6,134.8 40.6,133.3 33.6,139.8" fill="#3a3ab0"/><ellipse cx="32.6" cy="137.8" rx="3.2" ry="2.7" fill="#3434dc"/><polygon points="46.2,131.1 54.2,129.6 47.2,136.1" fill="#3a3ab0"/><ellipse cx="46.2" cy="134.1" rx="3.2" ry="2.7" fill="#3434dc"/><polygon points="59.9,127.7 67.9,126.2 60.9,132.7" fill="#3a3ab0"/><ellipse cx="59.9" cy="130.7" rx="3.2" ry="2.7" fill="#3434dc"/><polygon points="73.6,124.6 81.6,123.1 74.6,129.6" fill="#3a3ab0"/><ellipse cx="73.6" cy="127.6" rx="3.2" ry="2.7" fill="#3434dc"/><polygon points="87.4,121.4 95.4,119.9 88.4,126.4" fill="#3a3ab0"/><ellipse cx="87.4" cy="124.4" rx="3.2" ry="2.7" fill="#3434dc"/><polygon points="101.3,119.0 109.3,117.5 102.3,124.0" fill="#3a3ab0"/><ellipse cx="101.3" cy="122.0" rx="3.2" ry="2.7" fill="#3434dc"/><polygon points="115.2,116.7 123.2,115.2 116.2,121.7" fill="#3a3ab0"/><ellipse cx="115.2" cy="119.7" rx="3.2" ry="2.7" fill="#3434dc"/><polygon points="129.2,114.9 137.2,113.4 130.2,119.9" fill="#3a3ab0"/><ellipse cx="129.2" cy="117.9" rx="3.2" ry="2.7" fill="#3434dc"/><polygon points="143.2,113.7 151.2,112.2 144.2,118.7" fill="#3a3ab0"/><ellipse cx="143.2" cy="116.7" rx="3.2" ry="2.7" fill="#3434dc"/><polygon points="157.3,112.5 165.3,111.0 158.3,117.5" fill="#3a3ab0"/><ellipse cx="157.3" cy="115.5" rx="3.2" ry="2.7" fill="#3434dc"/><polygon points="171.4,111.6 179.4,110.1 172.4,116.6" fill="#3a3ab0"/><ellipse cx="171.4" cy="114.6" rx="3.2" ry="2.7" fill="#3434dc"/><polygon points="185.4,110.8 193.4,109.3 186.4,115.8" fill="#3a3ab0"/><ellipse cx="185.4" cy="113.8" rx="3.2" ry="2.7" fill="#3434dc"/><polygon points="199.5,110.5 207.5,109.0 200.5,115.5" fill="#3a3ab0"/><ellipse cx="199.5" cy="113.5" rx="3.2" ry="2.7" fill="#3434dc"/><polygon points="213.6,110.5 221.6,109.0 214.6,115.5" fill="#3a3ab0"/><ellipse cx="213.6" cy="113.5" rx="3.2" ry="2.7" fill="#3434dc"/><polygon points="227.7,110.8 235.7,109.3 228.7,115.8" fill="#3a3ab0"/><ellipse cx="227.7" cy="113.8" rx="3.2" ry="2.7" fill="#3434dc"/><polygon points="241.8,111.7 249.8,110.2 242.8,116.7" fill="#3a3ab0"/><ellipse cx="241.8" cy="114.7" rx="3.2" ry="2.7" fill="#3434dc"/><polygon points="255.9,112.6 263.9,111.1 256.9,117.6" fill="#3a3ab0"/><ellipse cx="255.9" cy="115.6" rx="3.2" ry="2.7" fill="#3434dc"/><polygon points="269.8,114.5 277.8,113.0 270.8,119.5" fill="#3a3ab0"/><ellipse cx="269.8" cy="117.5" rx="3.2" ry="2.7" fill="#3434dc"/><polygon points="283.8,116.5 291.8,115.0 284.8,121.5" fill="#3a3ab0"/><ellipse cx="283.8" cy="119.5" rx="3.2" ry="2.7" fill="#3434dc"/><polygon points="297.4,120.3 305.4,118.8 298.4,125.3" fill="#3a3ab0"/><ellipse cx="297.4" cy="123.3" rx="3.2" ry="2.7" fill="#3434dc"/><polygon points="310.9,124.3 318.9,122.8 311.9,129.3" fill="#3a3ab0"/><ellipse cx="310.9" cy="127.3" rx="3.2" ry="2.7" fill="#3434dc"/><polygon points="324.0,129.5 332.0,128.0 325.0,134.5" fill="#3a3ab0"/><ellipse cx="324.0" cy="132.5" rx="3.2" ry="2.7" fill="#3434dc"/><polygon points="331.7,138.4 337.2,131.4 336.7,140.4" fill="#7a4a2a"/><ellipse cx="333.7" cy="140.4" rx="3.3" ry="3.1" fill="#f47a30"/><polygon points="340.7,144.0 346.2,137.0 345.7,146.0" fill="#7a4a2a"/><ellipse cx="342.7" cy="146.0" rx="3.3" ry="3.1" fill="#f47a30"/><polygon points="349.0,150.0 354.5,143.0 354.0,152.0" fill="#7a4a2a"/><ellipse cx="351.0" cy="152.0" rx="3.3" ry="3.1" fill="#f47a30"/><polygon points="357.0,155.6 362.5,148.6 362.0,157.6" fill="#7a4a2a"/><ellipse cx="359.0" cy="157.6" rx="3.3" ry="3.1" fill="#f47a30"/><polygon points="363.8,162.8 369.3,155.8 368.8,164.8" fill="#7a4a2a"/><ellipse cx="365.8" cy="164.8" rx="3.3" ry="3.1" fill="#f47a30"/><polygon points="369.7,169.8 375.2,162.8 374.7,171.8" fill="#7a4a2a"/><ellipse cx="371.7" cy="171.8" rx="3.3" ry="3.1" fill="#f47a30"/><polygon points="375.4,177.0 380.9,170.0 380.4,179.0" fill="#7a4a2a"/><ellipse cx="377.4" cy="179.0" rx="3.3" ry="3.1" fill="#f47a30"/><polygon points="380.5,184.7 386.0,177.7 385.5,186.7" fill="#7a4a2a"/><ellipse cx="382.5" cy="186.7" rx="3.3" ry="3.1" fill="#f47a30"/><polygon points="384.4,193.7 389.9,186.7 389.4,195.7" fill="#7a4a2a"/><ellipse cx="386.4" cy="195.7" rx="3.3" ry="3.1" fill="#f47a30"/><polygon points="387.0,202.7 392.5,195.7 392.0,204.7" fill="#7a4a2a"/><ellipse cx="389.0" cy="204.7" rx="3.3" ry="3.1" fill="#f47a30"/><polygon points="389.0,213.0 394.5,206.0 394.0,215.0" fill="#7a4a2a"/><ellipse cx="391.0" cy="215.0" rx="3.3" ry="3.1" fill="#f47a30"/><polygon points="390.3,223.0 395.8,216.0 395.3,225.0" fill="#7a4a2a"/><ellipse cx="392.3" cy="225.0" rx="3.3" ry="3.1" fill="#f47a30"/><polygon points="391.0,234.8 396.5,227.8 396.0,236.8" fill="#7a4a2a"/><ellipse cx="393.0" cy="236.8" rx="3.3" ry="3.1" fill="#f47a30"/><polygon points="390.3,246.4 395.8,239.4 395.3,248.4" fill="#7a4a2a"/><ellipse cx="392.3" cy="248.4" rx="3.3" ry="3.1" fill="#f47a30"/><polygon points="388.7,259.0 394.2,252.0 393.7,261.0" fill="#7a4a2a"/><ellipse cx="390.7" cy="261.0" rx="3.3" ry="3.1" fill="#f47a30"/><polygon points="386.0,272.0 391.5,265.0 391.0,274.0" fill="#7a4a2a"/><ellipse cx="388.0" cy="274.0" rx="3.3" ry="3.1" fill="#f47a30"/><polygon points="383.0,285.0 388.5,278.0 388.0,287.0" fill="#7a4a2a"/><ellipse cx="385.0" cy="287.0" rx="3.3" ry="3.1" fill="#f47a30"/><polygon points="379.0,299.0 384.5,292.0 384.0,301.0" fill="#7a4a2a"/><ellipse cx="381.0" cy="301.0" rx="3.3" ry="3.1" fill="#f47a30"/><polygon points="373.5,314.0 379.0,307.0 378.5,316.0" fill="#7a4a2a"/><ellipse cx="375.5" cy="316.0" rx="3.3" ry="3.1" fill="#f47a30"/><polygon points="367.6,328.0 373.1,321.0 372.6,330.0" fill="#7a4a2a"/><ellipse cx="369.6" cy="330.0" rx="3.3" ry="3.1" fill="#f47a30"/><polygon points="360.7,344.8 366.2,337.8 365.7,346.8" fill="#7a4a2a"/><ellipse cx="362.7" cy="346.8" rx="3.3" ry="3.1" fill="#f47a30"/><polygon points="352.4,361.3 357.9,354.3 357.4,363.3" fill="#7a4a2a"/><ellipse cx="354.4" cy="363.3" rx="3.3" ry="3.1" fill="#f47a30"/><polygon points="343.5,377.8 349.0,370.8 348.5,379.8" fill="#7a4a2a"/><ellipse cx="345.5" cy="379.8" rx="3.3" ry="3.1" fill="#f47a30"/><polygon points="333.6,394.8 339.1,387.8 338.6,396.8" fill="#7a4a2a"/><ellipse cx="335.6" cy="396.8" rx="3.3" ry="3.1" fill="#f47a30"/><polygon points="322.6,412.6 328.1,405.6 327.6,414.6" fill="#7a4a2a"/><ellipse cx="324.6" cy="414.6" rx="3.3" ry="3.1" fill="#f47a30"/><polygon points="310.7,431.2 316.2,424.2 315.7,433.2" fill="#7a4a2a"/><ellipse cx="312.7" cy="433.2" rx="3.3" ry="3.1" fill="#f47a30"/><polygon points="298.0,449.0 303.5,442.0 303.0,451.0" fill="#7a4a2a"/><ellipse cx="300.0" cy="451.0" rx="3.3" ry="3.1" fill="#f47a30"/><polygon points="284.0,468.0 289.5,461.0 289.0,470.0" fill="#7a4a2a"/><ellipse cx="286.0" cy="470.0" rx="3.3" ry="3.1" fill="#f47a30"/><polygon points="269.0,488.0 274.5,481.0 274.0,490.0" fill="#7a4a2a"/><ellipse cx="271.0" cy="490.0" rx="3.3" ry="3.1" fill="#f47a30"/><polygon points="254.0,506.0 259.5,499.0 259.0,508.0" fill="#7a4a2a"/><ellipse cx="256.0" cy="508.0" rx="3.3" ry="3.1" fill="#f47a30"/><text x="-1.0" y="136.0" font-family="Liberation Serif" font-size="11" fill="#6b6010" textLength="21" lengthAdjust="spacingAndGlyphs">{51}</text><text x="12.6" y="132.3" font-family="Liberation Serif" font-size="11" fill="#6b6010" textLength="21" lengthAdjust="spacingAndGlyphs">{50}</text><text x="26.2" y="128.6" font-family="Liberation Serif" font-size="11" fill="#6b6010" textLength="21" lengthAdjust="spacingAndGlyphs">{49}</text><text x="39.9" y="125.2" font-family="Liberation Serif" font-size="11" fill="#6b6010" textLength="21" lengthAdjust="spacingAndGlyphs">{48}</text><text x="53.6" y="122.1" font-family="Liberation Serif" font-size="11" fill="#6b6010" textLength="21" lengthAdjust="spacingAndGlyphs">{47}</text><text x="67.4" y="118.9" font-family="Liberation Serif" font-size="11" fill="#6b6010" textLength="21" lengthAdjust="spacingAndGlyphs">{46}</text><text x="81.3" y="116.5" font-family="Liberation Serif" font-size="11" fill="#6b6010" textLength="21" lengthAdjust="spacingAndGlyphs">{45}</text><text x="95.2" y="114.2" font-family="Liberation Serif" font-size="11" fill="#6b6010" textLength="21" lengthAdjust="spacingAndGlyphs">{44}</text><text x="109.2" y="112.4" font-family="Liberation Serif" font-size="11" fill="#6b6010" textLength="21" lengthAdjust="spacingAndGlyphs">{43}</text><text x="123.2" y="111.2" font-family="Liberation Serif" font-size="11" fill="#6b6010" textLength="21" lengthAdjust="spacingAndGlyphs">{42}</text><text x="137.3" y="110.0" font-family="Liberation Serif" font-size="11" fill="#6b6010" textLength="21" lengthAdjust="spacingAndGlyphs">{41}</text><text x="151.4" y="109.1" font-family="Liberation Serif" font-size="11" fill="#6b6010" textLength="21" lengthAdjust="spacingAndGlyphs">{40}</text><text x="165.4" y="108.3" font-family="Liberation Serif" font-size="11" fill="#6b6010" textLength="21" lengthAdjust="spacingAndGlyphs">{39}</text><text x="179.5" y="108.0" font-family="Liberation Serif" font-size="11" fill="#6b6010" textLength="21" lengthAdjust="spacingAndGlyphs">{38}</text><text x="193.6" y="108.0" font-family="Liberation Serif" font-size="11" fill="#6b6010" textLength="21" lengthAdjust="spacingAndGlyphs">{37}</text><text x="207.7" y="108.3" font-family="Liberation Serif" font-size="11" fill="#6b6010" textLength="21" lengthAdjust="spacingAndGlyphs">{36}</text><text x="221.8" y="109.2" font-family="Liberation Serif" font-size="11" fill="#6b6010" textLength="21" lengthAdjust="spacingAndGlyphs">{35}</text><text x="235.9" y="110.1" font-family="Liberation Serif" font-size="11" fill="#6b6010" textLength="21" lengthAdjust="spacingAndGlyphs">{34}</text><text x="249.8" y="112.0" font-family="Liberation Serif" font-size="11" fill="#6b6010" textLength="21" lengthAdjust="spacingAndGlyphs">{33}</text><text x="263.8" y="114.0" font-family="Liberation Serif" font-size="11" fill="#6b6010" textLength="21" lengthAdjust="spacingAndGlyphs">{32}</text><text x="277.4" y="117.8" font-family="Liberation Serif" font-size="11" fill="#6b6010" textLength="21" lengthAdjust="spacingAndGlyphs">{31}</text><text x="290.9" y="121.8" font-family="Liberation Serif" font-size="11" fill="#6b6010" textLength="21" lengthAdjust="spacingAndGlyphs">{30}</text><text x="304.0" y="127.0" font-family="Liberation Serif" font-size="11" fill="#6b6010" textLength="21" lengthAdjust="spacingAndGlyphs">{29}</text><text x="313.7" y="143.4" font-family="Liberation Serif" font-size="11" fill="#6b6010" textLength="21" lengthAdjust="spacingAndGlyphs">{28}</text><text x="322.7" y="149.0" font-family="Liberation Serif" font-size="11" fill="#6b6010" textLength="21" lengthAdjust="spacingAndGlyphs">{27}</text><text x="331.0" y="155.0" font-family="Liberation Serif" font-size="11" fill="#6b6010" textLength="21" lengthAdjust="spacingAndGlyphs">{26}</text><text x="339.0" y="160.6" font-family="Liberation Serif" font-size="11" fill="#6b6010" textLength="21" lengthAdjust="spacingAndGlyphs">{25}</text><text x="345.8" y="167.8" font-family="Liberation Serif" font-size="11" fill="#6b6010" textLength="21" lengthAdjust="spacingAndGlyphs">{24}</text><text x="351.7" y="174.8" font-family="Liberation Serif" font-size="11" fill="#6b6010" textLength="21" lengthAdjust="spacingAndGlyphs">{23}</text><text x="357.4" y="182.0" font-family="Liberation Serif" font-size="11" fill="#6b6010" textLength="21" lengthAdjust="spacingAndGlyphs">{22}</text><text x="362.5" y="189.7" font-family="Liberation Serif" font-size="11" fill="#6b6010" textLength="21" lengthAdjust="spacingAndGlyphs">{21}</text><text x="366.4" y="198.7" font-family="Liberation Serif" font-size="11" fill="#6b6010" textLength="21" lengthAdjust="spacingAndGlyphs">{20}</text><text x="369.0" y="207.7" font-family="Liberation Serif" font-size="11" fill="#6b6010" textLength="21" lengthAdjust="spacingAndGlyphs">{19}</text><text x="371.0" y="218.0" font-family="Liberation Serif" font-size="11" fill="#6b6010" textLength="21" lengthAdjust="spacingAndGlyphs">{18}</text><text x="372.3" y="228.0" font-family="Liberation Serif" font-size="11" fill="#6b6010" textLength="21" lengthAdjust="spacingAndGlyphs">{17}</text><text x="373.0" y="239.8" font-family="Liberation Serif" font-size="11" fill="#6b6010" textLength="21" lengthAdjust="spacingAndGlyphs">{16}</text><text x="372.3" y="251.4" font-family="Liberation Serif" font-size="11" fill="#6b6010" textLength="21" lengthAdjust="spacingAndGlyphs">{15}</text><text x="370.7" y="264.0" font-family="Liberation Serif" font-size="11" fill="#6b6010" textLength="21" lengthAdjust="spacingAndGlyphs">{14}</text><text x="368.0" y="277.0" font-family="Liberation Serif" font-size="11" fill="#6b6010" textLength="21" lengthAdjust="spacingAndGlyphs">{13}</text><text x="365.0" y="290.0" font-family="Liberation Serif" font-size="11" fill="#6b6010" textLength="21" lengthAdjust="spacingAndGlyphs">{12}</text><text x="361.0" y="304.0" font-family="Liberation Serif" font-size="11" fill="#6b6010" textLength="21" lengthAdjust="spacingAndGlyphs">{11}</text><text x="355.5" y="319.0" font-family="Liberation Serif" font-size="11" fill="#6b6010" textLength="21" lengthAdjust="spacingAndGlyphs">{10}</text><text x="349.6" y="333.0" font-family="Liberation Serif" font-size="11" fill="#6b6010" textLength="16" lengthAdjust="spacingAndGlyphs">{9}</text><text x="342.7" y="349.8" font-family="Liberation Serif" font-size="11" fill="#6b6010" textLength="16" lengthAdjust="spacingAndGlyphs">{8}</text><text x="334.4" y="366.3" font-family="Liberation Serif" font-size="11" fill="#6b6010" textLength="16" lengthAdjust="spacingAndGlyphs">{7}</text><text x="325.5" y="382.8" font-family="Liberation Serif" font-size="11" fill="#6b6010" textLength="16" lengthAdjust="spacingAndGlyphs">{6}</text><text x="315.6" y="399.8" font-family="Liberation Serif" font-size="11" fill="#6b6010" textLength="16" lengthAdjust="spacingAndGlyphs">{5}</text><text x="304.6" y="417.6" font-family="Liberation Serif" font-size="11" fill="#6b6010" textLength="16" lengthAdjust="spacingAndGlyphs">{4}</text><text x="292.7" y="436.2" font-family="Liberation Serif" font-size="11" fill="#6b6010" textLength="16" lengthAdjust="spacingAndGlyphs">{3}</text><text x="280.0" y="454.0" font-family="Liberation Serif" font-size="11" fill="#6b6010" textLength="16" lengthAdjust="spacingAndGlyphs">{2}</text><text x="266.0" y="473.0" font-family="Liberation Serif" font-size="11" fill="#6b6010" textLength="16" lengthAdjust="spacingAndGlyphs">{1}</text><text x="251.0" y="493.0" font-family="Liberation Serif" font-size="11" fill="#6b6010" textLength="16" lengthAdjust="spacingAndGlyphs">{0}</text></svg>
</body></html>
